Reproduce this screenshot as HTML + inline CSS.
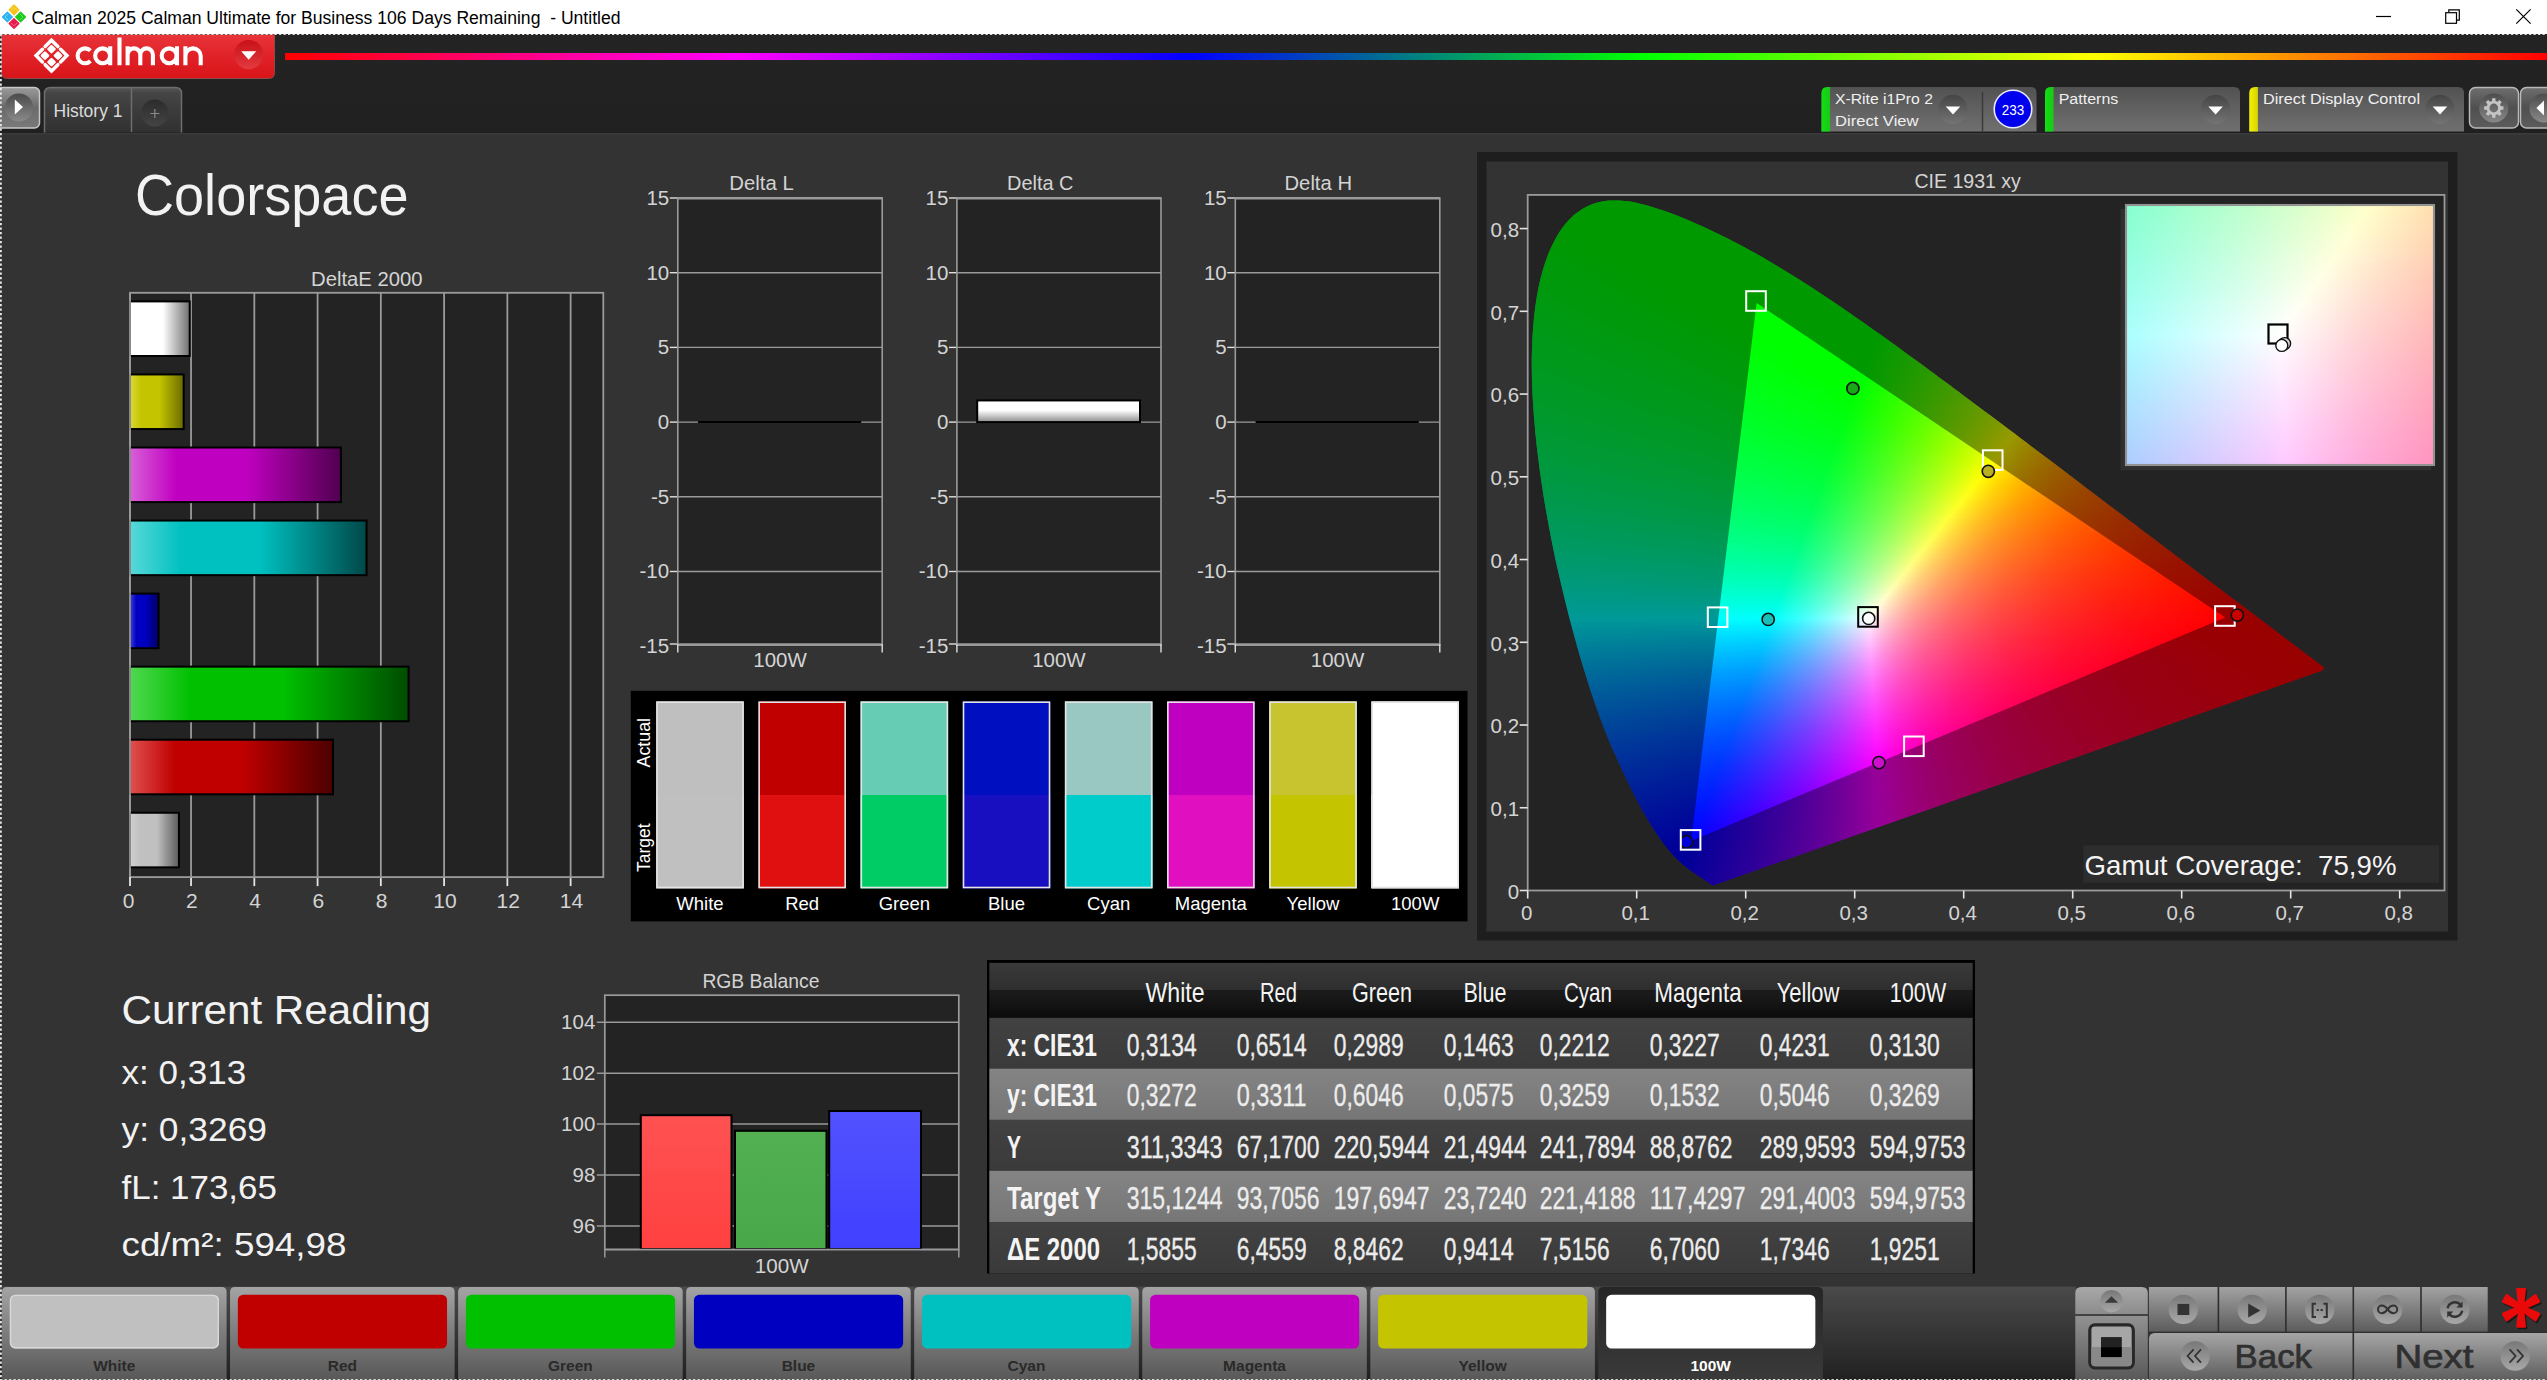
<!DOCTYPE html>
<html><head><meta charset="utf-8"><title>Calman</title>
<style>
html,body{margin:0;padding:0;background:#333333;}
body{width:2547px;height:1380px;overflow:hidden;position:relative;font-family:"Liberation Sans", sans-serif;}
svg{position:absolute;left:0;top:0;}
svg text{font-family:"Liberation Sans", sans-serif;}
#cie,#ins{position:absolute;}
#cie i,#ins i{position:absolute;display:block;}

</style></head><body>
<svg width="2547" height="1380" viewBox="0 0 2547 1380">
<rect x="1477" y="152" width="980.5" height="788.5" fill="#1e1e1e"/>
<rect x="1486.5" y="161.5" width="961.5" height="770" fill="#333333"/>
</svg>
<div style="position:absolute;left:1527.7px;top:194.9px;width:916.8px;height:695.6px;background:#232323"></div><div id="cie" style="left:1528px;top:195px;width:917px;height:696px;clip-path:polygon(184.9px 690.5px,184.8px 690.4px,184.6px 690.3px,184.4px 690.2px,184.2px 690.1px,184.0px 689.9px,183.8px 689.8px,183.6px 689.6px,183.3px 689.5px,183.1px 689.3px,182.8px 689.2px,182.5px 689.0px,182.2px 688.8px,181.9px 688.6px,181.6px 688.4px,181.3px 688.2px,181.0px 688.0px,180.7px 687.7px,180.3px 687.5px,180.0px 687.2px,179.6px 687.0px,179.3px 686.7px,178.9px 686.5px,178.5px 686.2px,178.1px 685.9px,177.7px 685.7px,177.2px 685.4px,176.8px 685.1px,176.3px 684.8px,175.8px 684.4px,175.3px 684.1px,174.8px 683.7px,174.2px 683.4px,173.6px 683.0px,173.0px 682.6px,172.4px 682.2px,171.7px 681.7px,171.1px 681.3px,170.4px 680.9px,169.7px 680.4px,169.0px 679.9px,168.3px 679.4px,167.5px 678.9px,166.7px 678.4px,166.0px 677.9px,165.1px 677.3px,164.3px 676.7px,163.4px 676.1px,162.5px 675.4px,161.6px 674.8px,160.7px 674.0px,159.7px 673.3px,158.7px 672.5px,157.7px 671.7px,156.7px 670.9px,155.6px 670.1px,154.5px 669.2px,153.5px 668.2px,152.3px 667.3px,151.2px 666.2px,150.0px 665.0px,148.7px 663.8px,147.4px 662.5px,146.0px 661.0px,144.6px 659.5px,143.1px 657.8px,141.6px 656.0px,140.0px 654.1px,138.4px 652.1px,136.7px 650.0px,135.0px 647.7px,133.2px 645.3px,131.3px 642.7px,129.5px 640.0px,127.5px 637.1px,125.5px 634.0px,123.5px 630.8px,121.3px 627.3px,119.2px 623.7px,116.9px 619.8px,114.6px 615.7px,112.3px 611.3px,109.8px 606.7px,107.3px 601.9px,104.7px 596.8px,102.0px 591.4px,99.2px 585.7px,96.3px 579.8px,93.4px 573.5px,90.4px 567.0px,87.3px 560.1px,84.1px 553.0px,81.0px 545.5px,77.8px 537.6px,74.6px 529.4px,71.4px 520.9px,68.2px 512.0px,65.0px 502.8px,61.8px 493.2px,58.7px 483.3px,55.5px 473.0px,52.3px 462.4px,49.2px 451.4px,46.0px 440.1px,42.9px 428.5px,39.8px 416.6px,36.8px 404.5px,33.8px 392.1px,30.9px 379.6px,28.0px 366.9px,25.3px 354.0px,22.7px 341.1px,20.3px 328.0px,17.9px 315.0px,15.7px 301.9px,13.7px 288.8px,11.8px 275.8px,10.2px 262.9px,8.6px 250.0px,7.3px 237.3px,6.2px 224.8px,5.3px 212.4px,4.5px 200.3px,4.0px 188.3px,3.8px 176.5px,3.7px 165.0px,4.0px 153.7px,4.4px 142.7px,5.1px 132.0px,6.1px 121.5px,7.3px 111.4px,8.8px 101.7px,10.5px 92.3px,12.6px 83.3px,14.9px 74.8px,17.4px 66.7px,20.2px 59.0px,23.3px 51.9px,26.7px 45.2px,30.2px 39.0px,34.0px 33.3px,37.9px 28.2px,42.1px 23.7px,46.4px 19.6px,51.0px 16.2px,55.6px 13.2px,60.4px 10.8px,65.3px 8.8px,70.4px 7.3px,75.5px 6.3px,80.7px 5.6px,86.0px 5.4px,91.3px 5.5px,96.7px 5.9px,102.1px 6.6px,107.6px 7.6px,113.1px 8.9px,118.6px 10.3px,124.2px 11.9px,129.7px 13.7px,135.3px 15.5px,140.9px 17.5px,146.4px 19.6px,152.0px 21.8px,157.5px 24.0px,162.9px 26.3px,168.3px 28.7px,173.7px 31.1px,179.0px 33.5px,184.2px 36.0px,189.5px 38.5px,194.6px 41.0px,199.8px 43.6px,204.9px 46.2px,210.0px 48.8px,215.0px 51.5px,220.1px 54.2px,225.1px 57.0px,230.1px 59.8px,235.1px 62.6px,240.0px 65.5px,245.0px 68.4px,250.0px 71.4px,254.9px 74.4px,259.9px 77.4px,264.8px 80.5px,269.7px 83.6px,274.7px 86.7px,279.6px 89.8px,284.5px 93.0px,289.4px 96.2px,294.3px 99.4px,299.2px 102.7px,304.1px 106.0px,309.0px 109.3px,313.8px 112.6px,318.7px 115.9px,323.6px 119.3px,328.4px 122.7px,333.3px 126.1px,338.2px 129.5px,343.0px 132.9px,347.9px 136.4px,352.8px 139.8px,357.6px 143.3px,362.5px 146.8px,367.4px 150.3px,372.2px 153.8px,377.1px 157.4px,382.0px 160.9px,386.9px 164.5px,391.8px 168.0px,396.6px 171.6px,401.5px 175.2px,406.4px 178.8px,411.2px 182.4px,416.1px 186.0px,421.0px 189.6px,425.8px 193.2px,430.7px 196.8px,435.5px 200.4px,440.3px 204.0px,445.2px 207.7px,450.0px 211.3px,454.9px 214.9px,459.7px 218.5px,464.5px 222.1px,469.4px 225.7px,474.2px 229.3px,479.0px 232.9px,483.8px 236.5px,488.5px 240.1px,493.3px 243.7px,498.1px 247.3px,502.8px 250.9px,507.5px 254.4px,512.2px 258.0px,516.9px 261.6px,521.6px 265.1px,526.3px 268.6px,530.9px 272.1px,535.5px 275.6px,540.1px 279.1px,544.7px 282.6px,549.3px 286.0px,553.8px 289.5px,558.3px 292.9px,562.8px 296.3px,567.3px 299.7px,571.7px 303.0px,576.2px 306.4px,580.5px 309.7px,584.9px 313.0px,589.2px 316.3px,593.5px 319.5px,597.8px 322.7px,602.0px 325.9px,606.2px 329.1px,610.4px 332.2px,614.5px 335.4px,618.6px 338.4px,622.7px 341.5px,626.7px 344.5px,630.6px 347.5px,634.5px 350.5px,638.4px 353.4px,642.2px 356.3px,646.0px 359.2px,649.7px 362.0px,653.3px 364.7px,656.9px 367.4px,660.4px 370.1px,663.8px 372.7px,667.1px 375.2px,670.4px 377.7px,673.7px 380.2px,676.9px 382.6px,680.0px 384.9px,683.1px 387.3px,686.2px 389.6px,689.2px 391.9px,692.2px 394.1px,695.1px 396.4px,698.0px 398.5px,700.8px 400.7px,703.6px 402.7px,706.2px 404.8px,708.9px 406.7px,711.4px 408.6px,713.9px 410.5px,716.3px 412.3px,718.7px 414.1px,721.0px 415.8px,723.2px 417.5px,725.4px 419.1px,727.6px 420.8px,729.6px 422.3px,731.7px 423.9px,733.6px 425.4px,735.6px 426.8px,737.4px 428.3px,739.2px 429.6px,741.0px 431.0px,742.7px 432.3px,744.4px 433.6px,746.0px 434.8px,747.6px 436.0px,749.1px 437.1px,750.6px 438.3px,752.0px 439.4px,753.4px 440.4px,754.8px 441.4px,756.1px 442.4px,757.4px 443.4px,758.7px 444.3px,759.9px 445.3px,761.1px 446.2px,762.2px 447.0px,763.4px 447.9px,764.4px 448.7px,765.5px 449.5px,766.5px 450.3px,767.5px 451.0px,768.5px 451.8px,769.5px 452.5px,770.4px 453.2px,771.3px 453.9px,772.2px 454.6px,773.1px 455.2px,773.9px 455.9px,774.8px 456.5px,775.6px 457.2px,776.4px 457.8px,777.2px 458.4px,778.0px 458.9px,778.7px 459.5px,779.4px 460.1px,780.1px 460.6px,780.8px 461.1px,781.5px 461.6px,782.2px 462.1px,782.8px 462.6px,783.4px 463.1px,784.0px 463.5px,784.6px 464.0px,785.2px 464.4px,785.7px 464.8px,786.3px 465.2px,786.8px 465.6px,787.3px 466.0px,787.8px 466.3px,788.2px 466.7px,788.7px 467.0px,789.1px 467.3px,789.5px 467.6px,789.9px 467.9px,790.3px 468.2px,790.7px 468.5px,791.0px 468.8px,791.4px 469.1px,791.7px 469.3px,792.1px 469.6px,792.4px 469.8px,792.7px 470.0px,793.0px 470.3px,793.3px 470.5px,793.5px 470.7px,793.8px 470.9px,794.1px 471.1px,794.3px 471.3px,794.6px 471.5px,794.8px 471.6px,795.0px 471.8px,795.2px 472.0px,795.4px 472.1px,795.6px 472.2px,795.6px 472.3px,795.6px 475.0px)"><i style="left:76px;top:4px;width:23px;height:2px;background:linear-gradient(90deg,#0f0 0px,#0f0 23px)"></i><i style="left:66px;top:6px;width:45px;height:2px;background:linear-gradient(90deg,#0f0 0px,#0f0 45px)"></i><i style="left:60px;top:8px;width:59px;height:2px;background:linear-gradient(90deg,#0f0 0px,#0f0 59px)"></i><i style="left:56px;top:10px;width:70px;height:2px;background:linear-gradient(90deg,#0f0 0px,#0f0 70px)"></i><i style="left:52px;top:12px;width:81px;height:2px;background:linear-gradient(90deg,#0f0 0px,#0f0 81px)"></i><i style="left:49px;top:14px;width:90px;height:2px;background:linear-gradient(90deg,#0f0 0px,#0f0 90px)"></i><i style="left:47px;top:16px;width:97px;height:2px;background:linear-gradient(90deg,#0f0 0px,#0f0 97px)"></i><i style="left:44px;top:18px;width:105px;height:2px;background:linear-gradient(90deg,#0f0 0px,#0f0 105px)"></i><i style="left:42px;top:20px;width:112px;height:2px;background:linear-gradient(90deg,#0f0 0px,#0f0 112px)"></i><i style="left:40px;top:22px;width:119px;height:2px;background:linear-gradient(90deg,#0f0 0px,#0f0 119px)"></i><i style="left:38px;top:24px;width:126px;height:2px;background:linear-gradient(90deg,#0f0 0px,#0f0 126px)"></i><i style="left:36px;top:26px;width:133px;height:2px;background:linear-gradient(90deg,#00ff01 0px,#0f0 133px)"></i><i style="left:35px;top:28px;width:138px;height:2px;background:linear-gradient(90deg,#00ff02 0px,#0f0 138px)"></i><i style="left:33px;top:30px;width:145px;height:2px;background:linear-gradient(90deg,#00ff02 0px,#0f0 15px,#0f0 145px)"></i><i style="left:32px;top:32px;width:150px;height:2px;background:linear-gradient(90deg,#00ff03 0px,#0f0 20px,#0f0 150px)"></i><i style="left:30px;top:34px;width:156px;height:2px;background:linear-gradient(90deg,#00ff04 0px,#0f0 25px,#0f0 156px)"></i><i style="left:29px;top:36px;width:162px;height:2px;background:linear-gradient(90deg,#00ff05 0px,#0f0 29px,#0f0 162px)"></i><i style="left:28px;top:38px;width:167px;height:2px;background:linear-gradient(90deg,#00ff05 0px,#0f0 33px,#0f0 167px)"></i><i style="left:26px;top:40px;width:173px;height:2px;background:linear-gradient(90deg,#00ff06 0px,#0f0 39px,#0f0 173px)"></i><i style="left:25px;top:42px;width:178px;height:2px;background:linear-gradient(90deg,#00ff07 0px,#0f0 43px,#0f0 178px)"></i><i style="left:24px;top:44px;width:183px;height:2px;background:linear-gradient(90deg,#00ff08 0px,#0f0 47px,#0f0 183px)"></i><i style="left:23px;top:46px;width:187px;height:2px;background:linear-gradient(90deg,#00ff08 0px,#0f0 52px,#0f0 187px)"></i><i style="left:22px;top:48px;width:192px;height:2px;background:linear-gradient(90deg,#00ff09 0px,#0f0 56px,#0f0 192px)"></i><i style="left:21px;top:50px;width:197px;height:2px;background:linear-gradient(90deg,#00ff0a 0px,#0f0 60px,#0f0 197px)"></i><i style="left:20px;top:52px;width:202px;height:2px;background:linear-gradient(90deg,#00ff0a 0px,#0f0 65px,#0f0 202px)"></i><i style="left:20px;top:54px;width:205px;height:2px;background:linear-gradient(90deg,#00ff0b 0px,#0f0 68px,#0f0 205px)"></i><i style="left:19px;top:56px;width:210px;height:2px;background:linear-gradient(90deg,#00ff0c 0px,#0f0 72px,#0f0 210px)"></i><i style="left:18px;top:58px;width:214px;height:2px;background:linear-gradient(90deg,#00ff0c 0px,#0f0 77px,#0f0 214px)"></i><i style="left:17px;top:60px;width:219px;height:2px;background:linear-gradient(90deg,#00ff0d 0px,#0f0 81px,#0f0 219px)"></i><i style="left:16px;top:62px;width:223px;height:2px;background:linear-gradient(90deg,#00ff0e 0px,#0f0 85px,#0f0 223px)"></i><i style="left:16px;top:64px;width:227px;height:2px;background:linear-gradient(90deg,#00ff0f 0px,#0f0 88px,#0f0 227px)"></i><i style="left:15px;top:66px;width:231px;height:2px;background:linear-gradient(90deg,#00ff0f 0px,#0f0 93px,#0f0 231px)"></i><i style="left:14px;top:68px;width:236px;height:2px;background:linear-gradient(90deg,#00ff10 0px,#0f0 97px,#0f0 236px)"></i><i style="left:14px;top:70px;width:239px;height:2px;background:linear-gradient(90deg,#0f1 0px,#0f0 100px,#0f0 239px)"></i><i style="left:13px;top:72px;width:243px;height:2px;background:linear-gradient(90deg,#0f1 0px,#0f0 105px,#0f0 243px)"></i><i style="left:13px;top:74px;width:247px;height:2px;background:linear-gradient(90deg,#00ff12 0px,#0f0 108px,#0f0 247px)"></i><i style="left:12px;top:76px;width:251px;height:2px;background:linear-gradient(90deg,#00ff13 0px,#0f0 112px,#0f0 251px)"></i><i style="left:11px;top:78px;width:255px;height:2px;background:linear-gradient(90deg,#00ff14 0px,#0f0 117px,#0f0 255px)"></i><i style="left:11px;top:80px;width:258px;height:2px;background:linear-gradient(90deg,#00ff14 0px,#0f0 120px,#0f0 258px)"></i><i style="left:10px;top:82px;width:262px;height:2px;background:linear-gradient(90deg,#00ff15 0px,#0f0 124px,#0f0 262px)"></i><i style="left:10px;top:84px;width:266px;height:2px;background:linear-gradient(90deg,#00ff16 0px,#0f0 128px,#0f0 266px)"></i><i style="left:10px;top:86px;width:269px;height:2px;background:linear-gradient(90deg,#00ff16 0px,#0f0 131px,#0f0 269px)"></i><i style="left:9px;top:88px;width:273px;height:2px;background:linear-gradient(90deg,#00ff17 0px,#0f0 135px,#0f0 273px)"></i><i style="left:9px;top:90px;width:276px;height:2px;background:linear-gradient(90deg,#00ff18 0px,#0f0 138px,#0f0 276px)"></i><i style="left:8px;top:92px;width:280px;height:2px;background:linear-gradient(90deg,#00ff18 0px,#0f0 143px,#0f0 280px)"></i><i style="left:8px;top:94px;width:283px;height:2px;background:linear-gradient(90deg,#00ff19 0px,#0f0 146px,#0f0 283px)"></i><i style="left:7px;top:96px;width:287px;height:2px;background:linear-gradient(90deg,#00ff1a 0px,#0f0 150px,#0f0 287px)"></i><i style="left:7px;top:98px;width:290px;height:2px;background:linear-gradient(90deg,#00ff1b 0px,#0f0 154px,#0f0 290px)"></i><i style="left:7px;top:100px;width:293px;height:2px;background:linear-gradient(90deg,#00ff1b 0px,#0f0 157px,#0f0 293px)"></i><i style="left:6px;top:102px;width:297px;height:2px;background:linear-gradient(90deg,#00ff1c 0px,#0f0 161px,#0f0 297px)"></i><i style="left:6px;top:104px;width:300px;height:2px;background:linear-gradient(90deg,#00ff1d 0px,#0f0 165px,#0f0 300px)"></i><i style="left:6px;top:106px;width:303px;height:2px;background:linear-gradient(90deg,#00ff1d 0px,#0f0 168px,#0f0 303px)"></i><i style="left:6px;top:108px;width:306px;height:2px;background:linear-gradient(90deg,#00ff1e 0px,#0f0 171px,#0f0 306px)"></i><i style="left:5px;top:110px;width:310px;height:2px;background:linear-gradient(90deg,#00ff1f 0px,#0f0 176px,#0f0 310px)"></i><i style="left:5px;top:112px;width:313px;height:2px;background:linear-gradient(90deg,#00ff20 0px,#0f0 179px,#0f0 313px)"></i><i style="left:5px;top:114px;width:316px;height:2px;background:linear-gradient(90deg,#00ff20 0px,#0f0 182px,#0f0 316px)"></i><i style="left:5px;top:116px;width:319px;height:2px;background:linear-gradient(90deg,#00ff21 0px,#0f0 186px,#0f0 319px)"></i><i style="left:4px;top:118px;width:323px;height:2px;background:linear-gradient(90deg,#0f2 0px,#0f0 190px,#0f0 323px)"></i><i style="left:4px;top:120px;width:325px;height:2px;background:linear-gradient(90deg,#00ff23 0px,#0f0 193px,#0f0 325px)"></i><i style="left:4px;top:122px;width:328px;height:2px;background:linear-gradient(90deg,#00ff23 0px,#0f0 197px,#0f0 328px)"></i><i style="left:4px;top:124px;width:331px;height:2px;background:linear-gradient(90deg,#00ff24 0px,#0f0 200px,#0f0 331px)"></i><i style="left:3px;top:126px;width:335px;height:2px;background:linear-gradient(90deg,#00ff25 0px,#0f0 204px,#0f0 335px)"></i><i style="left:3px;top:128px;width:338px;height:2px;background:linear-gradient(90deg,#00ff26 0px,#0f0 207px,#0f0 338px)"></i><i style="left:3px;top:130px;width:341px;height:2px;background:linear-gradient(90deg,#00ff26 0px,#0f0 211px,#0f0 341px)"></i><i style="left:3px;top:132px;width:344px;height:2px;background:linear-gradient(90deg,#00ff27 0px,#0f0 214px,#0f0 344px)"></i><i style="left:3px;top:134px;width:346px;height:2px;background:linear-gradient(90deg,#00ff28 0px,#0f0 217px,#0f0 346px)"></i><i style="left:3px;top:136px;width:349px;height:2px;background:linear-gradient(90deg,#00ff29 0px,#0f0 221px,#0f0 346px,#02ff00 349px)"></i><i style="left:3px;top:138px;width:352px;height:2px;background:linear-gradient(90deg,#00ff29 0px,#0f0 224px,#0f0 345px,#06ff00 352px)"></i><i style="left:2px;top:140px;width:356px;height:2px;background:linear-gradient(90deg,#00ff2a 0px,#0f0 228px,#0f0 346px,#09ff00 356px)"></i><i style="left:2px;top:142px;width:359px;height:2px;background:linear-gradient(90deg,#00ff2b 0px,#0f0 232px,#0f0 345px,#0dff00 359px)"></i><i style="left:2px;top:144px;width:361px;height:2px;background:linear-gradient(90deg,#00ff2c 0px,#00ff17 123px,#0f0 235px,#0f0 344px,#10ff00 361px)"></i><i style="left:2px;top:146px;width:364px;height:2px;background:linear-gradient(90deg,#00ff2c 0px,#00ff17 125px,#0f0 238px,#0f0 343px,#13ff00 364px)"></i><i style="left:2px;top:148px;width:367px;height:2px;background:linear-gradient(90deg,#00ff2d 0px,#00ff18 126px,#0f0 242px,#0f0 343px,#17ff00 367px)"></i><i style="left:2px;top:150px;width:370px;height:2px;background:linear-gradient(90deg,#00ff2e 0px,#00ff18 129px,#0f0 245px,#0f0 342px,#1bff00 370px)"></i><i style="left:2px;top:152px;width:372px;height:2px;background:linear-gradient(90deg,#00ff2f 0px,#00ff19 130px,#0f0 248px,#0f0 341px,#1eff00 372px)"></i><i style="left:2px;top:154px;width:375px;height:2px;background:linear-gradient(90deg,#00ff30 0px,#00ff19 131px,#0f0 252px,#0f0 340px,#2f0 375px)"></i><i style="left:2px;top:156px;width:378px;height:2px;background:linear-gradient(90deg,#00ff30 0px,#00ff1a 134px,#0f0 255px,#0f0 340px,#26ff00 378px)"></i><i style="left:2px;top:158px;width:381px;height:2px;background:linear-gradient(90deg,#00ff31 0px,#00ff1a 136px,#0f0 258px,#0f0 339px,#2aff00 381px)"></i><i style="left:2px;top:160px;width:383px;height:2px;background:linear-gradient(90deg,#00ff32 0px,#00ff1a 138px,#0f0 261px,#0f0 338px,#2dff00 383px)"></i><i style="left:2px;top:162px;width:386px;height:2px;background:linear-gradient(90deg,#0f3 0px,#00ff1b 140px,#0f0 265px,#0f0 338px,#31ff00 386px)"></i><i style="left:2px;top:164px;width:389px;height:2px;background:linear-gradient(90deg,#00ff34 0px,#00ff1b 142px,#0f0 268px,#0f0 337px,#35ff00 389px)"></i><i style="left:2px;top:166px;width:392px;height:2px;background:linear-gradient(90deg,#00ff35 0px,#00ff1c 143px,#0f0 271px,#0f0 336px,#39ff00 392px)"></i><i style="left:2px;top:168px;width:394px;height:2px;background:linear-gradient(90deg,#00ff35 0px,#00ff1c 145px,#0f0 275px,#0f0 335px,#3dff00 394px)"></i><i style="left:2px;top:170px;width:397px;height:2px;background:linear-gradient(90deg,#00ff36 0px,#00ff1d 147px,#0f0 278px,#0f0 335px,#41ff00 397px)"></i><i style="left:2px;top:172px;width:400px;height:2px;background:linear-gradient(90deg,#00ff37 0px,#00ff1d 149px,#0f0 281px,#0f0 334px,#46ff00 400px)"></i><i style="left:2px;top:174px;width:403px;height:2px;background:linear-gradient(90deg,#00ff38 0px,#00ff1e 151px,#0f0 285px,#0f0 333px,#4aff00 403px)"></i><i style="left:2px;top:176px;width:405px;height:2px;background:linear-gradient(90deg,#00ff39 0px,#00ff1e 153px,#0f0 288px,#0f0 332px,#4eff00 405px)"></i><i style="left:2px;top:178px;width:408px;height:2px;background:linear-gradient(90deg,#00ff3a 0px,#00ff1f 155px,#0f0 291px,#0f0 332px,#52ff00 408px)"></i><i style="left:2px;top:180px;width:411px;height:2px;background:linear-gradient(90deg,#00ff3b 0px,#00ff1f 157px,#0f0 295px,#0f0 331px,#28ff00 370px,#57ff00 411px)"></i><i style="left:2px;top:182px;width:413px;height:2px;background:linear-gradient(90deg,#00ff3b 0px,#00ff20 159px,#0f0 298px,#0f0 330px,#29ff00 370px,#5bff00 413px)"></i><i style="left:2px;top:184px;width:416px;height:2px;background:linear-gradient(90deg,#00ff3c 0px,#00ff20 161px,#0f0 301px,#0f0 330px,#2fff00 374px,#60ff00 416px)"></i><i style="left:2px;top:186px;width:419px;height:2px;background:linear-gradient(90deg,#00ff3d 0px,#00ff21 162px,#0f0 304px,#0f0 329px,#31ff00 375px,#65ff00 419px)"></i><i style="left:2px;top:188px;width:422px;height:2px;background:linear-gradient(90deg,#00ff3e 0px,#00ff21 165px,#0f0 308px,#0f0 328px,#32ff00 375px,#6aff00 422px)"></i><i style="left:2px;top:190px;width:424px;height:2px;background:linear-gradient(90deg,#00ff3f 0px,#00ff27 140px,#0f0 311px,#0f0 327px,#32ff00 374px,#6eff00 424px)"></i><i style="left:2px;top:192px;width:427px;height:2px;background:linear-gradient(90deg,#00ff40 0px,#00ff26 148px,#0f0 314px,#0f0 327px,#38ff00 378px,#74ff00 427px)"></i><i style="left:2px;top:194px;width:430px;height:2px;background:linear-gradient(90deg,#00ff41 0px,#00ff26 157px,#0f0 326px,#3aff00 379px,#79ff00 430px)"></i><i style="left:2px;top:196px;width:432px;height:2px;background:linear-gradient(90deg,#00ff42 0px,#00ff25 167px,#0f0 325px,#3bff00 379px,#7dff00 432px)"></i><i style="left:2px;top:198px;width:435px;height:2px;background:linear-gradient(90deg,#00ff43 0px,#00ff24 174px,#0f0 325px,#40ff00 382px,#83ff00 435px)"></i><i style="left:3px;top:200px;width:437px;height:2px;background:linear-gradient(90deg,#00ff43 0px,#00ff25 174px,#00ff01 323px,#42ff00 382px,#89ff00 437px)"></i><i style="left:3px;top:202px;width:439px;height:2px;background:linear-gradient(90deg,#0f4 0px,#00ff26 173px,#00ff02 322px,#43ff00 382px,#8dff00 439px)"></i><i style="left:3px;top:204px;width:442px;height:2px;background:linear-gradient(90deg,#00ff45 0px,#00ff27 173px,#00ff04 321px,#0dff00 334px,#45ff00 382px,#93ff00 442px)"></i><i style="left:3px;top:206px;width:445px;height:2px;background:linear-gradient(90deg,#00ff46 0px,#00ff28 173px,#00ff05 321px,#12ff00 337px,#49ff00 385px,#9f0 445px)"></i><i style="left:3px;top:208px;width:447px;height:2px;background:linear-gradient(90deg,#00ff47 0px,#00ff29 172px,#00ff06 320px,#16ff00 340px,#4cff00 386px,#9eff00 447px)"></i><i style="left:3px;top:210px;width:450px;height:2px;background:linear-gradient(90deg,#00ff48 0px,#00ff2a 172px,#00ff07 319px,#1bff00 344px,#4dff00 386px,#a4ff00 450px)"></i><i style="left:3px;top:212px;width:453px;height:2px;background:linear-gradient(90deg,#00ff49 0px,#00ff2b 171px,#00ff08 318px,#20ff00 347px,#50ff00 387px,#abff00 453px)"></i><i style="left:3px;top:214px;width:455px;height:2px;background:linear-gradient(90deg,#00ff4a 0px,#00ff2c 171px,#00ff09 318px,#24ff00 350px,#54ff00 389px,#b0ff00 455px)"></i><i style="left:4px;top:216px;width:457px;height:2px;background:linear-gradient(90deg,#00ff4b 0px,#00ff2d 170px,#00ff0b 316px,#29ff00 352px,#56ff00 389px,#86ff00 424px,#b7ff00 457px)"></i><i style="left:4px;top:218px;width:460px;height:2px;background:linear-gradient(90deg,#00ff4c 0px,#00ff2e 170px,#00ff0c 315px,#2eff00 356px,#59ff00 390px,#8aff00 426px,#beff00 460px)"></i><i style="left:4px;top:220px;width:462px;height:2px;background:linear-gradient(90deg,#00ff4d 0px,#00ff30 170px,#00ff0d 315px,#3f0 359px,#5dff00 392px,#8fff00 428px,#c3ff00 462px)"></i><i style="left:4px;top:222px;width:465px;height:2px;background:linear-gradient(90deg,#00ff4e 0px,#00ff31 169px,#00ff0e 314px,#38ff00 362px,#60ff00 393px,#94ff00 430px,#caff00 465px)"></i><i style="left:4px;top:224px;width:468px;height:2px;background:linear-gradient(90deg,#00ff4f 0px,#00ff32 169px,#00ff10 313px,#3eff00 366px,#63ff00 394px,#9f0 432px,#d1ff00 468px)"></i><i style="left:4px;top:226px;width:470px;height:2px;background:linear-gradient(90deg,#00ff50 0px,#0f3 168px,#0f1 312px,#43ff00 369px,#64ff00 394px,#9cff00 433px,#d7ff00 470px)"></i><i style="left:4px;top:228px;width:473px;height:2px;background:linear-gradient(90deg,#00ff51 0px,#00ff34 168px,#00ff12 312px,#49ff00 372px,#6aff00 397px,#a3ff00 436px,#dfff00 473px)"></i><i style="left:5px;top:230px;width:475px;height:2px;background:linear-gradient(90deg,#00ff52 0px,#00ff35 167px,#00ff13 310px,#4eff00 374px,#6dff00 397px,#a8ff00 437px,#e7ff00 475px)"></i><i style="left:5px;top:232px;width:477px;height:2px;background:linear-gradient(90deg,#00ff53 0px,#00ff36 167px,#00ff15 309px,#54ff00 378px,#6fff00 397px,#acff00 438px,#edff00 477px)"></i><i style="left:5px;top:234px;width:480px;height:2px;background:linear-gradient(90deg,#00ff54 0px,#00ff38 166px,#00ff16 308px,#29ff0c 343px,#5aff00 381px,#72ff00 398px,#b1ff00 440px,#f5ff00 480px)"></i><i style="left:5px;top:236px;width:483px;height:2px;background:linear-gradient(90deg,#00ff56 0px,#00ff39 166px,#00ff17 308px,#2fff0c 347px,#60ff00 384px,#78ff00 401px,#b8ff00 443px,#fdff00 483px)"></i><i style="left:5px;top:238px;width:485px;height:2px;background:linear-gradient(90deg,#00ff57 0px,#00ff3a 166px,#00ff19 307px,#31ff0d 348px,#67ff00 388px,#b1ff00 437px,#feff00 482px,#fffa00 485px)"></i><i style="left:6px;top:240px;width:487px;height:2px;background:linear-gradient(90deg,#00ff58 0px,#00ff3b 165px,#00ff1a 305px,#32ff0e 347px,#6dff00 390px,#b3ff00 436px,#feff00 479px,#fff200 487px)"></i><i style="left:6px;top:242px;width:490px;height:2px;background:linear-gradient(90deg,#00ff59 0px,#00ff3c 165px,#00ff1b 305px,#3aff0e 352px,#78ff00 397px,#baff00 439px,#ff0 478px,#ffea00 490px)"></i><i style="left:6px;top:244px;width:492px;height:2px;background:linear-gradient(90deg,#00ff5a 0px,#00ff3e 164px,#00ff1d 304px,#3aff0f 351px,#77ff01 395px,#b9ff00 437px,#feff00 476px,#ffe400 492px)"></i><i style="left:6px;top:246px;width:495px;height:2px;background:linear-gradient(90deg,#00ff5b 0px,#00ff3f 164px,#00ff1e 303px,#39ff11 349px,#78ff02 394px,#baff00 436px,#ff0 475px,#fd0 495px)"></i><i style="left:6px;top:248px;width:498px;height:2px;background:linear-gradient(90deg,#00ff5c 0px,#00ff40 163px,#00ff20 302px,#37ff13 347px,#76ff04 392px,#89ff00 404px,#b9ff00 434px,#feff00 473px,#ffd600 498px)"></i><i style="left:7px;top:250px;width:499px;height:2px;background:linear-gradient(90deg,#00ff5d 0px,#00ff41 163px,#00ff21 301px,#3aff14 347px,#78ff05 391px,#8fff00 406px,#c5ff00 439px,#fdff00 470px,#ffd100 499px)"></i><i style="left:7px;top:252px;width:502px;height:2px;background:linear-gradient(90deg,#00ff5e 0px,#00ff43 162px,#00ff23 300px,#3aff15 346px,#78ff07 390px,#96ff00 409px,#caff00 440px,#ff0 469px,#ffe200 486px,#ffca00 502px)"></i><i style="left:7px;top:254px;width:505px;height:2px;background:linear-gradient(90deg,#00ff60 0px,#0f4 161px,#00ff24 299px,#39ff17 344px,#77ff09 388px,#9eff00 413px,#feff00 467px,#ffde00 487px,#ffc400 505px)"></i><i style="left:7px;top:256px;width:507px;height:2px;background:linear-gradient(90deg,#00ff61 0px,#00ff46 161px,#00ff26 298px,#36ff19 341px,#76ff0b 386px,#a5ff00 416px,#ff0 466px,#ffde00 485px,#ffbf00 507px)"></i><i style="left:8px;top:258px;width:509px;height:2px;background:linear-gradient(90deg,#00ff62 0px,#00ff47 160px,#00ff27 297px,#3aff1a 342px,#78ff0c 385px,#adff00 418px,#feff00 463px,#ffd800 486px,#ffb900 509px)"></i><i style="left:8px;top:260px;width:512px;height:2px;background:linear-gradient(90deg,#00ff63 0px,#00ff48 160px,#00ff29 296px,#3aff1c 341px,#78ff0e 384px,#b4ff00 421px,#ff0 462px,#ffd700 485px,#ffb400 512px)"></i><i style="left:8px;top:262px;width:514px;height:2px;background:linear-gradient(90deg,#00ff64 0px,#00ff4a 159px,#00ff2a 295px,#38ff1e 339px,#77ff10 382px,#beff00 425px,#feff00 460px,#ffd300 486px,#ffaf00 514px)"></i><i style="left:8px;top:264px;width:517px;height:2px;background:linear-gradient(90deg,#00ff65 0px,#00ff4b 159px,#00ff2c 294px,#36ff20 336px,#76ff12 380px,#c5ff00 428px,#fffe00 459px,#ffd100 486px,#fa0 517px)"></i><i style="left:9px;top:266px;width:518px;height:2px;background:linear-gradient(90deg,#00ff67 0px,#00ff4c 158px,#00ff2d 293px,#3aff21 337px,#77ff13 379px,#cdff00 430px,#ff0 456px,#ffce00 485px,#ffa600 518px)"></i><i style="left:9px;top:268px;width:521px;height:2px;background:linear-gradient(90deg,#00ff68 0px,#00ff4e 158px,#00ff2f 292px,#3aff22 336px,#78ff15 378px,#a7ff0a 407px,#d7ff00 434px,#feff00 454px,#ffca00 486px,#ffa100 521px)"></i><i style="left:9px;top:270px;width:524px;height:2px;background:linear-gradient(90deg,#00ff69 0px,#00ff4f 157px,#00ff31 291px,#37ff25 333px,#76ff17 376px,#aaff0c 407px,#e0ff00 437px,#ff0 453px,#ffe300 468px,#ffc900 485px,#ffb100 504px,#ff9c00 524px)"></i><i style="left:9px;top:272px;width:526px;height:2px;background:linear-gradient(90deg,#00ff6a 0px,#00ff51 157px,#00ff32 291px,#3bff25 335px,#78ff18 376px,#baff0a 415px,#e9ff00 440px,#feff00 451px,#ffe000 468px,#ffc700 485px,#ffae00 505px,#ff9800 526px)"></i><i style="left:10px;top:274px;width:528px;height:2px;background:linear-gradient(90deg,#00ff6c 0px,#00ff52 156px,#00ff34 289px,#39ff27 332px,#77ff1a 373px,#b7ff0d 411px,#f2ff00 442px,#fffe00 449px,#ffdf00 466px,#ffc300 485px,#ffab00 505px,#ff9400 528px)"></i><i style="left:10px;top:276px;width:531px;height:2px;background:linear-gradient(90deg,#00ff6d 0px,#00ff53 156px,#00ff35 288px,#39ff29 331px,#77ff1c 372px,#baff0e 411px,#ff0 447px,#ffde00 465px,#ffc100 485px,#ffa600 507px,#ff8f00 531px)"></i><i style="left:10px;top:278px;width:533px;height:2px;background:linear-gradient(90deg,#00ff6e 0px,#0f5 155px,#00ff37 287px,#35ff2c 327px,#74ff1f 369px,#b3ff12 406px,#fffe01 446px,#fd0 464px,#ffbe00 485px,#ffa300 508px,#ff8c00 533px)"></i><i style="left:10px;top:280px;width:536px;height:2px;background:linear-gradient(90deg,#00ff6f 0px,#00ff56 155px,#00ff39 287px,#3bff2d 330px,#78ff20 370px,#b9ff12 408px,#ffff04 444px,#ffdc00 463px,#ffbc00 485px,#ffa000 509px,#ff8700 536px)"></i><i style="left:11px;top:282px;width:538px;height:2px;background:linear-gradient(90deg,#00ff71 0px,#00ff58 154px,#00ff3a 285px,#3bff2e 328px,#78ff22 368px,#baff14 406px,#feff06 441px,#ffe500 455px,#ffba00 484px,#ff9d00 509px,#ff8300 538px)"></i><i style="left:11px;top:284px;width:540px;height:2px;background:linear-gradient(90deg,#00ff72 0px,#00ff59 154px,#00ff3c 284px,#38ff31 325px,#77ff24 366px,#b7ff17 403px,#fffe08 440px,#fd0 458px,#ffb700 484px,#ff9a00 510px,#ff8000 540px)"></i><i style="left:11px;top:286px;width:543px;height:2px;background:linear-gradient(90deg,#00ff73 0px,#00ff5b 153px,#00ff3e 283px,#36ff33 323px,#76ff26 364px,#b8ff19 402px,#ffff0a 438px,#ffd500 461px,#ffb500 484px,#ff9600 512px,#ff7c00 543px)"></i><i style="left:12px;top:288px;width:545px;height:2px;background:linear-gradient(90deg,#00ff75 0px,#00ff5c 153px,#00ff40 282px,#39ff34 323px,#76ff28 362px,#b5ff1b 398px,#fffe0c 436px,#ffd602 458px,#ffb300 483px,#ff9300 512px,#ff7800 545px)"></i><i style="left:12px;top:290px;width:547px;height:2px;background:linear-gradient(90deg,#00ff76 0px,#00ff5e 152px,#00ff41 281px,#3aff36 323px,#78ff2a 362px,#b9ff1d 399px,#ffff0f 434px,#ffd504 457px,#ffc500 467px,#ffb000 483px,#ff9100 513px,#ff7500 547px)"></i><i style="left:12px;top:292px;width:550px;height:2px;background:linear-gradient(90deg,#0f7 0px,#00ff5f 152px,#00ff43 280px,#37ff38 320px,#76ff2c 360px,#b8ff1f 397px,#feff11 432px,#ffd306 456px,#ffbf00 470px,#ffae00 483px,#ff8e00 514px,#ff7200 550px)"></i><i style="left:13px;top:294px;width:551px;height:2px;background:linear-gradient(90deg,#00ff79 0px,#00ff61 150px,#00ff45 278px,#34ff3b 316px,#75ff2e 357px,#b7ff21 394px,#fffe13 430px,#ffd207 454px,#ffb700 473px,#ffac00 482px,#ff8b00 514px,#ff6f00 551px)"></i><i style="left:13px;top:296px;width:554px;height:2px;background:linear-gradient(90deg,#00ff7a 0px,#00ff63 151px,#00ff47 278px,#3aff3c 319px,#77ff30 357px,#baff23 394px,#ffff16 428px,#ffd109 453px,#fa0 482px,#f80 515px,#ff6b00 554px)"></i><i style="left:13px;top:298px;width:557px;height:2px;background:linear-gradient(90deg,#00ff7c 0px,#00ff64 150px,#00ff49 277px,#39ff3e 317px,#76ff32 355px,#b5ff26 390px,#fffe18 427px,#ffd00b 452px,#ffa700 482px,#ff8500 517px,#ff6800 557px)"></i><i style="left:13px;top:300px;width:559px;height:2px;background:linear-gradient(90deg,#00ff7d 0px,#0f6 149px,#00ff4b 276px,#37ff40 315px,#76ff34 354px,#b7ff28 390px,#ffff1b 425px,#ffcf0c 451px,#ffa601 481px,#ff8300 517px,#ff6500 559px)"></i><i style="left:14px;top:302px;width:561px;height:2px;background:linear-gradient(90deg,#00ff7e 0px,#00ff68 148px,#00ff4d 274px,#34ff43 311px,#75ff37 351px,#b8ff2a 388px,#feff1d 422px,#ffcc0e 450px,#ffa301 481px,#ff8000 518px,#ff6200 561px)"></i><i style="left:14px;top:304px;width:564px;height:2px;background:linear-gradient(90deg,#00ff80 0px,#00ff69 148px,#00ff4e 274px,#3aff44 314px,#77ff39 351px,#b7ff2d 386px,#ffff1f 421px,#ffe417 434px,#ffcc10 448px,#ffa203 480px,#ff9800 489px,#ff7e00 518px,#ff5f00 564px)"></i><i style="left:14px;top:306px;width:566px;height:2px;background:linear-gradient(90deg,#00ff81 0px,#00ff6b 148px,#00ff51 273px,#39ff46 312px,#77ff3b 350px,#baff2f 386px,#ff2 419px,#ffe319 433px,#ffcb12 447px,#ffa004 480px,#ff9300 492px,#ff7b00 519px,#ff5d00 566px)"></i><i style="left:15px;top:308px;width:568px;height:2px;background:linear-gradient(90deg,#00ff83 0px,#00ff6d 147px,#00ff53 271px,#35ff49 308px,#75ff3d 347px,#b4ff32 381px,#fffe24 417px,#ffe41c 430px,#ffca13 445px,#ff9e05 479px,#ff8e00 494px,#ff7800 520px,#ff5a00 568px)"></i><i style="left:15px;top:310px;width:571px;height:2px;background:linear-gradient(90deg,#00ff84 0px,#00ff6e 147px,#00ff54 271px,#3aff4a 310px,#78ff3f 347px,#b9ff33 382px,#ffff27 415px,#ffe21e 429px,#ffc915 444px,#ffb10d 461px,#ff9b06 479px,#ff8a00 497px,#ff7600 521px,#ff5700 571px)"></i><i style="left:15px;top:312px;width:573px;height:2px;background:linear-gradient(90deg,#00ff86 0px,#00ff70 146px,#00ff56 270px,#3aff4c 309px,#78ff41 346px,#b8ff36 380px,#feff2a 413px,#ffdf1f 429px,#ffc616 444px,#ffae0e 461px,#ff9907 479px,#ff8400 501px,#ff7300 522px,#ff5400 573px)"></i><i style="left:16px;top:314px;width:575px;height:2px;background:linear-gradient(90deg,#00ff87 0px,#00ff72 145px,#00ff59 268px,#38ff4f 306px,#76ff44 343px,#b7ff39 377px,#fdff2c 410px,#ffdc20 428px,#ffc518 442px,#ffad10 459px,#ff9708 478px,#ff8000 503px,#ff7100 522px,#ff5200 575px)"></i><i style="left:16px;top:316px;width:578px;height:2px;background:linear-gradient(90deg,#00ff89 0px,#00ff74 145px,#00ff5b 267px,#35ff51 303px,#75ff47 341px,#b8ff3b 376px,#feff2f 409px,#ffe024 424px,#ffc51a 440px,#ffac11 458px,#ff960a 477px,#ff7c00 506px,#ff6f00 523px,#ff4f00 578px)"></i><i style="left:16px;top:318px;width:580px;height:2px;background:linear-gradient(90deg,#00ff8b 0px,#00ff76 145px,#00ff5d 267px,#3aff53 305px,#77ff49 341px,#b8ff3d 375px,#feff32 407px,#ffdb25 425px,#ffc21b 440px,#ffaa12 458px,#ff940b 477px,#f70 510px,#ff6000 543px,#ff4d00 580px)"></i><i style="left:17px;top:320px;width:582px;height:2px;background:linear-gradient(90deg,#00ff8c 0px,#0f7 144px,#00ff5f 265px,#3aff55 303px,#77ff4b 339px,#b9ff40 373px,#ffff34 405px,#ffe029 420px,#ffc31e 437px,#ffa914 456px,#ff920c 476px,#ff7300 512px,#ff5d00 545px,#ff4a00 582px)"></i><i style="left:17px;top:322px;width:584px;height:2px;background:linear-gradient(90deg,#00ff8e 0px,#00ff79 143px,#00ff61 264px,#36ff58 300px,#76ff4e 337px,#b8ff43 371px,#feff37 403px,#ffdd2a 420px,#ffc220 436px,#ffa716 455px,#ff910d 475px,#ff6f00 515px,#ff5a00 547px,#ff4800 584px)"></i><i style="left:18px;top:324px;width:586px;height:2px;background:linear-gradient(90deg,#00ff8f 0px,#00ff7b 143px,#01ff63 263px,#3bff5a 301px,#78ff50 336px,#b9ff45 369px,#fdff3a 400px,#ffd92b 419px,#ffbf21 435px,#ffa517 454px,#ff8e0e 475px,#ff6a00 518px,#ff5700 550px,#ff4600 586px)"></i><i style="left:18px;top:326px;width:589px;height:2px;background:linear-gradient(90deg,#00ff91 0px,#00ff7d 142px,#00ff65 262px,#3bff5c 300px,#78ff52 335px,#baff48 368px,#feff3d 399px,#ffdc2e 416px,#ffbf23 433px,#ffa519 452px,#ff8d0f 474px,#ff6700 521px,#ff5400 553px,#ff4300 589px)"></i><i style="left:18px;top:328px;width:591px;height:2px;background:linear-gradient(90deg,#00ff93 0px,#00ff7f 142px,#00ff68 261px,#39ff5f 298px,#7f5 333px,#b8ff4a 366px,#fdff40 397px,#ffdb30 415px,#ffbe25 432px,#ffa31a 452px,#ff8b10 474px,#ff7608 498px,#ff6300 524px,#ff4100 591px)"></i><i style="left:19px;top:330px;width:593px;height:2px;background:linear-gradient(90deg,#00ff94 0px,#00ff81 141px,#00ff6a 259px,#36ff61 294px,#75ff58 330px,#b7ff4d 363px,#ffff42 395px,#ffdd34 411px,#ffbe27 429px,#ffa31c 449px,#ff8a12 472px,#ff7308 498px,#ff5f00 527px,#ff3f00 593px)"></i><i style="left:19px;top:332px;width:596px;height:2px;background:linear-gradient(90deg,#00ff96 0px,#00ff83 141px,#00ff6c 259px,#3bff63 296px,#78ff5a 330px,#b8ff50 362px,#feff45 393px,#ffda35 411px,#ffbb28 429px,#ffa11d 449px,#ff8813 472px,#ff7109 499px,#ff5c00 530px,#ff3d00 596px)"></i><i style="left:19px;top:334px;width:598px;height:2px;background:linear-gradient(90deg,#00ff98 0px,#00ff85 140px,#00ff6e 258px,#3bff66 295px,#78ff5c 329px,#b9ff53 361px,#ffff48 392px,#ffdc39 408px,#ffbc2b 427px,#ff9f1f 448px,#ff8714 471px,#ff6e09 500px,#ff5900 533px,#ff3b00 598px)"></i><i style="left:20px;top:336px;width:600px;height:2px;background:linear-gradient(90deg,#0f9 0px,#00ff87 139px,#00ff71 256px,#38ff69 291px,#76ff5f 326px,#b7ff56 358px,#feff4b 389px,#ffd93a 407px,#ffba2d 425px,#ff9e20 446px,#ff8515 470px,#ff6c0a 500px,#ff5600 535px,#ff3800 600px)"></i><i style="left:20px;top:338px;width:603px;height:2px;background:linear-gradient(90deg,#00ff9b 0px,#00ff89 138px,#00ff73 255px,#36ff6b 289px,#75ff62 324px,#b6ff59 356px,#fdff4e 387px,#ffd63b 407px,#ffb82e 425px,#ff9c21 446px,#ff8316 470px,#ff690a 502px,#ff5200 539px,#ff3600 603px)"></i><i style="left:21px;top:340px;width:604px;height:2px;background:linear-gradient(90deg,#00ff9d 0px,#00ff8b 138px,#00ff76 254px,#3bff6d 290px,#77ff65 323px,#b9ff5b 355px,#ffff51 385px,#ffd83f 403px,#ffb830 422px,#ff9b23 444px,#ff8217 468px,#ff660b 502px,#ff4f00 541px,#ff3500 604px)"></i><i style="left:21px;top:342px;width:607px;height:2px;background:linear-gradient(90deg,#00ff9f 0px,#00ff8d 137px,#00ff78 253px,#39ff70 288px,#78ff67 322px,#b8ff5e 353px,#feff54 383px,#ffd741 402px,#ffb732 421px,#ff9a24 443px,#ff8018 468px,#ff640b 503px,#ff4c00 544px,#ff3200 607px)"></i><i style="left:21px;top:344px;width:610px;height:2px;background:linear-gradient(90deg,#00ffa1 0px,#00ff8f 137px,#00ff7b 252px,#37ff73 286px,#76ff6a 320px,#b9ff61 352px,#ffff57 382px,#ffd744 400px,#ffb534 420px,#ff9826 442px,#ff7e19 468px,#ff610c 505px,#ff4900 548px,#ff3000 610px)"></i><i style="left:22px;top:346px;width:611px;height:2px;background:linear-gradient(90deg,#00ffa2 0px,#00ff91 136px,#00ff7d 250px,#34ff76 282px,#74ff6d 317px,#b7ff64 349px,#feff5b 379px,#ffd646 398px,#ffb637 417px,#ff9728 440px,#ff7d1b 466px,#ff5f0c 505px,#ff4600 550px,#ff2f00 611px)"></i><i style="left:22px;top:348px;width:614px;height:2px;background:linear-gradient(90deg,#00ffa4 0px,#00ff93 136px,#00ff80 250px,#39ff78 284px,#77ff70 317px,#b8ff67 348px,#fdff5e 377px,#ffd549 397px,#ffb338 417px,#ff9529 440px,#ff7b1c 466px,#ff5d0d 506px,#f40 553px,#ff2d00 614px)"></i><i style="left:23px;top:350px;width:616px;height:2px;background:linear-gradient(90deg,#00ffa6 0px,#00ff96 135px,#00ff82 248px,#39ff7b 282px,#77ff73 315px,#b9ff6a 346px,#ffff61 375px,#ffd54c 394px,#ffb33a 414px,#ff952b 437px,#ff7a1d 464px,#ff5b0d 506px,#ff4100 555px,#ff2b00 616px)"></i><i style="left:23px;top:352px;width:618px;height:2px;background:linear-gradient(90deg,#00ffa8 0px,#00ff98 134px,#00ff85 247px,#37ff7e 280px,#75ff76 313px,#b8ff6d 344px,#feff65 373px,#ffd44e 393px,#ffb23c 413px,#ff932c 437px,#ff781e 464px,#ff580e 507px,#ff3e00 559px,#ff2900 618px)"></i><i style="left:23px;top:354px;width:621px;height:2px;background:linear-gradient(90deg,#0fa 0px,#00ff9a 134px,#01ff87 247px,#3aff80 281px,#78ff79 313px,#b9ff71 343px,#ffff68 372px,#ffd652 390px,#ffb23f 411px,#ff932e 435px,#ff771f 463px,#ff560e 508px,#ff3c00 562px,#ff2800 621px)"></i><i style="left:24px;top:356px;width:622px;height:2px;background:linear-gradient(90deg,#00ffac 0px,#00ff9d 133px,#00ff8a 245px,#3aff83 279px,#78ff7c 311px,#b9ff74 341px,#feff6b 369px,#ffd353 389px,#ffaf40 410px,#ff902f 434px,#ff7520 462px,#ff540f 508px,#ff3900 564px,#ff2600 622px)"></i><i style="left:24px;top:358px;width:625px;height:2px;background:linear-gradient(90deg,#00ffae 0px,#00ff9f 133px,#00ff8d 244px,#39ff86 277px,#77ff7f 309px,#b8ff77 339px,#fdff6f 367px,#ffd155 388px,#ffae42 409px,#ff8f31 433px,#ff7422 461px,#ff520f 509px,#ff3700 568px,#ff2400 625px)"></i><i style="left:25px;top:360px;width:627px;height:2px;background:linear-gradient(90deg,#00ffb0 0px,#00ffa1 132px,#00ff90 242px,#35ff8a 273px,#75ff82 306px,#b7ff7b 336px,#ffff72 365px,#ffd45a 384px,#ffae45 406px,#ff8e32 431px,#ff7223 460px,#ff5010 509px,#ff3400 570px,#f20 627px)"></i><i style="left:25px;top:362px;width:629px;height:2px;background:linear-gradient(90deg,#00ffb2 0px,#00ffa3 132px,#00ff92 242px,#3aff8c 275px,#77ff85 306px,#b8ff7e 335px,#fdff76 363px,#ffd15b 384px,#ffad47 405px,#ff8d34 430px,#ff7124 459px,#ff4f11 508px,#ff3401 569px,#ff2100 629px)"></i><i style="left:25px;top:364px;width:632px;height:2px;background:linear-gradient(90deg,#00ffb4 0px,#00ffa6 131px,#00ff95 241px,#3aff8f 274px,#78ff88 305px,#b8ff81 334px,#ffff79 362px,#ffd360 381px,#ffad49 403px,#ff8c36 429px,#ff6f25 459px,#ff4e12 508px,#ff3302 569px,#ff1f00 632px)"></i><i style="left:26px;top:366px;width:634px;height:2px;background:linear-gradient(90deg,#00ffb6 0px,#00ffa8 130px,#00ff98 239px,#38ff92 271px,#76ff8c 302px,#b7ff85 331px,#feff7d 359px,#ffd262 379px,#ffac4b 401px,#ff8a37 427px,#ff6e26 457px,#ff4d13 506px,#ff3203 567px,#ff2d00 580px,#ff1e00 634px)"></i><i style="left:26px;top:368px;width:636px;height:2px;background:linear-gradient(90deg,#00ffb8 0px,#00ffab 129px,#00ff9b 238px,#34ff96 268px,#74ff8f 300px,#b6ff88 329px,#fdff81 357px,#fffe80 358px,#ffce63 379px,#ffa94c 401px,#ff8838 427px,#ff6c27 457px,#ff4c14 506px,#ff3103 566px,#ff2b00 583px,#ff1c00 636px)"></i><i style="left:27px;top:370px;width:638px;height:2px;background:linear-gradient(90deg,#00ffba 0px,#00ffad 129px,#00ff9e 237px,#3aff98 269px,#79ff92 300px,#b9ff8b 328px,#feff85 355px,#ffd168 375px,#ffa94f 398px,#ff883b 424px,#ff6b29 455px,#ff5219 491px,#ff3d0c 533px,#ff2900 585px,#ff1b00 638px)"></i><i style="left:27px;top:372px;width:641px;height:2px;background:linear-gradient(90deg,#00ffbc 0px,#00ffb0 128px,#00ffa1 236px,#3aff9b 268px,#77ff95 298px,#b7ff8f 326px,#fdff88 353px,#ffcd69 375px,#ffa851 397px,#ff873c 423px,#ff6a2a 454px,#ff511a 490px,#ff3b0d 533px,#ff2700 588px,#ff1900 641px)"></i><i style="left:28px;top:374px;width:642px;height:2px;background:linear-gradient(90deg,#00ffbf 0px,#00ffb3 127px,#00ffa4 234px,#36ff9f 264px,#75ff99 295px,#b8ff93 324px,#ffff8c 351px,#ffd06e 371px,#ffa854 394px,#ff863e 421px,#ff692b 452px,#ff501b 489px,#ff3a0d 532px,#ff2500 590px,#ff1800 642px)"></i><i style="left:28px;top:376px;width:645px;height:2px;background:linear-gradient(90deg,#00ffc1 0px,#00ffb5 127px,#01ffa7 234px,#3affa2 265px,#78ff9c 295px,#b9ff96 323px,#feff90 349px,#ffce70 370px,#ffa656 393px,#ff8440 420px,#ff672c 452px,#ff4e1c 489px,#ff380e 533px,#ff2300 594px,#ff1600 645px)"></i><i style="left:28px;top:378px;width:647px;height:2px;background:linear-gradient(90deg,#00ffc3 0px,#00ffb8 127px,#0fa 233px,#3affa5 264px,#76ffa0 293px,#b8ff9a 321px,#fdff94 347px,#ffff94 348px,#ffe583 358px,#ffcd72 369px,#ffa558 392px,#ff8341 419px,#ff662e 451px,#ff4c1d 489px,#ff370f 533px,#ff2100 597px,#ff1500 647px)"></i><i style="left:29px;top:380px;width:649px;height:2px;background:linear-gradient(90deg,#00ffc5 0px,#00ffba 126px,#00ffae 231px,#38ffa9 261px,#77ffa4 291px,#b9ff9e 319px,#feff98 345px,#ffcd76 366px,#ffa55b 389px,#ff8243 417px,#ff642f 450px,#ff4a1d 489px,#ff350f 534px,#ff2000 599px,#ff1400 649px)"></i><i style="left:29px;top:382px;width:652px;height:2px;background:linear-gradient(90deg,#00ffc8 0px,#00ffbd 125px,#00ffb1 230px,#36ffac 259px,#75ffa7 289px,#b7ffa2 317px,#fdff9c 343px,#ffcc79 365px,#ffa45d 388px,#ff8145 416px,#ff6330 449px,#ff491e 488px,#ff340f 534px,#ff1e00 603px,#ff1200 652px)"></i><i style="left:30px;top:384px;width:653px;height:2px;background:linear-gradient(90deg,#00ffca 0px,#01ffb4 229px,#39ffb0 259px,#77ffab 288px,#b8ffa6 315px,#ffffa0 341px,#ffce7e 361px,#ffa460 385px,#ff8147 413px,#ff6231 447px,#ff4920 486px,#ff3310 533px,#ff1c00 605px,#f10 653px)"></i><i style="left:30px;top:386px;width:656px;height:2px;background:linear-gradient(90deg,#0fc 0px,#00ffb7 228px,#39ffb3 258px,#78ffaf 287px,#b9ffaa 314px,#feffa5 339px,#ffcb7f 361px,#ffa161 385px,#ff7e48 413px,#ff6032 447px,#ff4720 487px,#ff3111 534px,#ff1a00 608px,#ff0f00 656px)"></i><i style="left:31px;top:388px;width:658px;height:2px;background:linear-gradient(90deg,#00ffcf 0px,#0fb 226px,#37ffb7 255px,#76ffb3 284px,#b8ffae 311px,#ffffa9 337px,#ffe495 347px,#ffcb83 358px,#ffa164 382px,#ff7d4a 411px,#ff5f34 445px,#ff4521 486px,#ff3011 534px,#ff1800 611px,#ff0e00 658px)"></i><i style="left:31px;top:390px;width:660px;height:2px;background:linear-gradient(90deg,#00ffd1 0px,#00ffbe 225px,#3fb 252px,#72ffb7 281px,#aeffb3 306px,#feffad 335px,#fffdac 336px,#ffe298 346px,#ffc985 357px,#ffa066 381px,#ff7c4c 410px,#ff5d35 445px,#f42 486px,#ff2e12 534px,#ff1700 614px,#ff0d00 660px)"></i><i style="left:32px;top:392px;width:662px;height:2px;background:linear-gradient(90deg,#00ffd4 0px,#00ffc2 224px,#39ffbe 253px,#77ffba 281px,#b5ffb6 306px,#fffeb1 333px,#ffe39d 343px,#ffca8a 354px,#ff9e68 379px,#ff7b4d 408px,#ff5c36 443px,#ff4222 485px,#ff2d12 534px,#ff1500 616px,#ff0c00 662px)"></i><i style="left:32px;top:394px;width:665px;height:2px;background:linear-gradient(90deg,#00ffd6 0px,#00ffc5 223px,#39ffc2 252px,#77ffbe 280px,#b8ffbb 306px,#ffffb6 331px,#ffe4a1 341px,#ffca8e 352px,#ff9e6c 377px,#ff794f 407px,#ff5b37 442px,#ff3d20 492px,#ff250e 553px,#ff1300 620px,#ff0a00 665px)"></i><i style="left:33px;top:396px;width:666px;height:2px;background:linear-gradient(90deg,#00ffd9 0px,#00ffc9 221px,#35ffc6 248px,#73ffc3 276px,#b1ffbf 301px,#fffdba 329px,#ffe2a4 339px,#ffc990 350px,#ff9d6e 375px,#ff7851 405px,#ff5a39 440px,#ff3c22 490px,#ff240f 551px,#ff1200 622px,#ff0900 666px)"></i><i style="left:33px;top:398px;width:669px;height:2px;background:linear-gradient(90deg,#00ffdb 0px,#00ffcd 220px,#35ffca 247px,#76ffc7 276px,#b8ffc3 302px,#ffffbf 327px,#ffe3a9 337px,#ffc995 348px,#ff9d71 373px,#ff7853 403px,#ff593a 439px,#ff3b23 489px,#ff230f 551px,#ff1000 625px,#ff0800 669px)"></i><i style="left:34px;top:400px;width:671px;height:2px;background:linear-gradient(90deg,#00ffde 0px,#00ffd0 219px,#39ffce 247px,#74ffcb 273px,#b1ffc8 297px,#feffc4 324px,#fffdc3 325px,#ffe1ac 335px,#ffc897 346px,#ff9c73 371px,#f75 401px,#ff573b 438px,#ff3a23 489px,#ff2210 551px,#ff0f00 627px,#ff0700 671px)"></i><i style="left:34px;top:402px;width:673px;height:2px;background:linear-gradient(90deg,#00ffe1 0px,#00ffd4 218px,#39ffd2 246px,#77ffcf 273px,#b4ffcc 297px,#fffec8 323px,#ffe2b1 333px,#ffc89c 344px,#ffb188 356px,#ff9a75 370px,#ff7557 400px,#ff563d 437px,#ff3924 488px,#ff2111 550px,#ff0d00 631px,#ff0600 673px)"></i><i style="left:35px;top:404px;width:675px;height:2px;background:linear-gradient(90deg,#00ffe3 0px,#00ffd8 216px,#37ffd6 243px,#77ffd3 271px,#b8ffd1 296px,#ffffce 320px,#ffe0b4 331px,#ffc79e 342px,#ffaf8b 354px,#ff9a79 367px,#ff7458 398px,#ff553e 435px,#ff3825 486px,#ff2011 549px,#ff0c00 633px,#ff0400 675px)"></i><i style="left:35px;top:406px;width:678px;height:2px;background:linear-gradient(90deg,#00ffe6 0px,#01ffdc 216px,#39ffda 243px,#75ffd8 269px,#b4ffd6 293px,#fffdd2 319px,#ffe1b9 329px,#ffc7a3 340px,#ffaf8f 352px,#ff997b 366px,#ff735a 397px,#ff543f 434px,#ff3726 485px,#ff1f12 548px,#ff0a00 636px,#ff0300 678px)"></i><i style="left:36px;top:408px;width:679px;height:2px;background:linear-gradient(90deg,#00ffe9 0px,#00ffe0 214px,#3bffde 242px,#78ffdc 268px,#b8ffda 292px,#ffffd8 316px,#ffe2bf 326px,#ffc8a7 337px,#ffb093 349px,#ff997e 363px,#ff735d 394px,#ff5341 432px,#ff3628 483px,#ff1e13 547px,#ff0900 639px,#ff0200 679px)"></i><i style="left:36px;top:410px;width:682px;height:2px;background:linear-gradient(90deg,#00ffec 0px,#00ffe4 213px,#36ffe3 239px,#73ffe1 265px,#b0ffdf 288px,#feffdd 314px,#fffddb 315px,#ffe0c2 325px,#ffc6aa 336px,#ffae95 348px,#ff9781 362px,#ff705e 394px,#ff5142 432px,#ff3528 483px,#ff1d13 547px,#ff0800 642px,#ff0100 682px)"></i><i style="left:37px;top:412px;width:684px;height:2px;background:linear-gradient(90deg,#0fe 0px,#00ffe8 211px,#34ffe7 236px,#74ffe6 263px,#b4ffe4 287px,#fffee2 312px,#ffe1c7 322px,#ffc4ad 334px,#ffad97 346px,#ff9683 360px,#ff6f60 392px,#ff5043 430px,#ff3329 482px,#ff1c14 546px,#ff0600 644px,#f00 684px)"></i><i style="left:37px;top:414px;width:686px;height:2px;background:linear-gradient(90deg,#00fff1 0px,#01ffec 211px,#38ffeb 237px,#74ffea 262px,#adffe9 283px,#ffffe8 310px,#fffce5 311px,#ffdfca 321px,#ffc2b0 333px,#ffab9a 345px,#ff9485 359px,#ff6e61 391px,#ff4e44 430px,#ff322a 482px,#ff1b15 546px,#ff0500 647px,#f00 686px)"></i><i style="left:38px;top:416px;width:688px;height:2px;background:linear-gradient(90deg,#00fff4 0px,#00fff1 209px,#38fff0 235px,#75ffef 260px,#b3ffee 283px,#fffeec 308px,#ffe0d0 318px,#ffc3b5 330px,#ffab9e 342px,#ff9489 356px,#ff6d64 388px,#ff4d45 428px,#ff312b 480px,#ff1a15 545px,#ff0300 650px,#f00 688px)"></i><i style="left:38px;top:418px;width:691px;height:2px;background:linear-gradient(90deg,#00fff7 0px,#00fff5 208px,#36fff4 233px,#75fff4 259px,#b7fff3 283px,#fffff3 306px,#ffe1d6 316px,#ffc3ba 328px,#ffaba2 340px,#ff948c 354px,#ff7f78 370px,#ff6c66 387px,#ff4c47 427px,#ff302c 480px,#ff1916 545px,#ff0200 653px,#f00 691px)"></i><i style="left:39px;top:420px;width:692px;height:2px;background:linear-gradient(90deg,#00fffa 0px,#00fff9 206px,#31fff9 229px,#71fff9 255px,#adfff9 277px,#fefff8 303px,#fffdf6 304px,#ffdfd9 314px,#ffc2bc 326px,#ffa8a3 339px,#ff918d 353px,#ff6a67 386px,#ff4a48 426px,#ff2e2c 479px,#ff1817 544px,#ff0100 654px,#f00 692px)"></i><i style="left:39px;top:422px;width:695px;height:2px;background:linear-gradient(90deg,#00fffd 0px,#01fffe 206px,#3afffe 232px,#76fffe 256px,#b7fffe 279px,#fffefd 302px,#ffe0df 312px,#ffc2c2 324px,#ffa8a8 337px,#ff9191 351px,#ff7c7c 367px,#ff6a69 384px,#ff4949 425px,#ff2d2d 478px,#ff1717 545px,#f00 657px,#f00 695px)"></i><i style="left:40px;top:424px;width:696px;height:2px;background:linear-gradient(90deg,#00fdff 0px,#00fcff 204px,#39fbff 230px,#75fbff 254px,#b5fbff 277px,#fff9fe 301px,#ffdbe0 311px,#ffbec2 323px,#ffa5a8 336px,#ff8e92 350px,#ff797d 366px,#ff6669 384px,#ff4749 425px,#ff2b2d 480px,#ff1517 548px,#ff0002 651px,#f00 696px)"></i><i style="left:40px;top:426px;width:699px;height:2px;background:linear-gradient(90deg,#00faff 0px,#00f7ff 203px,#36f7ff 228px,#76f6ff 254px,#b5f5ff 277px,#fff4fe 301px,#ffd7e0 311px,#ffbac3 323px,#ffa1a9 336px,#ff8b93 350px,#ff777d 366px,#ff646a 384px,#ff454a 425px,#ff292d 481px,#ff1316 552px,#ff0003 646px,#f00 699px)"></i><i style="left:41px;top:428px;width:701px;height:2px;background:linear-gradient(90deg,#00f7ff 0px,#00f3ff 201px,#32f2ff 225px,#74f1ff 252px,#b5f0ff 276px,#ffefff 300px,#ffd2e1 310px,#ffb6c4 322px,#ff9eaa 335px,#ff8792 350px,#ff737d 366px,#ff616a 384px,#ff434a 425px,#ff272d 483px,#ff1015 556px,#ff0004 640px,#f00 667px,#f00 701px)"></i><i style="left:41px;top:430px;width:703px;height:2px;background:linear-gradient(90deg,#00f4ff 0px,#0ef 201px,#3aedff 228px,#77ecff 253px,#b8ebff 277px,#ffe9ff 300px,#ffcbdf 311px,#ffb3c4 322px,#ff9bab 335px,#ff8493 350px,#ff717e 366px,#ff5f6b 384px,#ff404a 426px,#ff252d 485px,#ff0f15 560px,#ff0005 636px,#f00 670px,#f00 703px)"></i><i style="left:42px;top:432px;width:705px;height:2px;background:linear-gradient(90deg,#00f1ff 0px,#00eaff 199px,#37e9ff 225px,#73e7ff 250px,#ade6ff 272px,#ffe4ff 299px,#ffe1fc 300px,#ffc5dd 311px,#ffabc1 323px,#ff94a8 336px,#ff7f91 351px,#ff5b6a 385px,#ff3d4a 427px,#ff222c 488px,#ff0c14 566px,#ff0007 630px,#f00 673px,#f00 705px)"></i><i style="left:42px;top:434px;width:708px;height:2px;background:linear-gradient(90deg,#0ef 0px,#00e6ff 198px,#34e5ff 223px,#73e3ff 250px,#aee1ff 272px,#fedfff 299px,#ffddfd 300px,#ffc0dd 311px,#ffa7c1 323px,#ff91a9 336px,#ff7c91 351px,#ff697c 368px,#ff586a 386px,#ff3b4a 428px,#ff202b 491px,#ff0a13 571px,#ff0008 625px,#f00 676px,#f00 708px)"></i><i style="left:43px;top:436px;width:709px;height:2px;background:linear-gradient(90deg,#00ebff 0px,#01e2ff 197px,#39e0ff 224px,#74deff 249px,#b1dcff 272px,#ffd8fd 299px,#ffbcde 310px,#ffa4c2 322px,#ff8ea9 335px,#ff7992 350px,#ff667d 367px,#ff566a 385px,#ff3a4b 427px,#ff1e2b 491px,#ff0813 574px,#ff0009 620px,#f00 678px,#f00 709px)"></i><i style="left:43px;top:438px;width:712px;height:2px;background:linear-gradient(90deg,#00e8ff 0px,#00deff 196px,#38dcff 223px,#75daff 249px,#b4d7ff 273px,#ffd3fd 299px,#ffb8de 310px,#ffa0c3 322px,#ff89a9 336px,#ff7592 351px,#ff637c 368px,#ff536a 386px,#ff374b 428px,#ff1c2b 494px,#ff0612 580px,#ff000b 615px,#f00 681px,#f00 712px)"></i><i style="left:44px;top:440px;width:714px;height:2px;background:linear-gradient(90deg,#00e5ff 0px,#00daff 194px,#37d8ff 221px,#76d5ff 248px,#b4d3ff 272px,#ffcefe 298px,#ffb4df 309px,#ff9cc3 321px,#ff86a9 335px,#ff7392 350px,#ff516b 385px,#ff354b 428px,#ff273a 460px,#ff192a 497px,#ff0411 586px,#ff000c 609px,#f00 684px,#f00 714px)"></i><i style="left:45px;top:442px;width:715px;height:2px;background:linear-gradient(90deg,#00e2ff 0px,#00d6ff 192px,#34d4ff 218px,#74d1ff 246px,#b4ceff 271px,#ffcafe 297px,#ffb0e0 308px,#ff99c4 320px,#ff83aa 334px,#ff7093 349px,#ff4f6c 384px,#ff334b 428px,#ff2439 461px,#ff172a 499px,#ff0210 591px,#f00 686px,#f00 715px)"></i><i style="left:45px;top:444px;width:718px;height:2px;background:linear-gradient(90deg,#00dfff 0px,#01d2ff 192px,#39cfff 220px,#7cf 247px,#b7c9ff 272px,#ffc5ff 297px,#fface0 308px,#ff94c3 321px,#ff7fa9 335px,#ff6c93 350px,#ff5b7e 367px,#ff4b6b 386px,#ff314b 429px,#ff2239 463px,#ff1529 502px,#ff0010 597px,#f00 689px,#f00 718px)"></i><i style="left:46px;top:446px;width:720px;height:2px;background:linear-gradient(90deg,#00dcff 0px,#00ceff 190px,#3acbff 219px,#78c8ff 246px,#bac4ff 272px,#ffc1ff 296px,#ffa8e1 307px,#ff91c3 320px,#ff7caa 334px,#ff6a93 349px,#ff597e 366px,#ff496b 385px,#ff2f4b 429px,#ff213a 462px,#ff152a 500px,#f01 592px,#f00 692px,#f00 720px)"></i><i style="left:46px;top:448px;width:722px;height:2px;background:linear-gradient(90deg,#00daff 0px,#00cbff 189px,#35c8ff 216px,#74c4ff 244px,#adc1ff 267px,#ffbcff 296px,#ffbafc 297px,#ffa2df 308px,#ff8cc2 321px,#ff78a9 335px,#ff6693 350px,#ff476b 386px,#ff2d4b 430px,#ff203a 462px,#ff142b 499px,#ff0013 587px,#ff0001 690px,#f00 722px)"></i><i style="left:47px;top:450px;width:724px;height:2px;background:linear-gradient(90deg,#00d7ff 0px,#00c7ff 187px,#32c4ff 213px,#72c0ff 242px,#adbcff 266px,#feb8ff 295px,#ffb6fd 296px,#ff9fdf 307px,#ff88c3 320px,#ff75a9 334px,#ff6292 350px,#ff446b 386px,#ff2b4b 430px,#ff132c 497px,#ff0014 582px,#ff0002 685px,#f00 724px)"></i><i style="left:47px;top:452px;width:726px;height:2px;background:linear-gradient(90deg,#00d4ff 0px,#00c3ff 187px,#39c0ff 216px,#75bcff 243px,#b0b8ff 267px,#ffb1fd 296px,#ff9be0 307px,#ff85c3 320px,#ff72aa 334px,#ff6093 350px,#ff426c 386px,#ff294b 431px,#ff122e 495px,#ff0016 577px,#ff0003 678px,#f00 726px)"></i><i style="left:48px;top:454px;width:728px;height:2px;background:linear-gradient(90deg,#00d1ff 0px,#00c0ff 185px,#38bcff 214px,#76b8ff 242px,#b3b4ff 267px,#ffadfe 295px,#ff97e0 306px,#ff82c4 319px,#ff6fab 333px,#ff5e94 349px,#ff4d7e 367px,#ff406c 386px,#ff274c 431px,#ff122f 493px,#ff0017 571px,#ff0004 672px,#f00 728px)"></i><i style="left:49px;top:456px;width:730px;height:2px;background:linear-gradient(90deg,#00ceff 0px,#00bdff 183px,#35b9ff 211px,#74b4ff 240px,#b3afff 266px,#ffa9fe 294px,#ff92de 306px,#ff7dc3 319px,#ff6baa 333px,#ff5a93 349px,#ff3d6c 386px,#ff254c 431px,#ff1130 491px,#ff0019 566px,#ff0005 668px,#f00 705px,#f00 730px)"></i><i style="left:49px;top:458px;width:732px;height:2px;background:linear-gradient(90deg,#0cf 0px,#01b9ff 183px,#3ab5ff 213px,#77b0ff 241px,#b6abff 267px,#ffa5fe 294px,#ff8edf 306px,#ff7ac3 319px,#ff68ab 333px,#ff5894 349px,#ff3b6c 386px,#ff244c 431px,#ff1031 489px,#ff001b 561px,#ff0007 662px,#f00 709px,#f00 732px)"></i><i style="left:50px;top:460px;width:734px;height:2px;background:linear-gradient(90deg,#00c9ff 0px,#00b6ff 181px,#39b1ff 211px,#78acff 240px,#b9a7ff 267px,#ffa1ff 293px,#ff8bdf 305px,#ff77c4 318px,#ff66ab 332px,#ff5594 348px,#ff396d 385px,#ff224c 431px,#ff0f32 487px,#ff001d 555px,#ff0008 658px,#f00 711px,#f00 734px)"></i><i style="left:50px;top:462px;width:737px;height:2px;background:linear-gradient(90deg,#00c6ff 0px,#00b2ff 180px,#38aeff 210px,#78a8ff 240px,#b9a3ff 267px,#ff9dff 293px,#ff87e0 305px,#ff74c4 318px,#ff62aa 333px,#ff5294 349px,#ff376d 386px,#ff204d 432px,#ff0f33 485px,#ff001e 550px,#ff0009 654px,#f00 714px,#f00 737px)"></i><i style="left:51px;top:464px;width:738px;height:2px;background:linear-gradient(90deg,#00c4ff 0px,#00afff 178px,#35aaff 207px,#77a5ff 238px,#b99fff 266px,#f9f 292px,#ff84e0 304px,#ff71c5 317px,#ff5fab 332px,#ff5094 348px,#ff4280 366px,#ff356d 386px,#ff1f4d 432px,#ff0e34 483px,#ff0020 545px,#ff000a 649px,#f00 717px,#f00 738px)"></i><i style="left:51px;top:466px;width:741px;height:2px;background:linear-gradient(90deg,#00c1ff 0px,#01acff 178px,#38a7ff 208px,#75a1ff 237px,#af9cff 262px,#fe95ff 292px,#ff93fd 293px,#ff7fdf 305px,#ff6cc2 319px,#ff5ba9 334px,#ff4c93 350px,#ff326c 388px,#ff1c4c 434px,#ff0d35 482px,#f02 540px,#ff000b 646px,#f00 720px,#f00 741px)"></i><i style="left:52px;top:468px;width:743px;height:2px;background:linear-gradient(90deg,#00beff 0px,#00a9ff 176px,#39a3ff 207px,#769eff 236px,#b298ff 262px,#ff90fd 292px,#ff7cdf 304px,#ff69c2 318px,#ff58a9 333px,#ff4a93 349px,#ff306d 387px,#ff1b4c 434px,#ff0c36 480px,#ff0024 534px,#ff000c 642px,#f00 722px,#f00 743px)"></i><i style="left:53px;top:470px;width:744px;height:2px;background:linear-gradient(90deg,#00bcff 0px,#00a6ff 174px,#37a0ff 204px,#749aff 234px,#b294ff 261px,#ff8cfe 291px,#ff79e0 303px,#ff66c3 317px,#ff56aa 332px,#ff4794 348px,#ff2e6d 386px,#ff194d 433px,#ff0c38 477px,#ff0026 528px,#ff000d 637px,#f00 724px,#f00 744px)"></i><i style="left:53px;top:472px;width:745px;height:2px;background:linear-gradient(90deg,#00b9ff 0px,#00a3ff 173px,#369dff 203px,#7597ff 234px,#b590ff 262px,#ff88fe 291px,#ff75e0 303px,#ff63c4 317px,#ff53ab 332px,#ff4595 348px,#ff2c6d 387px,#ff184d 434px,#ff0b39 476px,#ff0028 524px,#ff000e 632px,#ff0001 720px,#f00 745px)"></i><i style="left:54px;top:474px;width:744px;height:2px;background:linear-gradient(90deg,#00b6ff 0px,#009fff 172px,#3a99ff 204px,#7793ff 234px,#b88cff 262px,#ff85fe 290px,#ff72e1 302px,#ff60c4 316px,#ff51ab 331px,#ff4294 348px,#ff2a6e 386px,#ff164e 433px,#ff0a3a 473px,#ff002a 518px,#ff0010 625px,#f00 744px)"></i><i style="left:54px;top:476px;width:741px;height:2px;background:linear-gradient(90deg,#00b4ff 0px,#009cff 171px,#3996ff 203px,#7890ff 234px,#b889ff 262px,#ff81ff 290px,#ff6fe1 302px,#ff5ec5 316px,#ff4eac 331px,#ff4196 347px,#ff296f 385px,#ff154f 432px,#ff0a3c 470px,#ff002c 513px,#ff0012 617px,#f00 741px)"></i><i style="left:55px;top:478px;width:734px;height:2px;background:linear-gradient(90deg,#00b1ff 0px,#09f 169px,#3793ff 200px,#778cff 232px,#b885ff 261px,#ff7eff 289px,#ff6ce2 301px,#ff5bc5 315px,#ff4cad 330px,#ff3f97 346px,#ff2870 384px,#ff1551 429px,#ff0a3f 465px,#ff002e 507px,#ff0021 552px,#ff000f 634px,#f00 734px)"></i><i style="left:56px;top:480px;width:727px;height:2px;background:linear-gradient(90deg,#00afff 0px,#0196ff 168px,#3b90ff 201px,#7989ff 232px,#ba82ff 261px,#ff7aff 288px,#ff67e0 301px,#ff58c6 314px,#ff4aaf 328px,#ff3d99 344px,#ff2671 382px,#ff1452 427px,#ff0940 462px,#ff0031 501px,#f02 549px,#ff0010 630px,#ff0001 727px)"></i><i style="left:56px;top:482px;width:722px;height:2px;background:linear-gradient(90deg,#00acff 0px,#0094ff 167px,#398dff 199px,#7686ff 230px,#b17fff 257px,#ff75fd 289px,#ff64e0 301px,#ff55c6 314px,#ff47ae 329px,#ff3b98 345px,#ff2572 382px,#ff1253 427px,#f03 496px,#ff0023 547px,#f01 626px,#ff0002 722px)"></i><i style="left:57px;top:484px;width:715px;height:2px;background:linear-gradient(90deg,#0af 0px,#0091ff 165px,#388aff 197px,#7483ff 228px,#b17cff 256px,#ff72fd 288px,#ff61e1 300px,#ff53c7 313px,#ff45ae 328px,#ff3999 344px,#ff2373 381px,#ff1154 425px,#ff0035 491px,#ff0024 543px,#ff0012 621px,#ff0004 715px)"></i><i style="left:58px;top:486px;width:708px;height:2px;background:linear-gradient(90deg,#00a7ff 0px,#008eff 163px,#3787ff 195px,#7580ff 227px,#b278ff 255px,#ff6efe 287px,#ff5ee1 299px,#ff50c7 312px,#ff43af 327px,#ff3699 343px,#ff2274 379px,#ff1055 423px,#ff0037 485px,#ff0026 539px,#ff0014 616px,#ff0005 708px)"></i><i style="left:58px;top:488px;width:703px;height:2px;background:linear-gradient(90deg,#00a5ff 0px,#018bff 163px,#3984ff 196px,#777cff 228px,#b475ff 256px,#ff6bfe 287px,#ff5ce2 299px,#ff4ec8 312px,#ff41b1 326px,#ff359b 342px,#ff2176 378px,#ff0f56 422px,#ff003a 480px,#ff0027 537px,#ff0015 612px,#ff0006 703px)"></i><i style="left:59px;top:490px;width:696px;height:2px;background:linear-gradient(90deg,#00a2ff 0px,#0089ff 161px,#3981ff 194px,#767aff 226px,#b771ff 256px,#ff68fe 286px,#ff59e2 298px,#ff4bc9 311px,#ff3fb2 325px,#ff339c 341px,#ff1f76 377px,#ff0e57 420px,#ff003d 474px,#ff0028 533px,#ff0016 607px,#ff0007 696px)"></i><i style="left:59px;top:492px;width:690px;height:2px;background:linear-gradient(90deg,#00a0ff 0px,#0086ff 160px,#387fff 193px,#7676ff 226px,#b76eff 256px,#ff65ff 286px,#ff56e3 298px,#ff48c9 311px,#ff329e 340px,#ff1e79 375px,#ff0e59 418px,#ff003f 470px,#ff002a 530px,#ff0017 603px,#ff0008 690px)"></i><i style="left:60px;top:494px;width:684px;height:2px;background:linear-gradient(90deg,#009eff 0px,#0083ff 158px,#377cff 191px,#7773ff 225px,#b96bff 256px,#ff61ff 285px,#ff53e3 297px,#ff46ca 310px,#ff309e 339px,#ff1d7a 374px,#ff0d5b 416px,#ff0042 464px,#ff002b 526px,#ff0019 598px,#ff000a 684px)"></i><i style="left:61px;top:496px;width:677px;height:2px;background:linear-gradient(90deg,#009bff 0px,#0181ff 157px,#3979ff 191px,#7870ff 224px,#b968ff 255px,#ff5eff 284px,#ff50e3 296px,#ff43ca 309px,#ff2e9f 338px,#ff1b7a 373px,#ff0c5c 414px,#f04 458px,#ff002c 523px,#ff001a 593px,#ff000b 677px)"></i><i style="left:61px;top:498px;width:671px;height:2px;background:linear-gradient(90deg,#09f 0px,#007eff 156px,#3976ff 190px,#746eff 222px,#b166ff 251px,#ff5afd 285px,#ff4de4 296px,#ff41cb 309px,#ff2c9f 338px,#ff197b 373px,#ff0a5c 414px,#ff0047 453px,#ff002d 521px,#ff001b 590px,#ff000c 671px)"></i><i style="left:62px;top:500px;width:665px;height:2px;background:linear-gradient(90deg,#0096ff 0px,#007cff 154px,#3874ff 188px,#756bff 221px,#b163ff 250px,#ff57fd 284px,#ff4be4 295px,#ff3fcb 308px,#ff2aa0 337px,#ff187c 371px,#ff095e 412px,#ff004a 448px,#ff002f 517px,#ff001d 585px,#ff000d 665px)"></i><i style="left:63px;top:502px;width:658px;height:2px;background:linear-gradient(90deg,#0094ff 0px,#0179ff 153px,#3971ff 187px,#7568ff 220px,#b35fff 250px,#ff54fe 283px,#ff48e5 294px,#ff3ccc 307px,#ff28a2 335px,#ff177e 369px,#ff0960 409px,#ff004d 442px,#ff0030 513px,#ff001e 579px,#ff000f 658px)"></i><i style="left:63px;top:504px;width:652px;height:2px;background:linear-gradient(90deg,#0092ff 0px,#0076ff 152px,#396eff 187px,#7665ff 220px,#b65cff 251px,#ff51fe 283px,#ff45e5 294px,#ff3acc 307px,#ff26a3 335px,#ff167f 368px,#ff0861 408px,#ff0050 437px,#ff0032 510px,#ff0020 575px,#ff0010 652px)"></i><i style="left:64px;top:506px;width:646px;height:2px;background:linear-gradient(90deg,#008fff 0px,#0074ff 150px,#396cff 185px,#7662ff 219px,#b659ff 250px,#ff4efe 282px,#ff43e5 293px,#ff37cd 306px,#ff24a3 334px,#ff1480 367px,#ff0762 406px,#ff0053 431px,#f03 506px,#ff0021 570px,#ff0012 646px)"></i><i style="left:65px;top:508px;width:639px;height:2px;background:linear-gradient(90deg,#008dff 0px,#0072ff 148px,#3869ff 183px,#7760ff 218px,#b856ff 250px,#ff4bff 281px,#ff36cf 304px,#ff23a5 332px,#ff1381 365px,#ff0664 403px,#ff0056 426px,#f04 462px,#ff0035 502px,#ff0023 565px,#ff0013 639px)"></i><i style="left:66px;top:510px;width:632px;height:2px;background:linear-gradient(90deg,#008bff 0px,#016fff 147px,#3a66ff 183px,#785dff 217px,#b853ff 249px,#ff48ff 280px,#ff33cf 303px,#ff21a6 331px,#ff1283 363px,#ff0565 401px,#ff0059 420px,#ff0047 457px,#ff0036 498px,#ff0024 560px,#ff0015 632px)"></i><i style="left:66px;top:512px;width:627px;height:2px;background:linear-gradient(90deg,#0089ff 0px,#006dff 146px,#3b64ff 183px,#785aff 217px,#b950ff 249px,#ff45ff 280px,#ff30ce 304px,#ff1fa6 331px,#ff1084 363px,#ff0466 400px,#ff005d 415px,#ff004d 444px,#ff0038 496px,#ff0026 556px,#ff0016 627px)"></i><i style="left:67px;top:514px;width:620px;height:2px;background:linear-gradient(90deg,#0086ff 0px,#006bff 144px,#3962ff 180px,#7558ff 214px,#b04fff 244px,#ff41fd 280px,#ff2ecf 303px,#ff1da7 330px,#ff0f85 361px,#ff0368 398px,#ff0061 409px,#ff004f 441px,#ff0039 492px,#ff0027 551px,#ff0018 620px)"></i><i style="left:68px;top:516px;width:613px;height:2px;background:linear-gradient(90deg,#0084ff 0px,#0068ff 142px,#3660ff 177px,#7456ff 212px,#b04cff 243px,#ff3ffd 279px,#ff2ccf 302px,#ff1ba7 329px,#ff0e86 360px,#ff0269 396px,#ff0050 438px,#ff003b 488px,#ff0029 546px,#ff0019 613px)"></i><i style="left:68px;top:518px;width:608px;height:2px;background:linear-gradient(90deg,#0082ff 0px,#0166ff 142px,#3a5dff 179px,#7653ff 213px,#b349ff 244px,#ff3cfe 279px,#ff29d0 302px,#ff1aa9 328px,#ff0d87 359px,#ff016a 395px,#ff0051 437px,#ff003d 485px,#ff002a 542px,#ff001b 608px)"></i><i style="left:69px;top:520px;width:601px;height:2px;background:linear-gradient(90deg,#0080ff 0px,#0064ff 140px,#395aff 177px,#7650ff 212px,#b546ff 244px,#ff39fe 278px,#ff28d2 300px,#ff19ab 326px,#ff0b89 357px,#ff006c 392px,#ff0054 433px,#ff003e 481px,#ff002c 536px,#ff001c 601px)"></i><i style="left:70px;top:522px;width:594px;height:2px;background:linear-gradient(90deg,#007dff 0px,#0062ff 138px,#3958ff 175px,#774eff 211px,#b743ff 244px,#ff37fe 277px,#ff26d2 299px,#ff17ab 325px,#ff0a8a 355px,#ff006e 390px,#f05 430px,#ff0040 477px,#ff002e 531px,#ff001e 594px)"></i><i style="left:71px;top:524px;width:588px;height:2px;background:linear-gradient(90deg,#007bff 0px,#015fff 137px,#3b55ff 175px,#774bff 210px,#b740ff 243px,#ff34ff 276px,#ff23d3 298px,#ff15ad 323px,#ff098c 353px,#ff0070 387px,#ff0057 427px,#ff0042 473px,#ff002f 526px,#ff0020 588px)"></i><i style="left:71px;top:526px;width:582px;height:2px;background:linear-gradient(90deg,#0079ff 0px,#005dff 136px,#3a53ff 174px,#7849ff 210px,#ba3dff 244px,#ff31ff 276px,#ff21d3 298px,#ff14ae 323px,#ff088d 352px,#ff0078 376px,#ff0071 386px,#ff0058 425px,#ff0043 470px,#ff0031 522px,#ff0021 582px)"></i><i style="left:72px;top:528px;width:575px;height:2px;background:linear-gradient(90deg,#07f 0px,#005bff 134px,#3b51ff 173px,#7846ff 209px,#ba3bff 243px,#ff2fff 275px,#ff1fd4 297px,#ff12b0 321px,#ff078f 350px,#ff007d 370px,#ff0073 383px,#ff005b 421px,#ff0046 465px,#f03 516px,#ff0023 575px)"></i><i style="left:73px;top:530px;width:569px;height:2px;background:linear-gradient(90deg,#0075ff 0px,#0059ff 132px,#394fff 170px,#74f 207px,#b839ff 241px,#ff2cff 274px,#ff1dd4 296px,#ff10b0 320px,#ff0898 341px,#ff0082 364px,#ff0074 381px,#ff005c 419px,#ff0047 462px,#ff0035 512px,#ff0025 569px)"></i><i style="left:74px;top:532px;width:562px;height:2px;background:linear-gradient(90deg,#0073ff 0px,#0157ff 131px,#394dff 169px,#7642ff 205px,#b237ff 237px,#ff29fd 274px,#ff1bd4 295px,#ff0fb1 319px,#ff079a 338px,#ff0086 359px,#ff0076 379px,#ff005d 416px,#ff0049 458px,#ff0037 506px,#ff0027 562px)"></i><i style="left:74px;top:534px;width:556px;height:2px;background:linear-gradient(90deg,#0071ff 0px,#05f 130px,#3a4aff 169px,#763fff 205px,#b434ff 238px,#ff26fe 274px,#ff19d5 295px,#ff0db1 319px,#ff008b 354px,#f07 378px,#ff005f 414px,#ff004b 455px,#ff0038 502px,#ff0029 556px)"></i><i style="left:75px;top:536px;width:550px;height:2px;background:linear-gradient(90deg,#006eff 0px,#0053ff 128px,#3a48ff 167px,#773dff 204px,#b432ff 237px,#ff24fe 273px,#ff17d5 294px,#ff0bb3 317px,#ff0090 348px,#ff0079 375px,#ff0061 410px,#ff004c 451px,#ff003a 497px,#ff002a 550px)"></i><i style="left:76px;top:538px;width:543px;height:2px;background:linear-gradient(90deg,#006cff 0px,#0051ff 126px,#3747ff 164px,#763bff 202px,#b72fff 237px,#ff21fe 272px,#ff15d6 293px,#ff0ab3 316px,#ff0095 343px,#ff007a 373px,#ff0063 408px,#ff004e 447px,#ff003c 492px,#ff002d 543px)"></i><i style="left:77px;top:540px;width:536px;height:2px;background:linear-gradient(90deg,#006aff 0px,#014fff 125px,#3b44ff 165px,#7838ff 202px,#b92cff 237px,#ff1fff 271px,#ff13d8 291px,#ff08b5 314px,#ff009a 337px,#ff007c 370px,#ff0065 404px,#ff0051 442px,#ff003f 486px,#ff002f 536px)"></i><i style="left:78px;top:542px;width:530px;height:2px;background:linear-gradient(90deg,#0068ff 0px,#004dff 123px,#3a42ff 163px,#7836ff 201px,#b92aff 236px,#ff1dff 270px,#ff11d8 290px,#ff07b6 313px,#ff00a0 331px,#ff007e 368px,#ff0067 401px,#ff0052 439px,#ff0040 482px,#ff0031 530px)"></i><i style="left:78px;top:544px;width:524px;height:2px;background:linear-gradient(90deg,#06f 0px,#004bff 122px,#3a40ff 162px,#7734ff 200px,#b928ff 236px,#ff1aff 270px,#ff0fd9 290px,#ff05b8 312px,#ff00a5 327px,#ff0080 366px,#ff0069 398px,#f05 435px,#ff0042 477px,#f03 524px)"></i><i style="left:79px;top:546px;width:517px;height:2px;background:linear-gradient(90deg,#0064ff 0px,#0149ff 121px,#3a3eff 161px,#7832ff 199px,#b925ff 235px,#ff18ff 269px,#ff0dd9 289px,#ff03b8 311px,#ff00ab 321px,#ff009c 335px,#ff0082 363px,#ff006b 395px,#ff0057 431px,#ff0045 471px,#ff0035 517px)"></i><i style="left:80px;top:548px;width:511px;height:2px;background:linear-gradient(90deg,#0062ff 0px,#0047ff 119px,#3a3cff 159px,#7630ff 197px,#b324ff 231px,#ff15fe 269px,#ff0bd9 288px,#ff02b9 310px,#ff009c 334px,#ff0083 362px,#ff006c 393px,#ff0058 428px,#ff0037 511px)"></i><i style="left:81px;top:550px;width:504px;height:2px;background:linear-gradient(90deg,#0060ff 0px,#0045ff 117px,#393aff 157px,#752eff 195px,#b422ff 230px,#ff13fe 268px,#ff09da 287px,#ff00ba 308px,#ff009e 332px,#ff0085 359px,#ff006f 389px,#ff005b 423px,#ff0039 504px)"></i><i style="left:82px;top:552px;width:497px;height:2px;background:linear-gradient(90deg,#005eff 0px,#04f 115px,#3838ff 155px,#762cff 194px,#b61fff 230px,#ff10fe 267px,#ff07dc 285px,#ff00bc 306px,#ff00a0 330px,#ff0087 356px,#ff0071 385px,#ff005d 418px,#ff003c 497px)"></i><i style="left:83px;top:554px;width:491px;height:2px;background:linear-gradient(90deg,#005cff 0px,#0142ff 114px,#3a36ff 155px,#782aff 194px,#b81dff 230px,#ff0efe 266px,#ff05dc 284px,#ff00bd 305px,#ff00a1 328px,#ff0089 353px,#ff0073 382px,#ff005f 414px,#ff003e 491px)"></i><i style="left:83px;top:556px;width:485px;height:2px;background:linear-gradient(90deg,#005aff 0px,#0040ff 113px,#3a34ff 154px,#7728ff 193px,#b81bff 230px,#ff0cff 266px,#ff03dd 284px,#ff00be 304px,#ff00a3 327px,#ff008b 352px,#ff0075 380px,#ff0062 411px,#ff0041 485px)"></i><i style="left:84px;top:558px;width:478px;height:2px;background:linear-gradient(90deg,#0058ff 0px,#003eff 111px,#3a32ff 153px,#7726ff 192px,#b818ff 229px,#ff0aff 265px,#ff00d6 287px,#ff00c0 302px,#ff00a5 324px,#ff008d 349px,#ff0078 376px,#ff0064 407px,#ff0043 478px)"></i><i style="left:85px;top:560px;width:472px;height:2px;background:linear-gradient(90deg,#0056ff 0px,#003cff 109px,#3831ff 150px,#7824ff 191px,#ba16ff 229px,#ff08ff 264px,#ff00df 281px,#ff00c1 301px,#ff00a7 322px,#ff008f 346px,#ff0079 373px,#ff0067 402px,#ff0046 472px)"></i><i style="left:86px;top:562px;width:465px;height:2px;background:linear-gradient(90deg,#0054ff 0px,#013aff 108px,#3a2eff 150px,#7822ff 190px,#ba14ff 228px,#ff05ff 263px,#ff00e8 275px,#ff00c1 300px,#ff00a7 321px,#ff0090 344px,#ff007b 370px,#ff0069 398px,#ff0048 465px)"></i><i style="left:87px;top:564px;width:458px;height:2px;background:linear-gradient(90deg,#0052ff 0px,#0039ff 106px,#3a2dff 148px,#7520ff 187px,#b313ff 223px,#ff03fe 263px,#ff00de 280px,#ff00c3 298px,#f0a 318px,#ff0093 341px,#ff007e 366px,#ff006b 394px,#ff004b 458px)"></i><i style="left:88px;top:566px;width:452px;height:2px;background:linear-gradient(90deg,#0050ff 0px,#0037ff 104px,#392bff 146px,#761eff 186px,#b311ff 222px,#ff01fe 262px,#ff00e0 278px,#ff00c5 296px,#ff00ac 316px,#ff0095 338px,#ff006e 389px,#ff004e 452px)"></i><i style="left:89px;top:568px;width:445px;height:2px;background:linear-gradient(90deg,#004eff 0px,#0135ff 103px,#3a29ff 145px,#761cff 185px,#b50fff 222px,#ff00fe 261px,#ff00e1 277px,#ff00c5 295px,#ff00ac 315px,#ff0097 336px,#ff0071 385px,#ff0051 445px)"></i><i style="left:90px;top:570px;width:438px;height:2px;background:linear-gradient(90deg,#004cff 0px,#0134ff 101px,#3a27ff 144px,#771aff 184px,#b70cff 222px,#f000ff 252px,#ff00fe 260px,#ff00e1 276px,#ff00c7 293px,#ff00af 312px,#f09 333px,#ff0073 381px,#ff0054 438px)"></i><i style="left:91px;top:572px;width:432px;height:2px;background:linear-gradient(90deg,#004aff 0px,#0032ff 99px,#3a26ff 142px,#7718ff 183px,#ad0dff 215px,#e600ff 246px,#f0f 259px,#ff00e3 274px,#ff00c9 291px,#ff00b1 310px,#ff009b 330px,#ff0076 376px,#ff0057 432px)"></i><i style="left:92px;top:574px;width:425px;height:2px;background:linear-gradient(90deg,#0048ff 0px,#0031ff 97px,#3924ff 140px,#7716ff 182px,#a90bff 212px,#dc00ff 240px,#f0f 258px,#ff00e3 273px,#ff00cb 289px,#ff00b3 307px,#ff009e 327px,#ff0079 372px,#ff005a 425px)"></i><i style="left:93px;top:576px;width:418px;height:2px;background:linear-gradient(90deg,#0046ff 0px,#012fff 96px,#3b22ff 140px,#7814ff 181px,#d400ff 235px,#f0f 257px,#ff00e4 272px,#ff00cb 288px,#ff00a0 324px,#ff007c 367px,#ff005e 418px)"></i><i style="left:94px;top:578px;width:412px;height:2px;background:linear-gradient(90deg,#04f 0px,#002dff 94px,#3a20ff 138px,#7812ff 180px,#cb00ff 229px,#f0f 256px,#ff00cd 286px,#ff00a3 321px,#ff007f 363px,#ff0061 412px)"></i><i style="left:94px;top:580px;width:406px;height:2px;background:linear-gradient(90deg,#0043ff 0px,#002cff 93px,#3a1fff 137px,#71f 179px,#c200ff 224px,#fe00ff 256px,#ff00cd 286px,#ff00a5 319px,#ff0082 359px,#ff0064 406px)"></i><i style="left:95px;top:582px;width:399px;height:2px;background:linear-gradient(90deg,#0041ff 0px,#012aff 92px,#3a1dff 136px,#780fff 178px,#ba00ff 218px,#fe00ff 255px,#ff00cf 284px,#ff00a8 316px,#ff0086 354px,#ff0068 399px)"></i><i style="left:96px;top:584px;width:393px;height:2px;background:linear-gradient(90deg,#003fff 0px,#0128ff 90px,#3b1bff 135px,#780dff 177px,#b300ff 213px,#fe00ff 254px,#ff00cf 283px,#ff00a9 314px,#f08 351px,#ff006c 393px)"></i><i style="left:97px;top:586px;width:386px;height:2px;background:linear-gradient(90deg,#003dff 0px,#0027ff 88px,#3a1aff 133px,#770cff 175px,#a0f 207px,#fe00ff 253px,#ff00d1 281px,#ff00ac 311px,#ff008b 346px,#ff0070 386px)"></i><i style="left:98px;top:588px;width:379px;height:2px;background:linear-gradient(90deg,#003bff 0px,#0026ff 86px,#3a18ff 131px,#770aff 174px,#a200ff 201px,#fe00ff 252px,#ff00d2 280px,#ff00af 308px,#ff008f 341px,#ff0074 379px)"></i><i style="left:99px;top:590px;width:373px;height:2px;background:linear-gradient(90deg,#0039ff 0px,#0124ff 85px,#3a16ff 130px,#7808ff 173px,#9c00ff 196px,#cb00ff 224px,#f0f 252px,#ff00d6 276px,#ff00b2 304px,#ff0093 336px,#f07 373px)"></i><i style="left:100px;top:592px;width:366px;height:2px;background:linear-gradient(90deg,#0037ff 0px,#0122ff 83px,#3b15ff 129px,#7806ff 172px,#9400ff 190px,#c800ff 221px,#f0f 251px,#ff00d8 274px,#ff00b5 301px,#ff0097 331px,#ff007c 366px)"></i><i style="left:101px;top:594px;width:359px;height:2px;background:linear-gradient(90deg,#0036ff 0px,#0021ff 81px,#3a13ff 127px,#7705ff 170px,#8d00ff 184px,#c500ff 218px,#f0f 250px,#ff00d9 273px,#ff00b8 298px,#ff009a 327px,#ff0080 359px)"></i><i style="left:102px;top:596px;width:353px;height:2px;background:linear-gradient(90deg,#0034ff 0px,#0020ff 79px,#3a12ff 125px,#7803ff 169px,#8500ff 178px,#b900ff 210px,#fe00ff 249px,#ff00da 271px,#f0b 295px,#ff009e 322px,#ff0085 353px)"></i><i style="left:103px;top:598px;width:346px;height:2px;background:linear-gradient(90deg,#0032ff 0px,#011eff 78px,#3a10ff 124px,#7802ff 168px,#b900ff 209px,#fe00ff 248px,#ff00db 270px,#ff00bd 292px,#ff00a2 317px,#ff008a 346px)"></i><i style="left:104px;top:600px;width:339px;height:2px;background:linear-gradient(90deg,#0030ff 0px,#001dff 76px,#3b0fff 123px,#7800ff 167px,#b900ff 208px,#fe00ff 247px,#f0d 268px,#ff00c0 289px,#ff00a6 313px,#ff008f 339px)"></i><i style="left:105px;top:602px;width:333px;height:2px;background:linear-gradient(90deg,#002eff 0px,#001bff 74px,#3a0dff 121px,#70f 165px,#b900ff 207px,#fe00ff 246px,#f0d 267px,#ff00c3 286px,#f0a 308px,#ff0093 333px)"></i><i style="left:106px;top:604px;width:326px;height:2px;background:linear-gradient(90deg,#002dff 0px,#011aff 73px,#3b0cff 120px,#6b00ff 155px,#7800ff 164px,#b900ff 206px,#fe00ff 245px,#ff00df 265px,#ff00c6 283px,#ff00ae 304px,#f09 326px)"></i><i style="left:107px;top:606px;width:319px;height:2px;background:linear-gradient(90deg,#002bff 0px,#0118ff 71px,#310cff 111px,#6400ff 149px,#7800ff 163px,#b900ff 205px,#f0f 245px,#ff00e4 261px,#ff00ca 279px,#ff009f 319px)"></i><i style="left:108px;top:608px;width:313px;height:2px;background:linear-gradient(90deg,#0029ff 0px,#0017ff 69px,#2e0cff 107px,#5e00ff 143px,#7900ff 162px,#b900ff 204px,#f0f 244px,#ff00e6 259px,#ff00cd 276px,#ff00a4 313px)"></i><i style="left:110px;top:610px;width:305px;height:2px;background:linear-gradient(90deg,#0027ff 0px,#0016ff 66px,#5700ff 136px,#7800ff 159px,#ba00ff 202px,#f0f 242px,#ff00d1 271px,#f0a 305px)"></i><i style="left:111px;top:612px;width:298px;height:2px;background:linear-gradient(90deg,#0025ff 0px,#0114ff 65px,#5200ff 131px,#7800ff 158px,#ba00ff 201px,#f0f 241px,#ff00d5 268px,#ff00b1 298px)"></i><i style="left:112px;top:614px;width:292px;height:2px;background:linear-gradient(90deg,#0024ff 0px,#0113ff 63px,#4c00ff 125px,#7800ff 157px,#ba00ff 200px,#fe00ff 240px,#ff00d8 265px,#ff00b6 292px)"></i><i style="left:113px;top:616px;width:285px;height:2px;background:linear-gradient(90deg,#02f 0px,#0012ff 61px,#4600ff 119px,#70f 155px,#b800ff 198px,#fe00ff 239px,#ff00db 262px,#ff00bd 285px)"></i><i style="left:114px;top:618px;width:278px;height:2px;background:linear-gradient(90deg,#0020ff 0px,#0010ff 59px,#4100ff 113px,#7800ff 154px,#b800ff 197px,#fe00ff 238px,#ff00de 259px,#ff00c5 278px)"></i><i style="left:115px;top:620px;width:272px;height:2px;background:linear-gradient(90deg,#001eff 0px,#010fff 58px,#3c00ff 108px,#7800ff 153px,#b900ff 196px,#fe00ff 237px,#ff00cb 272px)"></i><i style="left:116px;top:622px;width:265px;height:2px;background:linear-gradient(90deg,#001dff 0px,#000eff 56px,#3600ff 102px,#70f 151px,#b900ff 195px,#fd00ff 236px,#ff00d4 265px)"></i><i style="left:117px;top:624px;width:258px;height:2px;background:linear-gradient(90deg,#001bff 0px,#000dff 54px,#3100ff 96px,#7800ff 150px,#b900ff 194px,#f0f 236px,#ff00dc 258px)"></i><i style="left:119px;top:626px;width:251px;height:2px;background:linear-gradient(90deg,#0019ff 0px,#010bff 52px,#2c00ff 89px,#7800ff 148px,#b900ff 192px,#f0f 234px,#ff00e4 251px)"></i><i style="left:120px;top:628px;width:244px;height:2px;background:linear-gradient(90deg,#0017ff 0px,#010aff 50px,#2700ff 84px,#7800ff 147px,#b900ff 191px,#f0f 233px,#ff00ed 244px)"></i><i style="left:121px;top:630px;width:237px;height:2px;background:linear-gradient(90deg,#0016ff 0px,#0009ff 48px,#20f 78px,#6b00ff 136px,#b300ff 186px,#fe00ff 232px,#ff00f7 237px)"></i><i style="left:122px;top:632px;width:231px;height:2px;background:linear-gradient(90deg,#0014ff 0px,#0008ff 46px,#0706ff 52px,#1d00ff 72px,#4b00ff 110px,#7c00ff 147px,#b0f 190px,#fe00ff 231px)"></i><i style="left:123px;top:634px;width:224px;height:2px;background:linear-gradient(90deg,#0012ff 0px,#0006ff 44px,#0405ff 48px,#1800ff 66px,#4500ff 104px,#7500ff 141px,#b300ff 184px,#f400ff 224px)"></i><i style="left:125px;top:636px;width:216px;height:2px;background:linear-gradient(90deg,#0010ff 0px,#0005ff 41px,#0304ff 44px,#1400ff 60px,#4100ff 98px,#7000ff 135px,#ac00ff 177px,#e900ff 216px)"></i><i style="left:126px;top:638px;width:210px;height:2px;background:linear-gradient(90deg,#000fff 0px,#0104ff 41px,#1000ff 54px,#3d00ff 93px,#6b00ff 130px,#a500ff 171px,#e100ff 210px)"></i><i style="left:127px;top:640px;width:203px;height:2px;background:linear-gradient(90deg,#000dff 0px,#0003ff 38px,#0b00ff 48px,#3200ff 83px,#6700ff 125px,#9e00ff 165px,#d700ff 203px)"></i><i style="left:129px;top:642px;width:195px;height:2px;background:linear-gradient(90deg,#000bff 0px,#0101ff 36px,#3100ff 79px,#6200ff 119px,#9700ff 158px,#ce00ff 195px)"></i><i style="left:130px;top:644px;width:189px;height:2px;background:linear-gradient(90deg,#000aff 0px,#0100ff 34px,#2e00ff 75px,#5e00ff 115px,#9100ff 153px,#c600ff 189px)"></i><i style="left:132px;top:646px;width:181px;height:2px;background:linear-gradient(90deg,#0008ff 0px,#00f 31px,#2c00ff 71px,#5a00ff 109px,#8b00ff 146px,#bd00ff 181px)"></i><i style="left:133px;top:648px;width:174px;height:2px;background:linear-gradient(90deg,#0006ff 0px,#0100ff 30px,#5700ff 105px,#8400ff 140px,#b400ff 174px)"></i><i style="left:135px;top:650px;width:167px;height:2px;background:linear-gradient(90deg,#0004ff 0px,#0100ff 27px,#5300ff 100px,#ad00ff 167px)"></i><i style="left:136px;top:652px;width:160px;height:2px;background:linear-gradient(90deg,#0003ff 0px,#00f 25px,#4f00ff 95px,#a500ff 160px)"></i><i style="left:138px;top:654px;width:152px;height:2px;background:linear-gradient(90deg,#0001ff 0px,#00f 22px,#4b00ff 89px,#9c00ff 152px)"></i><i style="left:140px;top:656px;width:145px;height:2px;background:linear-gradient(90deg,#00f 0px,#0200ff 21px,#4900ff 85px,#9600ff 145px)"></i><i style="left:141px;top:658px;width:138px;height:2px;background:linear-gradient(90deg,#00f 0px,#0200ff 19px,#4600ff 81px,#8e00ff 138px)"></i><i style="left:143px;top:660px;width:130px;height:2px;background:linear-gradient(90deg,#00f 0px,#00f 14px,#0500ff 20px,#40f 77px,#8600ff 130px)"></i><i style="left:145px;top:662px;width:123px;height:2px;background:linear-gradient(90deg,#00f 0px,#00f 12px,#0b00ff 23px,#4300ff 74px,#8000ff 123px)"></i><i style="left:147px;top:664px;width:115px;height:2px;background:linear-gradient(90deg,#00f 0px,#00f 9px,#10f 26px,#40f 72px,#7800ff 115px)"></i><i style="left:149px;top:666px;width:107px;height:2px;background:linear-gradient(90deg,#00f 0px,#0100ff 7px,#1800ff 30px,#7100ff 107px)"></i><i style="left:151px;top:668px;width:100px;height:2px;background:linear-gradient(90deg,#00f 0px,#00f 4px,#2100ff 36px,#6b00ff 100px)"></i><i style="left:154px;top:670px;width:91px;height:2px;background:linear-gradient(90deg,#00f 0px,#3100ff 47px,#6400ff 91px)"></i><i style="left:156px;top:672px;width:83px;height:2px;background:linear-gradient(90deg,#0300ff 0px,#2f00ff 42px,#5d00ff 83px)"></i><i style="left:159px;top:674px;width:75px;height:2px;background:linear-gradient(90deg,#0600ff 0px,#5800ff 75px)"></i><i style="left:161px;top:676px;width:67px;height:2px;background:linear-gradient(90deg,#0900ff 0px,#5100ff 67px)"></i><i style="left:164px;top:678px;width:58px;height:2px;background:linear-gradient(90deg,#0d00ff 0px,#4b00ff 58px)"></i><i style="left:167px;top:680px;width:50px;height:2px;background:linear-gradient(90deg,#10f 0px,#4600ff 50px)"></i><i style="left:170px;top:682px;width:41px;height:2px;background:linear-gradient(90deg,#1400ff 0px,#4000ff 41px)"></i><i style="left:173px;top:684px;width:32px;height:2px;background:linear-gradient(90deg,#1800ff 0px,#3a00ff 32px)"></i><i style="left:176px;top:686px;width:24px;height:2px;background:linear-gradient(90deg,#1c00ff 0px,#3500ff 24px)"></i><i style="left:179px;top:688px;width:15px;height:2px;background:linear-gradient(90deg,#1f00ff 0px,#2f00ff 15px)"></i><i style="left:182px;top:690px;width:6px;height:2px;background:linear-gradient(90deg,#2300ff 0px,#2900ff 6px)"></i></div><div id="ins" style="left:2126px;top:205px;width:308px;height:260px"><i style="left:0px;top:0px;width:308px;height:3px;background:linear-gradient(90deg,#87ffcf 0px,#c1ffcc 125px,#ffffca 244px,#ffdfaf 308px)"></i><i style="left:0px;top:3px;width:308px;height:3px;background:linear-gradient(90deg,#87ffd0 0px,#c1ffcd 124px,#ffffcb 242px,#ffdeb0 308px)"></i><i style="left:0px;top:6px;width:308px;height:3px;background:linear-gradient(90deg,#88ffd1 0px,#c2ffcf 123px,#ffc 240px,#ffddb0 308px)"></i><i style="left:0px;top:9px;width:308px;height:3px;background:linear-gradient(90deg,#89ffd2 0px,#c2ffd0 122px,#ffffcd 238px,#ffdcb0 308px)"></i><i style="left:0px;top:12px;width:308px;height:3px;background:linear-gradient(90deg,#89ffd3 0px,#c2ffd1 120px,#ffffce 236px,#ffdbb0 308px)"></i><i style="left:0px;top:15px;width:308px;height:3px;background:linear-gradient(90deg,#8affd4 0px,#c2ffd2 118px,#ffffcf 234px,#ffdab0 308px)"></i><i style="left:0px;top:18px;width:308px;height:3px;background:linear-gradient(90deg,#8bffd5 0px,#c3ffd3 118px,#ffffd1 231px,#ffdab1 308px)"></i><i style="left:0px;top:21px;width:308px;height:3px;background:linear-gradient(90deg,#8cffd6 0px,#c4ffd4 117px,#ffffd2 229px,#ffd9b1 308px)"></i><i style="left:0px;top:24px;width:308px;height:3px;background:linear-gradient(90deg,#8cffd7 0px,#c4ffd5 116px,#ffffd3 227px,#ffd8b1 308px)"></i><i style="left:0px;top:27px;width:308px;height:3px;background:linear-gradient(90deg,#8dffd8 0px,#c4ffd6 115px,#ffffd4 225px,#ffd7b1 308px)"></i><i style="left:0px;top:30px;width:308px;height:3px;background:linear-gradient(90deg,#8effd9 0px,#c5ffd7 114px,#ffffd5 223px,#ffd6b1 308px)"></i><i style="left:0px;top:33px;width:308px;height:3px;background:linear-gradient(90deg,#8fffda 0px,#c5ffd8 113px,#ffffd7 221px,#ffd5b2 308px)"></i><i style="left:0px;top:36px;width:308px;height:3px;background:linear-gradient(90deg,#90ffdb 0px,#c6ffda 112px,#ffffd8 219px,#ffd4b2 308px)"></i><i style="left:0px;top:39px;width:308px;height:3px;background:linear-gradient(90deg,#90ffdc 0px,#c6ffdb 110px,#ffffd9 217px,#ffd3b2 308px)"></i><i style="left:0px;top:42px;width:308px;height:3px;background:linear-gradient(90deg,#91ffdd 0px,#c6ffdc 109px,#ffffda 215px,#ffd2b2 308px)"></i><i style="left:0px;top:45px;width:308px;height:3px;background:linear-gradient(90deg,#92ffde 0px,#c6ffdd 107px,#ffffdb 213px,#ffd1b2 308px)"></i><i style="left:0px;top:48px;width:308px;height:3px;background:linear-gradient(90deg,#93ffe0 0px,#c7ffde 107px,#ffd 210px,#ffd0b3 308px)"></i><i style="left:0px;top:51px;width:308px;height:3px;background:linear-gradient(90deg,#93ffe1 0px,#c8ffdf 106px,#ffffde 208px,#ffcfb3 308px)"></i><i style="left:0px;top:54px;width:308px;height:3px;background:linear-gradient(90deg,#94ffe2 0px,#c8ffe0 105px,#ffffdf 206px,#ffceb3 308px)"></i><i style="left:0px;top:57px;width:308px;height:3px;background:linear-gradient(90deg,#95ffe3 0px,#c9ffe2 104px,#ffffe0 204px,#ffe4c8 255px,#ffcdb3 308px)"></i><i style="left:0px;top:60px;width:308px;height:3px;background:linear-gradient(90deg,#96ffe4 0px,#c9ffe3 103px,#ffffe2 202px,#ffe4c9 253px,#ffccb3 308px)"></i><i style="left:0px;top:63px;width:308px;height:3px;background:linear-gradient(90deg,#97ffe5 0px,#c9ffe4 102px,#ffffe3 200px,#ffe4ca 252px,#ffcbb4 308px)"></i><i style="left:0px;top:66px;width:308px;height:3px;background:linear-gradient(90deg,#97ffe6 0px,#caffe5 101px,#ffffe4 198px,#ffe3cb 251px,#ffcab4 308px)"></i><i style="left:0px;top:69px;width:308px;height:3px;background:linear-gradient(90deg,#98ffe7 0px,#caffe6 99px,#ffffe5 196px,#ffe3cc 249px,#ffc9b4 308px)"></i><i style="left:0px;top:72px;width:308px;height:3px;background:linear-gradient(90deg,#99ffe8 0px,#caffe7 97px,#ffffe6 194px,#ffe3cc 248px,#ffc8b4 308px)"></i><i style="left:0px;top:75px;width:308px;height:3px;background:linear-gradient(90deg,#9affe9 0px,#cbffe9 98px,#ffffe8 191px,#ffe1cc 249px,#ffc7b4 308px)"></i><i style="left:0px;top:78px;width:308px;height:3px;background:linear-gradient(90deg,#9bffeb 0px,#ccffea 97px,#ffffe9 189px,#ffe1cd 247px,#ffc7b4 308px)"></i><i style="left:0px;top:81px;width:308px;height:3px;background:linear-gradient(90deg,#9cffec 0px,#ccffeb 96px,#ffffea 187px,#ffe0ce 246px,#ffc6b5 308px)"></i><i style="left:0px;top:84px;width:308px;height:3px;background:linear-gradient(90deg,#9cffed 0px,#ccffec 94px,#ffffec 185px,#ffe0cf 244px,#ffc5b5 308px)"></i><i style="left:0px;top:87px;width:308px;height:3px;background:linear-gradient(90deg,#9dffee 0px,#cdffed 93px,#ffffed 183px,#ffe0cf 243px,#ffc4b5 308px)"></i><i style="left:0px;top:90px;width:308px;height:3px;background:linear-gradient(90deg,#9effef 0px,#cdffef 92px,#ffe 181px,#ffdfd0 241px,#ffc3b5 308px)"></i><i style="left:0px;top:93px;width:308px;height:3px;background:linear-gradient(90deg,#9ffff0 0px,#ffffef 179px,#ffdfd1 240px,#ffc2b5 308px)"></i><i style="left:0px;top:96px;width:308px;height:3px;background:linear-gradient(90deg,#a0fff2 0px,#fffff1 177px,#ffded1 239px,#ffc1b6 308px)"></i><i style="left:0px;top:99px;width:308px;height:3px;background:linear-gradient(90deg,#a1fff3 0px,#fffff2 175px,#ffded2 238px,#ffc0b6 308px)"></i><i style="left:0px;top:102px;width:308px;height:3px;background:linear-gradient(90deg,#a2fff4 0px,#fffff3 173px,#ffddd3 237px,#ffbfb6 308px)"></i><i style="left:0px;top:105px;width:308px;height:3px;background:linear-gradient(90deg,#a2fff5 0px,#fffff5 170px,#ffdcd3 237px,#ffbeb6 308px)"></i><i style="left:0px;top:108px;width:308px;height:3px;background:linear-gradient(90deg,#a3fff6 0px,#fffff6 168px,#ffdcd4 235px,#ffbdb6 308px)"></i><i style="left:0px;top:111px;width:308px;height:3px;background:linear-gradient(90deg,#a4fff8 0px,#fffff7 166px,#ffdbd5 234px,#ffbdb6 308px)"></i><i style="left:0px;top:114px;width:308px;height:3px;background:linear-gradient(90deg,#a5fff9 0px,#fffff9 164px,#ffdbd6 232px,#ffbcb7 308px)"></i><i style="left:0px;top:117px;width:308px;height:3px;background:linear-gradient(90deg,#a6fffa 0px,#fffffa 162px,#ffdbd6 231px,#ffbbb7 308px)"></i><i style="left:0px;top:120px;width:308px;height:3px;background:linear-gradient(90deg,#a7fffb 0px,#fffffb 160px,#ffdad7 230px,#ffbab7 308px)"></i><i style="left:0px;top:123px;width:308px;height:3px;background:linear-gradient(90deg,#a8fffd 0px,#fffffc 158px,#ffdad8 228px,#ffb9b7 308px)"></i><i style="left:0px;top:126px;width:308px;height:3px;background:linear-gradient(90deg,#a9fffe 0px,#fffffe 156px,#ffd9d9 227px,#ffb8b7 308px)"></i><i style="left:0px;top:129px;width:308px;height:3px;background:linear-gradient(90deg,#aff 0px,#fff 154px,#ffd9d9 226px,#ffb7b7 308px)"></i><i style="left:0px;top:132px;width:308px;height:3px;background:linear-gradient(90deg,#aafeff 0px,#fffdff 154px,#ffd7d9 227px,#ffb6b8 308px)"></i><i style="left:0px;top:135px;width:308px;height:3px;background:linear-gradient(90deg,#aafcff 0px,#fffcff 154px,#ffd6d9 227px,#ffb5b8 308px)"></i><i style="left:0px;top:138px;width:308px;height:3px;background:linear-gradient(90deg,#aafbff 0px,#fffaff 155px,#ffd5d9 227px,#ffb5b8 308px)"></i><i style="left:0px;top:141px;width:308px;height:3px;background:linear-gradient(90deg,#aafaff 0px,#fff9ff 155px,#ffd4d9 227px,#ffb4b8 308px)"></i><i style="left:0px;top:144px;width:308px;height:3px;background:linear-gradient(90deg,#aaf9ff 0px,#fff8ff 155px,#ffd3d9 227px,#ffb3b8 308px)"></i><i style="left:0px;top:147px;width:308px;height:3px;background:linear-gradient(90deg,#aaf7ff 0px,#fff7ff 155px,#ffd2da 227px,#ffb2b9 308px)"></i><i style="left:0px;top:150px;width:308px;height:3px;background:linear-gradient(90deg,#aaf6ff 0px,#fff5ff 155px,#ffd1da 227px,#ffb1b9 308px)"></i><i style="left:0px;top:153px;width:308px;height:3px;background:linear-gradient(90deg,#aaf5ff 0px,#fff4ff 155px,#ffd0d9 228px,#ffb0b9 308px)"></i><i style="left:0px;top:156px;width:308px;height:3px;background:linear-gradient(90deg,#aaf4ff 0px,#fff3ff 156px,#ffcfda 227px,#ffafb9 308px)"></i><i style="left:0px;top:159px;width:308px;height:3px;background:linear-gradient(90deg,#aaf3ff 0px,#fff1ff 156px,#ffceda 227px,#ffaeb9 308px)"></i><i style="left:0px;top:162px;width:308px;height:3px;background:linear-gradient(90deg,#abf1ff 0px,#fff0ff 156px,#ffcdda 227px,#ffaeb9 308px)"></i><i style="left:0px;top:165px;width:308px;height:3px;background:linear-gradient(90deg,#abf0ff 0px,#ffefff 156px,#ffccda 227px,#ffadba 308px)"></i><i style="left:0px;top:168px;width:308px;height:3px;background:linear-gradient(90deg,#abefff 0px,#fef 156px,#ffcbda 228px,#ffacba 308px)"></i><i style="left:0px;top:171px;width:308px;height:3px;background:linear-gradient(90deg,#abeeff 0px,#ffecff 156px,#ffcada 228px,#ffabba 308px)"></i><i style="left:0px;top:174px;width:308px;height:3px;background:linear-gradient(90deg,#abedff 0px,#ffebff 157px,#ffc9da 228px,#ffaaba 308px)"></i><i style="left:0px;top:177px;width:308px;height:3px;background:linear-gradient(90deg,#abebff 0px,#ffeaff 157px,#ffc8da 228px,#ffa9ba 308px)"></i><i style="left:0px;top:180px;width:308px;height:3px;background:linear-gradient(90deg,#abeaff 0px,#ffe8ff 157px,#ffc7db 228px,#ffa9ba 308px)"></i><i style="left:0px;top:183px;width:308px;height:3px;background:linear-gradient(90deg,#abe9ff 0px,#ffe7ff 157px,#ffc6db 228px,#ffa8bb 308px)"></i><i style="left:0px;top:186px;width:308px;height:3px;background:linear-gradient(90deg,#abe8ff 0px,#ffe6ff 157px,#ffc5db 228px,#ffa7bb 308px)"></i><i style="left:0px;top:189px;width:308px;height:3px;background:linear-gradient(90deg,#abe7ff 0px,#ffe5ff 157px,#ffc3db 229px,#ffa6bb 308px)"></i><i style="left:0px;top:192px;width:308px;height:3px;background:linear-gradient(90deg,#abe6ff 0px,#ffe4ff 157px,#ffc2db 229px,#ffa5bb 308px)"></i><i style="left:0px;top:195px;width:308px;height:3px;background:linear-gradient(90deg,#abe4ff 0px,#ffe2ff 158px,#ffc1db 229px,#ffa4bb 308px)"></i><i style="left:0px;top:198px;width:308px;height:3px;background:linear-gradient(90deg,#abe3ff 0px,#ffe1ff 158px,#ffc0db 229px,#ffa4bb 308px)"></i><i style="left:0px;top:201px;width:308px;height:3px;background:linear-gradient(90deg,#ace2ff 0px,#ffe0ff 158px,#ffbfdb 229px,#ffa3bc 308px)"></i><i style="left:0px;top:204px;width:308px;height:3px;background:linear-gradient(90deg,#ace1ff 0px,#ffdfff 158px,#ffbedb 229px,#ffa2bc 308px)"></i><i style="left:0px;top:207px;width:308px;height:3px;background:linear-gradient(90deg,#ace0ff 0px,#fdf 158px,#ffbddb 229px,#ffa1bc 308px)"></i><i style="left:0px;top:210px;width:308px;height:3px;background:linear-gradient(90deg,#acdfff 0px,#ffdcff 158px,#ffbcdb 230px,#ffa0bc 308px)"></i><i style="left:0px;top:213px;width:308px;height:3px;background:linear-gradient(90deg,#acdeff 0px,#ffdbff 159px,#ffbbdc 229px,#ff9fbc 308px)"></i><i style="left:0px;top:216px;width:308px;height:3px;background:linear-gradient(90deg,#acdcff 0px,#ffdaff 159px,#ffbadc 229px,#ff9fbc 308px)"></i><i style="left:0px;top:219px;width:308px;height:3px;background:linear-gradient(90deg,#acdbff 0px,#ffd8ff 159px,#ffbadc 229px,#ff9ebd 308px)"></i><i style="left:0px;top:222px;width:308px;height:3px;background:linear-gradient(90deg,#acdaff 0px,#ffd7ff 159px,#ffb9dc 229px,#ff9dbd 308px)"></i><i style="left:0px;top:225px;width:308px;height:3px;background:linear-gradient(90deg,#acd9ff 0px,#ffd6ff 159px,#ffb7dc 230px,#ff9cbd 308px)"></i><i style="left:0px;top:228px;width:308px;height:3px;background:linear-gradient(90deg,#acd8ff 0px,#ffd5ff 159px,#ffb6dc 230px,#ff9bbd 308px)"></i><i style="left:0px;top:231px;width:308px;height:3px;background:linear-gradient(90deg,#acd7ff 0px,#ffd4ff 160px,#ffb5dc 230px,#ff9bbd 308px)"></i><i style="left:0px;top:234px;width:308px;height:3px;background:linear-gradient(90deg,#acd6ff 0px,#ffd2ff 160px,#ffb4dc 230px,#ff9abd 308px)"></i><i style="left:0px;top:237px;width:308px;height:3px;background:linear-gradient(90deg,#acd5ff 0px,#ffd1ff 160px,#ffb3dc 230px,#ff99bd 308px)"></i><i style="left:0px;top:240px;width:308px;height:3px;background:linear-gradient(90deg,#acd4ff 0px,#ffd0ff 160px,#ffb3dc 230px,#ff98be 308px)"></i><i style="left:0px;top:243px;width:308px;height:3px;background:linear-gradient(90deg,#add2ff 0px,#ffcfff 160px,#ffb2dd 230px,#ff97be 308px)"></i><i style="left:0px;top:246px;width:308px;height:3px;background:linear-gradient(90deg,#add1ff 0px,#ffceff 160px,#ffb0dc 231px,#ff97be 308px)"></i><i style="left:0px;top:249px;width:308px;height:3px;background:linear-gradient(90deg,#add0ff 0px,#ffcdff 161px,#ffb0dd 230px,#ff96be 308px)"></i><i style="left:0px;top:252px;width:308px;height:3px;background:linear-gradient(90deg,#adcfff 0px,#ffcbff 161px,#ffafdd 230px,#ff95be 308px)"></i><i style="left:0px;top:255px;width:308px;height:3px;background:linear-gradient(90deg,#adceff 0px,#ffcaff 161px,#ffaedd 230px,#ff94be 308px)"></i><i style="left:0px;top:258px;width:308px;height:2px;background:linear-gradient(90deg,#adcdff 0px,#ffc9ff 161px,#ffaddd 230px,#ff94bf 308px)"></i></div>
<svg width="2547" height="1380" viewBox="0 0 2547 1380">
<defs><linearGradient id="g1" x1="0" y1="0" x2="0" y2="1"><stop offset="0" stop-color="#242424"/><stop offset="1" stop-color="#202020"/></linearGradient><linearGradient id="g2" x1="0" y1="0" x2="0" y2="1"><stop offset="0" stop-color="#e8343a"/><stop offset="0.5" stop-color="#e02228"/><stop offset="1" stop-color="#d81418"/></linearGradient><radialGradient id="g3" cx="0.5" cy="0.3" r="0.7"><stop offset="0" stop-color="#d01820"/><stop offset="0.7" stop-color="#d42028"/><stop offset="1" stop-color="#dc3038"/></radialGradient><linearGradient id="g4" x1="0" y1="0" x2="0" y2="1"><stop offset="0" stop-color="#c81018"/><stop offset="1" stop-color="#e23a40"/></linearGradient><linearGradient id="g5" x1="0" y1="0" x2="1" y2="0"><stop offset="0" stop-color="#ff0000"/><stop offset="0.2" stop-color="#ff00ff"/><stop offset="0.4" stop-color="#0000ff"/><stop offset="0.6" stop-color="#00ff00"/><stop offset="0.8" stop-color="#ffff00"/><stop offset="1" stop-color="#ff0000"/></linearGradient><linearGradient id="g6" x1="0" y1="0" x2="0" y2="1"><stop offset="0" stop-color="#9a9a9a"/><stop offset="0.5" stop-color="#6a6a6a"/><stop offset="1" stop-color="#7a7a7a"/></linearGradient><linearGradient id="g7" x1="0" y1="0" x2="0" y2="1"><stop offset="0" stop-color="#4a4a4a"/><stop offset="1" stop-color="#8a8a8a"/></linearGradient><linearGradient id="g8" x1="0" y1="0" x2="0" y2="1"><stop offset="0" stop-color="#585858"/><stop offset="0.12" stop-color="#454545"/><stop offset="1" stop-color="#303030"/></linearGradient><linearGradient id="g9" x1="0" y1="0" x2="0" y2="1"><stop offset="0" stop-color="#2c2c2c"/><stop offset="1" stop-color="#444"/></linearGradient><linearGradient id="g10" x1="0" y1="0" x2="1" y2="0"><stop offset="0" stop-color="#10e010"/><stop offset="1" stop-color="#18c818"/></linearGradient><linearGradient id="g11" x1="0" y1="0" x2="0" y2="1"><stop offset="0" stop-color="#525252"/><stop offset="1" stop-color="#707070"/></linearGradient><linearGradient id="g12" x1="0" y1="0" x2="0" y2="1"><stop offset="0" stop-color="#454545"/><stop offset="1" stop-color="#747474"/></linearGradient><linearGradient id="g13" x1="0" y1="0" x2="1" y2="0"><stop offset="0" stop-color="#10e010"/><stop offset="1" stop-color="#18c818"/></linearGradient><linearGradient id="g14" x1="0" y1="0" x2="0" y2="1"><stop offset="0" stop-color="#525252"/><stop offset="1" stop-color="#707070"/></linearGradient><linearGradient id="g15" x1="0" y1="0" x2="0" y2="1"><stop offset="0" stop-color="#454545"/><stop offset="1" stop-color="#747474"/></linearGradient><linearGradient id="g16" x1="0" y1="0" x2="1" y2="0"><stop offset="0" stop-color="#f4f000"/><stop offset="1" stop-color="#d8d400"/></linearGradient><linearGradient id="g17" x1="0" y1="0" x2="0" y2="1"><stop offset="0" stop-color="#525252"/><stop offset="1" stop-color="#707070"/></linearGradient><linearGradient id="g18" x1="0" y1="0" x2="0" y2="1"><stop offset="0" stop-color="#454545"/><stop offset="1" stop-color="#747474"/></linearGradient><linearGradient id="g19" x1="0" y1="0" x2="0" y2="1"><stop offset="0" stop-color="#6e6e6e"/><stop offset="0.5" stop-color="#505050"/><stop offset="1" stop-color="#5c5c5c"/></linearGradient><linearGradient id="g20" x1="0" y1="0" x2="0" y2="1"><stop offset="0" stop-color="#4c4c4c"/><stop offset="1" stop-color="#888"/></linearGradient><linearGradient id="g21" x1="0" y1="0" x2="0" y2="1"><stop offset="0" stop-color="#4c4c4c"/><stop offset="1" stop-color="#888"/></linearGradient><linearGradient id="g22" x1="0" y1="0" x2="1" y2="0"><stop offset="0" stop-color="#ffffff"/><stop offset="0.22" stop-color="#ffffff"/><stop offset="0.55" stop-color="#ffffff"/><stop offset="1" stop-color="#707070"/></linearGradient><linearGradient id="g23" x1="0" y1="0" x2="1" y2="0"><stop offset="0" stop-color="#d8d838"/><stop offset="0.22" stop-color="#c4c400"/><stop offset="0.55" stop-color="#c4c400"/><stop offset="1" stop-color="#6a6a00"/></linearGradient><linearGradient id="g24" x1="0" y1="0" x2="1" y2="0"><stop offset="0" stop-color="#d860d8"/><stop offset="0.22" stop-color="#c000c0"/><stop offset="0.55" stop-color="#c000c0"/><stop offset="1" stop-color="#500050"/></linearGradient><linearGradient id="g25" x1="0" y1="0" x2="1" y2="0"><stop offset="0" stop-color="#58d8d8"/><stop offset="0.22" stop-color="#00c0c0"/><stop offset="0.55" stop-color="#00c0c0"/><stop offset="1" stop-color="#004848"/></linearGradient><linearGradient id="g26" x1="0" y1="0" x2="1" y2="0"><stop offset="0" stop-color="#4040e0"/><stop offset="0.22" stop-color="#0000c0"/><stop offset="0.55" stop-color="#0000c0"/><stop offset="1" stop-color="#000060"/></linearGradient><linearGradient id="g27" x1="0" y1="0" x2="1" y2="0"><stop offset="0" stop-color="#50d850"/><stop offset="0.22" stop-color="#00c000"/><stop offset="0.55" stop-color="#00c000"/><stop offset="1" stop-color="#004c00"/></linearGradient><linearGradient id="g28" x1="0" y1="0" x2="1" y2="0"><stop offset="0" stop-color="#e05050"/><stop offset="0.22" stop-color="#c00000"/><stop offset="0.55" stop-color="#c00000"/><stop offset="1" stop-color="#4c0000"/></linearGradient><linearGradient id="g29" x1="0" y1="0" x2="1" y2="0"><stop offset="0" stop-color="#d0d0d0"/><stop offset="0.22" stop-color="#c0c0c0"/><stop offset="0.55" stop-color="#c0c0c0"/><stop offset="1" stop-color="#5c5c5c"/></linearGradient><linearGradient id="g30" x1="0" y1="0" x2="0" y2="1"><stop offset="0" stop-color="#ffffff"/><stop offset="0.45" stop-color="#ffffff"/><stop offset="1" stop-color="#8c8c8c"/></linearGradient><linearGradient id="g31" x1="0" y1="0" x2="0" y2="1"><stop offset="0" stop-color="#ff5252"/><stop offset="1" stop-color="#ff4040"/></linearGradient><linearGradient id="g32" x1="0" y1="0" x2="0" y2="1"><stop offset="0" stop-color="#52b052"/><stop offset="1" stop-color="#48a848"/></linearGradient><linearGradient id="g33" x1="0" y1="0" x2="0" y2="1"><stop offset="0" stop-color="#5252ff"/><stop offset="1" stop-color="#4040ff"/></linearGradient><linearGradient id="g34" x1="0" y1="0" x2="0" y2="1"><stop offset="0" stop-color="#3a3a3a"/><stop offset="1" stop-color="#2e2e2e"/></linearGradient><linearGradient id="g35" x1="0" y1="0" x2="0" y2="1"><stop offset="0" stop-color="#1c1c1c"/><stop offset="1" stop-color="#0c0c0c"/></linearGradient><linearGradient id="g36" x1="0" y1="0" x2="0" y2="1"><stop offset="0" stop-color="#424242"/><stop offset="1" stop-color="#3a3a3a"/></linearGradient><linearGradient id="g37" x1="0" y1="0" x2="0" y2="1"><stop offset="0" stop-color="#848484"/><stop offset="1" stop-color="#767676"/></linearGradient><linearGradient id="g38" x1="0" y1="0" x2="0" y2="1"><stop offset="0" stop-color="#424242"/><stop offset="1" stop-color="#3a3a3a"/></linearGradient><linearGradient id="g39" x1="0" y1="0" x2="0" y2="1"><stop offset="0" stop-color="#848484"/><stop offset="1" stop-color="#767676"/></linearGradient><linearGradient id="g40" x1="0" y1="0" x2="0" y2="1"><stop offset="0" stop-color="#424242"/><stop offset="1" stop-color="#3a3a3a"/></linearGradient><linearGradient id="g41" x1="0" y1="0" x2="0" y2="1"><stop offset="0" stop-color="#4a4a4a"/><stop offset="1" stop-color="#212121"/></linearGradient><linearGradient id="g42" x1="0" y1="0" x2="0" y2="1"><stop offset="0" stop-color="#a4a4a4"/><stop offset="0.5" stop-color="#7c7c7c"/><stop offset="1" stop-color="#585858"/></linearGradient><linearGradient id="g43" x1="0" y1="0" x2="0" y2="1"><stop offset="0" stop-color="#a4a4a4"/><stop offset="0.5" stop-color="#7c7c7c"/><stop offset="1" stop-color="#585858"/></linearGradient><linearGradient id="g44" x1="0" y1="0" x2="0" y2="1"><stop offset="0" stop-color="#a4a4a4"/><stop offset="0.5" stop-color="#7c7c7c"/><stop offset="1" stop-color="#585858"/></linearGradient><linearGradient id="g45" x1="0" y1="0" x2="0" y2="1"><stop offset="0" stop-color="#a4a4a4"/><stop offset="0.5" stop-color="#7c7c7c"/><stop offset="1" stop-color="#585858"/></linearGradient><linearGradient id="g46" x1="0" y1="0" x2="0" y2="1"><stop offset="0" stop-color="#a4a4a4"/><stop offset="0.5" stop-color="#7c7c7c"/><stop offset="1" stop-color="#585858"/></linearGradient><linearGradient id="g47" x1="0" y1="0" x2="0" y2="1"><stop offset="0" stop-color="#a4a4a4"/><stop offset="0.5" stop-color="#7c7c7c"/><stop offset="1" stop-color="#585858"/></linearGradient><linearGradient id="g48" x1="0" y1="0" x2="0" y2="1"><stop offset="0" stop-color="#a4a4a4"/><stop offset="0.5" stop-color="#7c7c7c"/><stop offset="1" stop-color="#585858"/></linearGradient><linearGradient id="g49" x1="0" y1="0" x2="0" y2="1"><stop offset="0" stop-color="#262626"/><stop offset="1" stop-color="#3a3a3a"/></linearGradient><linearGradient id="g50" x1="0" y1="0" x2="0" y2="1"><stop offset="0" stop-color="#a8a8a8"/><stop offset="1" stop-color="#8c8c8c"/></linearGradient><linearGradient id="g51" x1="0" y1="0" x2="0" y2="1"><stop offset="0" stop-color="#929292"/><stop offset="1" stop-color="#585858"/></linearGradient><linearGradient id="g52" x1="0" y1="0" x2="0" y2="1"><stop offset="0" stop-color="#787878"/><stop offset="1" stop-color="#a8a8a8"/></linearGradient><linearGradient id="g53" x1="0" y1="0" x2="0" y2="1"><stop offset="0" stop-color="#a2a2a2"/><stop offset="1" stop-color="#5c5c5c"/></linearGradient><linearGradient id="g54" x1="0" y1="0" x2="0" y2="1"><stop offset="0" stop-color="#a6a6a6"/><stop offset="1" stop-color="#5e5e5e"/></linearGradient></defs>
<rect x="0" y="0" width="2547" height="34" fill="#ffffff"/>
<path d="M14 5L18.9 9.9L14 14.8L9.1 9.9Z" fill="#f4c41c" stroke="#f4c41c" stroke-width="1.2" stroke-linejoin="round"/>
<path d="M7.4 12.1L12.3 17L7.4 21.9L2.5 17Z" fill="#30b0f0" stroke="#30b0f0" stroke-width="1.2" stroke-linejoin="round"/>
<path d="M20.6 12.1L25.5 17L20.6 21.9L15.7 17Z" fill="#1cc81c" stroke="#1cc81c" stroke-width="1.2" stroke-linejoin="round"/>
<path d="M14 18.6L18.9 23.5L14 28.4L9.1 23.5Z" fill="#e81c4c" stroke="#e81c4c" stroke-width="1.2" stroke-linejoin="round"/>
<path d="M10.9 10.6L14 7.5L17.1 10.6" fill="none" stroke="#fbdc50" stroke-width="0.9"/>
<path d="M8.1 13.9L5 17L8.1 20.1" fill="none" stroke="#70e0ff" stroke-width="0.9"/>
<path d="M19.9 13.9L23 17L19.9 20.1" fill="none" stroke="#60f060" stroke-width="0.9"/>
<path d="M10.9 22.8L14 25.9L17.1 22.8" fill="none" stroke="#ff6a90" stroke-width="0.9"/>
<text x="31.5" y="24" font-size="18" fill="#000000" textLength="589" lengthAdjust="spacingAndGlyphs" xml:space="preserve">Calman 2025 Calman Ultimate for Business 106 Days Remaining  - Untitled</text>
<line x1="2376" y1="16.5" x2="2391" y2="16.5" stroke="#000" stroke-width="1.2"/>
<path d="M2448.8 12.2V9.8H2459.3V20.2H2456.5" fill="none" stroke="#000" stroke-width="1.2"/>
<rect x="2445.7" y="12.7" width="10.8" height="10.6" fill="none" stroke="#000" stroke-width="1.2"/>
<path d="M2516.3 9.4L2530.6 23.6M2530.6 9.4L2516.3 23.6" stroke="#000" stroke-width="1.2" fill="none"/>
<rect x="0" y="34" width="2547" height="99" fill="url(#g1)"/>
<rect x="0" y="133" width="2547" height="1.6" fill="#3a3a3a"/>
<path d="M1.5 34.5H274.5V72.5Q274.5 78.5 268.5 78.5H7.5Q1.5 78.5 1.5 72.5Z" fill="url(#g2)" stroke="#8c4a4a" stroke-width="1"/>
<g transform="translate(51.5 55.6) rotate(45)"><g fill="none" stroke="#fff" stroke-width="3.5" stroke-linecap="round"><path d="M-1.9 -10.9H-10.9V-1.9M1.9 -10.9H10.9V-1.9M-1.9 10.9H-10.9V1.9M1.9 10.9H10.9V1.9"/></g><g fill="#fff"><rect x="-8" y="-8" width="6.8" height="6.8" rx="1.2"/><rect x="-8" y="1.2" width="6.8" height="6.8" rx="1.2"/><rect x="1.2" y="-8" width="6.8" height="6.8" rx="1.2"/><rect x="1.2" y="1.2" width="6.8" height="6.8" rx="1.2"/></g></g>
<path d="M90.4 50.6A7.45 7.45 0 1 0 90.4 61M110.2 46.3V65.3M110.05 55.8A7.45 7.45 0 1 0 95.15 55.8A7.45 7.45 0 1 0 110.05 55.8M119.5 37.4V65.3M127.6 46.3V65.3M127.6 54.7A6.35 6.35 0 0 1 140.3 54.7V65.3M140.3 54.7A6.3 6.3 0 0 1 152.9 54.7V65.3M177 46.3V65.3M176.6 55.8A7.45 7.45 0 1 0 161.7 55.8A7.45 7.45 0 1 0 176.6 55.8M185.4 46.3V65.3M185.4 56A7.65 7.65 0 0 1 200.7 56V65.3" fill="none" stroke="#fff" stroke-width="4.1"/>
<circle cx="248.7" cy="54.6" r="14.6" fill="url(#g4)"/>
<path d="M241.2 51.2H256.2L248.7 59.8Z" fill="#fff"/>
<rect x="285" y="53" width="2262" height="7" fill="url(#g5)"/>
<rect x="-6" y="87.5" width="45.5" height="40.5" rx="5" fill="url(#g6)" stroke="#c8c8c8" stroke-width="1.5"/>
<circle cx="19" cy="107.5" r="14" fill="url(#g7)"/>
<path d="M14.8 99.5V114.5L23 107Z" fill="#fff"/>
<path d="M44.5 132.5V93.5Q44.5 87.5 50.5 87.5H175.5Q181.5 87.5 181.5 93.5V132.5" fill="url(#g8)" stroke="#6e6e6e" stroke-width="1.5"/>
<line x1="131.5" y1="88" x2="131.5" y2="132" stroke="#6e6e6e" stroke-width="1.5"/>
<text x="53.5" y="117" font-size="18.5" fill="#dcdcdc" textLength="69" lengthAdjust="spacingAndGlyphs">History 1</text>
<circle cx="154.8" cy="113" r="13.5" fill="url(#g9)"/>
<path d="M150.3 113.5H159.3M154.8 109V118" stroke="#8a8a8a" stroke-width="1.2"/>
<path d="M1821.5 131.5V93Q1821.5 87 1827.5 87H2030.5Q2036.5 87 2036.5 93V131.5Z" fill="url(#g11)"/>
<path d="M1821.5 131.5V93Q1821.5 87 1827.5 87H1830.1V131.5Z" fill="url(#g10)"/>
<text x="1835" y="104" font-size="15.5" fill="#f0f0f0" textLength="98" lengthAdjust="spacingAndGlyphs">X-Rite i1Pro 2</text>
<text x="1835" y="126" font-size="15.5" fill="#f0f0f0" textLength="83.5" lengthAdjust="spacingAndGlyphs">Direct View</text>
<circle cx="1953" cy="109.4" r="14.6" fill="url(#g12)"/>
<path d="M1945.7 106.4H1960.3L1953 114.60000000000001Z" fill="#fff"/>
<line x1="1982.5" y1="92" x2="1982.5" y2="131.5" stroke="#3a3a3a" stroke-width="1.5"/>
<circle cx="2013" cy="109" r="18.8" fill="#0000ee" stroke="#e8e8ff" stroke-width="1.6"/>
<text x="2013" y="114.5" font-size="14.5" fill="#ffffff" text-anchor="middle" textLength="22.5" lengthAdjust="spacingAndGlyphs">233</text>
<path d="M2045 131.5V93Q2045 87 2051 87H2234Q2240 87 2240 93V131.5Z" fill="url(#g14)"/>
<path d="M2045 131.5V93Q2045 87 2051 87H2053.6V131.5Z" fill="url(#g13)"/>
<text x="2058.7" y="104" font-size="15.5" fill="#f0f0f0" textLength="59.6" lengthAdjust="spacingAndGlyphs">Patterns</text>
<circle cx="2215.6" cy="109.4" r="14.6" fill="url(#g15)"/>
<path d="M2208.2999999999997 106.4H2222.9L2215.6 114.60000000000001Z" fill="#fff"/>
<path d="M2249.3 131.5V93Q2249.3 87 2255.3 87H2458Q2464 87 2464 93V131.5Z" fill="url(#g17)"/>
<path d="M2249.3 131.5V93Q2249.3 87 2255.3 87H2257.9V131.5Z" fill="url(#g16)"/>
<text x="2263" y="104" font-size="15.5" fill="#f0f0f0" textLength="157" lengthAdjust="spacingAndGlyphs">Direct Display Control</text>
<circle cx="2440" cy="109.4" r="14.6" fill="url(#g18)"/>
<path d="M2432.7 106.4H2447.3L2440 114.60000000000001Z" fill="#fff"/>
<rect x="2469.5" y="87.5" width="49" height="40.5" rx="6" fill="url(#g19)" stroke="#b8b8b8" stroke-width="1.5"/>
<circle cx="2493.8" cy="108" r="14.6" fill="url(#g20)"/>
<path d="M2503.45 106.32L2503.45 109.68L2500.90 109.70L2500.02 111.81L2501.82 113.64L2499.44 116.02L2497.61 114.22L2495.50 115.10L2495.48 117.65L2492.12 117.65L2492.10 115.10L2489.99 114.22L2488.16 116.02L2485.78 113.64L2487.58 111.81L2486.70 109.70L2484.15 109.68L2484.15 106.32L2486.70 106.30L2487.58 104.19L2485.78 102.36L2488.16 99.98L2489.99 101.78L2492.10 100.90L2492.12 98.35L2495.48 98.35L2495.50 100.90L2497.61 101.78L2499.44 99.98L2501.82 102.36L2500.02 104.19L2500.90 106.30ZM2498.20 108.00A4.4 4.4 0 1 0 2489.40 108.00A4.4 4.4 0 1 0 2498.20 108.00Z" fill="#c4c4c4" fill-rule="evenodd"/>
<rect x="2520.5" y="87.5" width="49" height="40.5" rx="6" fill="url(#g19)" stroke="#b8b8b8" stroke-width="1.5"/>
<circle cx="2544" cy="108" r="14.6" fill="url(#g21)"/>
<path d="M2544 100.5V115.5L2536.4 108Z" fill="#fff"/>
<text x="135" y="214.6" font-size="56.5" fill="#f2f2f2" textLength="273.5" lengthAdjust="spacingAndGlyphs">Colorspace</text>
<text x="311" y="285.5" font-size="20.5" fill="#d4d4d4" textLength="111.5" lengthAdjust="spacingAndGlyphs">DeltaE 2000</text>
<rect x="130" y="292.8" width="473.3" height="584.3" fill="#232323"/>
<line x1="191.06" y1="292.8" x2="191.06" y2="877.1" stroke="#9a9a9a" stroke-width="1.8"/>
<line x1="254.32" y1="292.8" x2="254.32" y2="877.1" stroke="#9a9a9a" stroke-width="1.8"/>
<line x1="317.58" y1="292.8" x2="317.58" y2="877.1" stroke="#9a9a9a" stroke-width="1.8"/>
<line x1="380.84" y1="292.8" x2="380.84" y2="877.1" stroke="#9a9a9a" stroke-width="1.8"/>
<line x1="444.1" y1="292.8" x2="444.1" y2="877.1" stroke="#9a9a9a" stroke-width="1.8"/>
<line x1="507.36" y1="292.8" x2="507.36" y2="877.1" stroke="#9a9a9a" stroke-width="1.8"/>
<line x1="570.62" y1="292.8" x2="570.62" y2="877.1" stroke="#9a9a9a" stroke-width="1.8"/>
<rect x="130.0" y="292.8" width="473.3" height="584.3" fill="none" stroke="#9a9a9a" stroke-width="1.8"/>
<line x1="130" y1="877.1" x2="130" y2="886.1" stroke="#e4e4e4" stroke-width="1.8"/>
<line x1="191.06" y1="878.1" x2="191.06" y2="886.1" stroke="#e4e4e4" stroke-width="1.8"/>
<line x1="254.32" y1="878.1" x2="254.32" y2="886.1" stroke="#e4e4e4" stroke-width="1.8"/>
<line x1="317.58" y1="878.1" x2="317.58" y2="886.1" stroke="#e4e4e4" stroke-width="1.8"/>
<line x1="380.84" y1="878.1" x2="380.84" y2="886.1" stroke="#e4e4e4" stroke-width="1.8"/>
<line x1="444.1" y1="878.1" x2="444.1" y2="886.1" stroke="#e4e4e4" stroke-width="1.8"/>
<line x1="507.36" y1="878.1" x2="507.36" y2="886.1" stroke="#e4e4e4" stroke-width="1.8"/>
<line x1="570.62" y1="878.1" x2="570.62" y2="886.1" stroke="#e4e4e4" stroke-width="1.8"/>
<text x="128.6" y="908" font-size="21" fill="#d4d4d4" text-anchor="middle">0</text>
<text x="191.86" y="908" font-size="21" fill="#d4d4d4" text-anchor="middle">2</text>
<text x="255.12" y="908" font-size="21" fill="#d4d4d4" text-anchor="middle">4</text>
<text x="318.38" y="908" font-size="21" fill="#d4d4d4" text-anchor="middle">6</text>
<text x="381.64" y="908" font-size="21" fill="#d4d4d4" text-anchor="middle">8</text>
<text x="444.9" y="908" font-size="21" fill="#d4d4d4" text-anchor="middle">10</text>
<text x="508.16" y="908" font-size="21" fill="#d4d4d4" text-anchor="middle">12</text>
<text x="571.42" y="908" font-size="21" fill="#d4d4d4" text-anchor="middle">14</text>
<rect x="130" y="301.4" width="59.6909" height="54.6" fill="url(#g22)" stroke="#000" stroke-width="2"/>
<rect x="130" y="374.45" width="53.6654" height="54.6" fill="url(#g23)" stroke="#000" stroke-width="2"/>
<rect x="130" y="447.5" width="210.911" height="54.6" fill="url(#g24)" stroke="#000" stroke-width="2"/>
<rect x="130" y="520.55" width="236.518" height="54.6" fill="url(#g25)" stroke="#000" stroke-width="2"/>
<rect x="130" y="593.6" width="28.5765" height="54.6" fill="url(#g26)" stroke="#000" stroke-width="2"/>
<rect x="130" y="666.65" width="278.605" height="54.6" fill="url(#g27)" stroke="#000" stroke-width="2"/>
<rect x="130" y="739.7" width="203" height="54.6" fill="url(#g28)" stroke="#000" stroke-width="2"/>
<rect x="130" y="812.75" width="48.9494" height="54.6" fill="url(#g29)" stroke="#000" stroke-width="2"/>
<line x1="130" y1="292.8" x2="130" y2="877.1" stroke="#9a9a9a" stroke-width="1.8"/>
<rect x="677.8" y="198" width="204.4" height="448.2" fill="#232323"/>
<line x1="677.8" y1="272.7" x2="882.2" y2="272.7" stroke="#9a9a9a" stroke-width="1.4"/>
<line x1="669.8" y1="272.7" x2="677.8" y2="272.7" stroke="#e0e0e0" stroke-width="1.4"/>
<line x1="677.8" y1="347.4" x2="882.2" y2="347.4" stroke="#9a9a9a" stroke-width="1.4"/>
<line x1="669.8" y1="347.4" x2="677.8" y2="347.4" stroke="#e0e0e0" stroke-width="1.4"/>
<line x1="677.8" y1="422.1" x2="882.2" y2="422.1" stroke="#9a9a9a" stroke-width="1.4"/>
<line x1="669.8" y1="422.1" x2="677.8" y2="422.1" stroke="#e0e0e0" stroke-width="1.4"/>
<line x1="677.8" y1="496.8" x2="882.2" y2="496.8" stroke="#9a9a9a" stroke-width="1.4"/>
<line x1="669.8" y1="496.8" x2="677.8" y2="496.8" stroke="#e0e0e0" stroke-width="1.4"/>
<line x1="677.8" y1="571.5" x2="882.2" y2="571.5" stroke="#9a9a9a" stroke-width="1.4"/>
<line x1="669.8" y1="571.5" x2="677.8" y2="571.5" stroke="#e0e0e0" stroke-width="1.4"/>
<line x1="669.8" y1="198" x2="677.8" y2="198" stroke="#e0e0e0" stroke-width="1.4"/>
<line x1="669.8" y1="644" x2="677.8" y2="644" stroke="#e0e0e0" stroke-width="1.4"/>
<rect x="677.8" y="198.0" width="204.4" height="447.2" fill="none" stroke="#9a9a9a" stroke-width="1.6"/>
<line x1="677.8" y1="198.3" x2="882.2" y2="198.3" stroke="#9a9a9a" stroke-width="2.6"/>
<line x1="677.8" y1="644.6" x2="882.2" y2="644.6" stroke="#9a9a9a" stroke-width="2.8"/>
<line x1="677.8" y1="644.2" x2="677.8" y2="652.6" stroke="#e0e0e0" stroke-width="1.4"/>
<line x1="882.2" y1="644.2" x2="882.2" y2="652.6" stroke="#e0e0e0" stroke-width="1.4"/>
<text x="669.2" y="204.8" font-size="20.5" fill="#d4d4d4" text-anchor="end">15</text>
<text x="669.2" y="279.5" font-size="20.5" fill="#d4d4d4" text-anchor="end">10</text>
<text x="669.2" y="354.2" font-size="20.5" fill="#d4d4d4" text-anchor="end">5</text>
<text x="669.2" y="428.9" font-size="20.5" fill="#d4d4d4" text-anchor="end">0</text>
<text x="669.2" y="503.6" font-size="20.5" fill="#d4d4d4" text-anchor="end">-5</text>
<text x="669.2" y="578.3" font-size="20.5" fill="#d4d4d4" text-anchor="end">-10</text>
<text x="669.2" y="653" font-size="20.5" fill="#d4d4d4" text-anchor="end">-15</text>
<text x="729.3" y="190" font-size="20.5" fill="#d4d4d4" textLength="64.4" lengthAdjust="spacingAndGlyphs">Delta L</text>
<text x="780" y="667" font-size="20.5" fill="#d4d4d4" text-anchor="middle" textLength="53.5" lengthAdjust="spacingAndGlyphs">100W</text>
<line x1="698.1" y1="422.1" x2="861.2" y2="422.1" stroke="#000" stroke-width="2"/>
<rect x="956.9" y="198" width="204.1" height="448.2" fill="#232323"/>
<line x1="956.9" y1="272.7" x2="1161" y2="272.7" stroke="#9a9a9a" stroke-width="1.4"/>
<line x1="948.9" y1="272.7" x2="956.9" y2="272.7" stroke="#e0e0e0" stroke-width="1.4"/>
<line x1="956.9" y1="347.4" x2="1161" y2="347.4" stroke="#9a9a9a" stroke-width="1.4"/>
<line x1="948.9" y1="347.4" x2="956.9" y2="347.4" stroke="#e0e0e0" stroke-width="1.4"/>
<line x1="956.9" y1="422.1" x2="1161" y2="422.1" stroke="#9a9a9a" stroke-width="1.4"/>
<line x1="948.9" y1="422.1" x2="956.9" y2="422.1" stroke="#e0e0e0" stroke-width="1.4"/>
<line x1="956.9" y1="496.8" x2="1161" y2="496.8" stroke="#9a9a9a" stroke-width="1.4"/>
<line x1="948.9" y1="496.8" x2="956.9" y2="496.8" stroke="#e0e0e0" stroke-width="1.4"/>
<line x1="956.9" y1="571.5" x2="1161" y2="571.5" stroke="#9a9a9a" stroke-width="1.4"/>
<line x1="948.9" y1="571.5" x2="956.9" y2="571.5" stroke="#e0e0e0" stroke-width="1.4"/>
<line x1="948.9" y1="198" x2="956.9" y2="198" stroke="#e0e0e0" stroke-width="1.4"/>
<line x1="948.9" y1="644" x2="956.9" y2="644" stroke="#e0e0e0" stroke-width="1.4"/>
<rect x="956.9" y="198.0" width="204.1" height="447.2" fill="none" stroke="#9a9a9a" stroke-width="1.6"/>
<line x1="956.9" y1="198.3" x2="1161" y2="198.3" stroke="#9a9a9a" stroke-width="2.6"/>
<line x1="956.9" y1="644.6" x2="1161" y2="644.6" stroke="#9a9a9a" stroke-width="2.8"/>
<line x1="956.9" y1="644.2" x2="956.9" y2="652.6" stroke="#e0e0e0" stroke-width="1.4"/>
<line x1="1161" y1="644.2" x2="1161" y2="652.6" stroke="#e0e0e0" stroke-width="1.4"/>
<text x="948.3" y="204.8" font-size="20.5" fill="#d4d4d4" text-anchor="end">15</text>
<text x="948.3" y="279.5" font-size="20.5" fill="#d4d4d4" text-anchor="end">10</text>
<text x="948.3" y="354.2" font-size="20.5" fill="#d4d4d4" text-anchor="end">5</text>
<text x="948.3" y="428.9" font-size="20.5" fill="#d4d4d4" text-anchor="end">0</text>
<text x="948.3" y="503.6" font-size="20.5" fill="#d4d4d4" text-anchor="end">-5</text>
<text x="948.3" y="578.3" font-size="20.5" fill="#d4d4d4" text-anchor="end">-10</text>
<text x="948.3" y="653" font-size="20.5" fill="#d4d4d4" text-anchor="end">-15</text>
<text x="1007" y="190" font-size="20.5" fill="#d4d4d4" textLength="66.4" lengthAdjust="spacingAndGlyphs">Delta C</text>
<text x="1058.95" y="667" font-size="20.5" fill="#d4d4d4" text-anchor="middle" textLength="53.5" lengthAdjust="spacingAndGlyphs">100W</text>
<rect x="977.2" y="400.437" width="162.8" height="21.663" fill="url(#g30)" stroke="#000" stroke-width="2"/>
<rect x="1235.3" y="198" width="204.5" height="448.2" fill="#232323"/>
<line x1="1235.3" y1="272.7" x2="1439.8" y2="272.7" stroke="#9a9a9a" stroke-width="1.4"/>
<line x1="1227.3" y1="272.7" x2="1235.3" y2="272.7" stroke="#e0e0e0" stroke-width="1.4"/>
<line x1="1235.3" y1="347.4" x2="1439.8" y2="347.4" stroke="#9a9a9a" stroke-width="1.4"/>
<line x1="1227.3" y1="347.4" x2="1235.3" y2="347.4" stroke="#e0e0e0" stroke-width="1.4"/>
<line x1="1235.3" y1="422.1" x2="1439.8" y2="422.1" stroke="#9a9a9a" stroke-width="1.4"/>
<line x1="1227.3" y1="422.1" x2="1235.3" y2="422.1" stroke="#e0e0e0" stroke-width="1.4"/>
<line x1="1235.3" y1="496.8" x2="1439.8" y2="496.8" stroke="#9a9a9a" stroke-width="1.4"/>
<line x1="1227.3" y1="496.8" x2="1235.3" y2="496.8" stroke="#e0e0e0" stroke-width="1.4"/>
<line x1="1235.3" y1="571.5" x2="1439.8" y2="571.5" stroke="#9a9a9a" stroke-width="1.4"/>
<line x1="1227.3" y1="571.5" x2="1235.3" y2="571.5" stroke="#e0e0e0" stroke-width="1.4"/>
<line x1="1227.3" y1="198" x2="1235.3" y2="198" stroke="#e0e0e0" stroke-width="1.4"/>
<line x1="1227.3" y1="644" x2="1235.3" y2="644" stroke="#e0e0e0" stroke-width="1.4"/>
<rect x="1235.3" y="198.0" width="204.5" height="447.2" fill="none" stroke="#9a9a9a" stroke-width="1.6"/>
<line x1="1235.3" y1="198.3" x2="1439.8" y2="198.3" stroke="#9a9a9a" stroke-width="2.6"/>
<line x1="1235.3" y1="644.6" x2="1439.8" y2="644.6" stroke="#9a9a9a" stroke-width="2.8"/>
<line x1="1235.3" y1="644.2" x2="1235.3" y2="652.6" stroke="#e0e0e0" stroke-width="1.4"/>
<line x1="1439.8" y1="644.2" x2="1439.8" y2="652.6" stroke="#e0e0e0" stroke-width="1.4"/>
<text x="1226.7" y="204.8" font-size="20.5" fill="#d4d4d4" text-anchor="end">15</text>
<text x="1226.7" y="279.5" font-size="20.5" fill="#d4d4d4" text-anchor="end">10</text>
<text x="1226.7" y="354.2" font-size="20.5" fill="#d4d4d4" text-anchor="end">5</text>
<text x="1226.7" y="428.9" font-size="20.5" fill="#d4d4d4" text-anchor="end">0</text>
<text x="1226.7" y="503.6" font-size="20.5" fill="#d4d4d4" text-anchor="end">-5</text>
<text x="1226.7" y="578.3" font-size="20.5" fill="#d4d4d4" text-anchor="end">-10</text>
<text x="1226.7" y="653" font-size="20.5" fill="#d4d4d4" text-anchor="end">-15</text>
<text x="1284.5" y="190" font-size="20.5" fill="#d4d4d4" textLength="67.5" lengthAdjust="spacingAndGlyphs">Delta H</text>
<text x="1337.55" y="667" font-size="20.5" fill="#d4d4d4" text-anchor="middle" textLength="53.5" lengthAdjust="spacingAndGlyphs">100W</text>
<line x1="1255.6" y1="422.1" x2="1418.8" y2="422.1" stroke="#000" stroke-width="2"/>
<rect x="630.8" y="690.8" width="836.7" height="230.6" fill="#000000"/>
<rect x="656.2" y="701.4" width="87.6" height="186.9" fill="#c0bfbf"/>
<rect x="656.2" y="795" width="87.6" height="93.3" fill="#c0c0c0"/>
<rect x="657" y="702.2" width="86" height="185.3" fill="none" stroke="#e4e4e4" stroke-width="1.6"/>
<text x="700" y="910.3" font-size="18.5" fill="#ffffff" text-anchor="middle">White</text>
<rect x="758.37" y="701.4" width="87.6" height="186.9" fill="#c00000"/>
<rect x="758.37" y="795" width="87.6" height="93.3" fill="#e01010"/>
<rect x="759.17" y="702.2" width="86" height="185.3" fill="none" stroke="#e4e4e4" stroke-width="1.6"/>
<text x="802.17" y="910.3" font-size="18.5" fill="#ffffff" text-anchor="middle">Red</text>
<rect x="860.54" y="701.4" width="87.6" height="186.9" fill="#66ccb3"/>
<rect x="860.54" y="795" width="87.6" height="93.3" fill="#00cc66"/>
<rect x="861.34" y="702.2" width="86" height="185.3" fill="none" stroke="#e4e4e4" stroke-width="1.6"/>
<text x="904.34" y="910.3" font-size="18.5" fill="#ffffff" text-anchor="middle">Green</text>
<rect x="962.71" y="701.4" width="87.6" height="186.9" fill="#0010c0"/>
<rect x="962.71" y="795" width="87.6" height="93.3" fill="#1810c0"/>
<rect x="963.51" y="702.2" width="86" height="185.3" fill="none" stroke="#e4e4e4" stroke-width="1.6"/>
<text x="1006.51" y="910.3" font-size="18.5" fill="#ffffff" text-anchor="middle">Blue</text>
<rect x="1064.88" y="701.4" width="87.6" height="186.9" fill="#99c8c3"/>
<rect x="1064.88" y="795" width="87.6" height="93.3" fill="#00cccc"/>
<rect x="1065.68" y="702.2" width="86" height="185.3" fill="none" stroke="#e4e4e4" stroke-width="1.6"/>
<text x="1108.68" y="910.3" font-size="18.5" fill="#ffffff" text-anchor="middle">Cyan</text>
<rect x="1167.05" y="701.4" width="87.6" height="186.9" fill="#c000c0"/>
<rect x="1167.05" y="795" width="87.6" height="93.3" fill="#e010c0"/>
<rect x="1167.85" y="702.2" width="86" height="185.3" fill="none" stroke="#e4e4e4" stroke-width="1.6"/>
<text x="1210.85" y="910.3" font-size="18.5" fill="#ffffff" text-anchor="middle">Magenta</text>
<rect x="1269.22" y="701.4" width="87.6" height="186.9" fill="#c8c430"/>
<rect x="1269.22" y="795" width="87.6" height="93.3" fill="#c4c400"/>
<rect x="1270.02" y="702.2" width="86" height="185.3" fill="none" stroke="#e4e4e4" stroke-width="1.6"/>
<text x="1313.02" y="910.3" font-size="18.5" fill="#ffffff" text-anchor="middle">Yellow</text>
<rect x="1371.39" y="701.4" width="87.6" height="186.9" fill="#ffffff"/>
<rect x="1371.39" y="795" width="87.6" height="93.3" fill="#ffffff"/>
<rect x="1372.19" y="702.2" width="86" height="185.3" fill="none" stroke="#e4e4e4" stroke-width="1.6"/>
<text x="1415.19" y="910.3" font-size="18.5" fill="#ffffff" text-anchor="middle">100W</text>
<text transform="translate(649.5 767.5) rotate(-90)" font-size="18.5" fill="#fff" textLength="49.5" lengthAdjust="spacingAndGlyphs">Actual</text>
<text transform="translate(649.5 872) rotate(-90)" font-size="18.5" fill="#fff" textLength="48.5" lengthAdjust="spacingAndGlyphs">Target</text>
<text x="1914.4" y="187.5" font-size="20.5" fill="#d4d4d4" textLength="106.5" lengthAdjust="spacingAndGlyphs">CIE 1931 xy</text>
<path d="M1712.9 885.5L1712.8 885.4L1712.6 885.3L1712.4 885.2L1712.2 885.1L1712.0 884.9L1711.8 884.8L1711.6 884.6L1711.3 884.5L1711.1 884.3L1710.8 884.2L1710.5 884.0L1710.2 883.8L1709.9 883.6L1709.6 883.4L1709.3 883.2L1709.0 883.0L1708.7 882.7L1708.3 882.5L1708.0 882.2L1707.6 882.0L1707.3 881.7L1706.9 881.5L1706.5 881.2L1706.1 880.9L1705.7 880.7L1705.2 880.4L1704.8 880.1L1704.3 879.8L1703.8 879.4L1703.3 879.1L1702.8 878.7L1702.2 878.4L1701.6 878.0L1701.0 877.6L1700.4 877.2L1699.7 876.7L1699.1 876.3L1698.4 875.9L1697.7 875.4L1697.0 874.9L1696.3 874.4L1695.5 873.9L1694.7 873.4L1694.0 872.9L1693.1 872.3L1692.3 871.7L1691.4 871.1L1690.5 870.4L1689.6 869.8L1688.7 869.0L1687.7 868.3L1686.7 867.5L1685.7 866.7L1684.7 865.9L1683.6 865.1L1682.5 864.2L1681.5 863.2L1680.3 862.3L1679.2 861.2L1678.0 860.0L1676.7 858.8L1675.4 857.5L1674.0 856.0L1672.6 854.5L1671.1 852.8L1669.6 851.0L1668.0 849.1L1666.4 847.1L1664.7 845.0L1663.0 842.7L1661.2 840.3L1659.3 837.7L1657.5 835.0L1655.5 832.1L1653.5 829.0L1651.5 825.8L1649.3 822.3L1647.2 818.7L1644.9 814.8L1642.6 810.7L1640.3 806.3L1637.8 801.7L1635.3 796.9L1632.7 791.8L1630.0 786.4L1627.2 780.7L1624.3 774.8L1621.4 768.5L1618.4 762.0L1615.3 755.1L1612.1 748.0L1609.0 740.5L1605.8 732.6L1602.6 724.4L1599.4 715.9L1596.2 707.0L1593.0 697.8L1589.8 688.2L1586.7 678.3L1583.5 668.0L1580.3 657.4L1577.2 646.4L1574.0 635.1L1570.9 623.5L1567.8 611.6L1564.8 599.5L1561.8 587.1L1558.9 574.6L1556.0 561.9L1553.3 549.0L1550.7 536.1L1548.3 523.0L1545.9 510.0L1543.7 496.9L1541.7 483.8L1539.8 470.8L1538.2 457.9L1536.6 445.0L1535.3 432.3L1534.2 419.8L1533.3 407.4L1532.5 395.3L1532.0 383.3L1531.8 371.5L1531.7 360.0L1532.0 348.7L1532.4 337.7L1533.1 327.0L1534.1 316.5L1535.3 306.4L1536.8 296.7L1538.5 287.3L1540.6 278.3L1542.9 269.8L1545.4 261.7L1548.2 254.0L1551.3 246.9L1554.7 240.2L1558.2 234.0L1562.0 228.3L1565.9 223.2L1570.1 218.7L1574.4 214.6L1579.0 211.2L1583.6 208.2L1588.4 205.8L1593.3 203.8L1598.4 202.3L1603.5 201.3L1608.7 200.6L1614.0 200.4L1619.3 200.5L1624.7 200.9L1630.1 201.6L1635.6 202.6L1641.1 203.9L1646.6 205.3L1652.2 206.9L1657.7 208.7L1663.3 210.5L1668.9 212.5L1674.4 214.6L1680.0 216.8L1685.5 219.0L1690.9 221.3L1696.3 223.7L1701.7 226.1L1707.0 228.5L1712.2 231.0L1717.5 233.5L1722.6 236.0L1727.8 238.6L1732.9 241.2L1738.0 243.8L1743.0 246.5L1748.1 249.2L1753.1 252.0L1758.1 254.8L1763.1 257.6L1768.0 260.5L1773.0 263.4L1778.0 266.4L1782.9 269.4L1787.9 272.4L1792.8 275.5L1797.7 278.6L1802.7 281.7L1807.6 284.8L1812.5 288.0L1817.4 291.2L1822.3 294.4L1827.2 297.7L1832.1 301.0L1837.0 304.3L1841.8 307.6L1846.7 310.9L1851.6 314.3L1856.4 317.7L1861.3 321.1L1866.2 324.5L1871.0 327.9L1875.9 331.4L1880.8 334.8L1885.6 338.3L1890.5 341.8L1895.4 345.3L1900.2 348.8L1905.1 352.4L1910.0 355.9L1914.9 359.5L1919.8 363.0L1924.6 366.6L1929.5 370.2L1934.4 373.8L1939.2 377.4L1944.1 381.0L1949.0 384.6L1953.8 388.2L1958.7 391.8L1963.5 395.4L1968.3 399.0L1973.2 402.7L1978.0 406.3L1982.9 409.9L1987.7 413.5L1992.5 417.1L1997.4 420.7L2002.2 424.3L2007.0 427.9L2011.8 431.5L2016.5 435.1L2021.3 438.7L2026.1 442.3L2030.8 445.9L2035.5 449.4L2040.2 453.0L2044.9 456.6L2049.6 460.1L2054.3 463.6L2058.9 467.1L2063.5 470.6L2068.1 474.1L2072.7 477.6L2077.3 481.0L2081.8 484.5L2086.3 487.9L2090.8 491.3L2095.3 494.7L2099.7 498.0L2104.2 501.4L2108.5 504.7L2112.9 508.0L2117.2 511.3L2121.5 514.5L2125.8 517.7L2130.0 520.9L2134.2 524.1L2138.4 527.2L2142.5 530.4L2146.6 533.4L2150.7 536.5L2154.7 539.5L2158.6 542.5L2162.5 545.5L2166.4 548.4L2170.2 551.3L2174.0 554.2L2177.7 557.0L2181.3 559.7L2184.9 562.4L2188.4 565.1L2191.8 567.7L2195.1 570.2L2198.4 572.7L2201.7 575.2L2204.9 577.6L2208.0 579.9L2211.1 582.3L2214.2 584.6L2217.2 586.9L2220.2 589.1L2223.1 591.4L2226.0 593.5L2228.8 595.7L2231.6 597.7L2234.2 599.8L2236.9 601.7L2239.4 603.6L2241.9 605.5L2244.3 607.3L2246.7 609.1L2249.0 610.8L2251.2 612.5L2253.4 614.1L2255.6 615.8L2257.6 617.3L2259.7 618.9L2261.6 620.4L2263.6 621.8L2265.4 623.3L2267.2 624.6L2269.0 626.0L2270.7 627.3L2272.4 628.6L2274.0 629.8L2275.6 631.0L2277.1 632.1L2278.6 633.3L2280.0 634.4L2281.4 635.4L2282.8 636.4L2284.1 637.4L2285.4 638.4L2286.7 639.3L2287.9 640.3L2289.1 641.2L2290.2 642.0L2291.4 642.9L2292.4 643.7L2293.5 644.5L2294.5 645.3L2295.5 646.0L2296.5 646.8L2297.5 647.5L2298.4 648.2L2299.3 648.9L2300.2 649.6L2301.1 650.2L2301.9 650.9L2302.8 651.5L2303.6 652.2L2304.4 652.8L2305.2 653.4L2306.0 653.9L2306.7 654.5L2307.4 655.1L2308.1 655.6L2308.8 656.1L2309.5 656.6L2310.2 657.1L2310.8 657.6L2311.4 658.1L2312.0 658.5L2312.6 659.0L2313.2 659.4L2313.7 659.8L2314.3 660.2L2314.8 660.6L2315.3 661.0L2315.8 661.3L2316.2 661.7L2316.7 662.0L2317.1 662.3L2317.5 662.6L2317.9 662.9L2318.3 663.2L2318.7 663.5L2319.0 663.8L2319.4 664.1L2319.7 664.3L2320.1 664.6L2320.4 664.8L2320.7 665.0L2321.0 665.3L2321.3 665.5L2321.5 665.7L2321.8 665.9L2322.1 666.1L2322.3 666.3L2322.6 666.5L2322.8 666.6L2323.0 666.8L2323.2 667.0L2323.4 667.1L2323.6 667.2L2323.6 667.3L2323.6 670.0ZM2225.3 617.5L1756.6 303.0L1691.2 840.9Z" fill="#000" fill-opacity="0.4" fill-rule="evenodd"/>
<rect x="1527.7" y="194.9" width="916.8" height="695.6" fill="none" stroke="#9a9a9a" stroke-width="1.8"/>
<line x1="1527.7" y1="890.5" x2="1527.7" y2="898.5" stroke="#e4e4e4" stroke-width="1.6"/>
<line x1="1519.7" y1="890.5" x2="1527.7" y2="890.5" stroke="#e4e4e4" stroke-width="1.6"/>
<text x="1526.7" y="920" font-size="20.5" fill="#d4d4d4" text-anchor="middle">0</text>
<text x="1519.1" y="898.9" font-size="20.5" fill="#d4d4d4" text-anchor="end">0</text>
<line x1="1636.7" y1="890.5" x2="1636.7" y2="898.5" stroke="#e4e4e4" stroke-width="1.6"/>
<line x1="1519.7" y1="807.76" x2="1527.7" y2="807.76" stroke="#e4e4e4" stroke-width="1.6"/>
<text x="1635.7" y="920" font-size="20.5" fill="#d4d4d4" text-anchor="middle">0,1</text>
<text x="1519.1" y="816.16" font-size="20.5" fill="#d4d4d4" text-anchor="end">0,1</text>
<line x1="1745.7" y1="890.5" x2="1745.7" y2="898.5" stroke="#e4e4e4" stroke-width="1.6"/>
<line x1="1519.7" y1="725.02" x2="1527.7" y2="725.02" stroke="#e4e4e4" stroke-width="1.6"/>
<text x="1744.7" y="920" font-size="20.5" fill="#d4d4d4" text-anchor="middle">0,2</text>
<text x="1519.1" y="733.42" font-size="20.5" fill="#d4d4d4" text-anchor="end">0,2</text>
<line x1="1854.7" y1="890.5" x2="1854.7" y2="898.5" stroke="#e4e4e4" stroke-width="1.6"/>
<line x1="1519.7" y1="642.28" x2="1527.7" y2="642.28" stroke="#e4e4e4" stroke-width="1.6"/>
<text x="1853.7" y="920" font-size="20.5" fill="#d4d4d4" text-anchor="middle">0,3</text>
<text x="1519.1" y="650.68" font-size="20.5" fill="#d4d4d4" text-anchor="end">0,3</text>
<line x1="1963.7" y1="890.5" x2="1963.7" y2="898.5" stroke="#e4e4e4" stroke-width="1.6"/>
<line x1="1519.7" y1="559.54" x2="1527.7" y2="559.54" stroke="#e4e4e4" stroke-width="1.6"/>
<text x="1962.7" y="920" font-size="20.5" fill="#d4d4d4" text-anchor="middle">0,4</text>
<text x="1519.1" y="567.94" font-size="20.5" fill="#d4d4d4" text-anchor="end">0,4</text>
<line x1="2072.7" y1="890.5" x2="2072.7" y2="898.5" stroke="#e4e4e4" stroke-width="1.6"/>
<line x1="1519.7" y1="476.8" x2="1527.7" y2="476.8" stroke="#e4e4e4" stroke-width="1.6"/>
<text x="2071.7" y="920" font-size="20.5" fill="#d4d4d4" text-anchor="middle">0,5</text>
<text x="1519.1" y="485.2" font-size="20.5" fill="#d4d4d4" text-anchor="end">0,5</text>
<line x1="2181.7" y1="890.5" x2="2181.7" y2="898.5" stroke="#e4e4e4" stroke-width="1.6"/>
<line x1="1519.7" y1="394.06" x2="1527.7" y2="394.06" stroke="#e4e4e4" stroke-width="1.6"/>
<text x="2180.7" y="920" font-size="20.5" fill="#d4d4d4" text-anchor="middle">0,6</text>
<text x="1519.1" y="402.46" font-size="20.5" fill="#d4d4d4" text-anchor="end">0,6</text>
<line x1="2290.7" y1="890.5" x2="2290.7" y2="898.5" stroke="#e4e4e4" stroke-width="1.6"/>
<line x1="1519.7" y1="311.32" x2="1527.7" y2="311.32" stroke="#e4e4e4" stroke-width="1.6"/>
<text x="2289.7" y="920" font-size="20.5" fill="#d4d4d4" text-anchor="middle">0,7</text>
<text x="1519.1" y="319.72" font-size="20.5" fill="#d4d4d4" text-anchor="end">0,7</text>
<line x1="2399.7" y1="890.5" x2="2399.7" y2="898.5" stroke="#e4e4e4" stroke-width="1.6"/>
<line x1="1519.7" y1="228.58" x2="1527.7" y2="228.58" stroke="#e4e4e4" stroke-width="1.6"/>
<text x="2398.7" y="920" font-size="20.5" fill="#d4d4d4" text-anchor="middle">0,8</text>
<text x="1519.1" y="236.98" font-size="20.5" fill="#d4d4d4" text-anchor="end">0,8</text>
<circle cx="1686.5" cy="841.9" r="6.1" fill="#0000d8" stroke="#111" stroke-width="1.6"/>
<rect x="2215.1" y="606.2" width="19.6" height="19.6" fill="none" stroke="#fff" stroke-width="2"/>
<rect x="1746.2" y="291.2" width="19.6" height="19.6" fill="none" stroke="#fff" stroke-width="2"/>
<rect x="1680.8" y="830.1" width="19.6" height="19.6" fill="none" stroke="#fff" stroke-width="2"/>
<rect x="1707.8" y="607.4" width="19.6" height="19.6" fill="none" stroke="#fff" stroke-width="2"/>
<rect x="1904.1" y="736.5" width="19.6" height="19.6" fill="none" stroke="#fff" stroke-width="2"/>
<rect x="1982.9" y="450.3" width="19.6" height="19.6" fill="none" stroke="#fff" stroke-width="2"/>
<rect x="1858.2" y="607.1" width="19.6" height="19.6" fill="none" stroke="#000" stroke-width="2"/>
<circle cx="2237.3" cy="615.1" r="6.1" fill="#c80000" stroke="#111" stroke-width="1.6"/>
<circle cx="1852.9" cy="388.4" r="6.1" fill="#18a818" stroke="#111" stroke-width="1.6"/>
<circle cx="1768.2" cy="619.4" r="6.1" fill="#18c0b8" stroke="#111" stroke-width="1.6"/>
<circle cx="1878.9" cy="762.6" r="6.1" fill="#cc10cc" stroke="#111" stroke-width="1.6"/>
<circle cx="1988.3" cy="471.3" r="6.1" fill="#b8b020" stroke="#111" stroke-width="1.6"/>
<circle cx="1868.7" cy="618.4" r="6.1" fill="#ffffff" stroke="#111" stroke-width="1.6"/>
<path d="M2120.5 209H2125V466.1H2431V470.3H2120.5Z" fill="#303030"/>
<rect x="2126" y="205" width="308" height="260" fill="none" stroke="#929292" stroke-width="2.1"/>
<rect x="2268.5" y="324.5" width="19" height="19" fill="none" stroke="#000" stroke-width="2.2"/>
<circle cx="2284.6" cy="343.6" r="6" fill="#d8d8d8" stroke="#111" stroke-width="1.4"/>
<circle cx="2281.8" cy="345.4" r="6" fill="#ffffff" stroke="#111" stroke-width="1.4"/>
<rect x="2083.3" y="845.4" width="355.7" height="37.3" fill="#2d2d2d"/>
<text x="2084.5" y="874.8" font-size="28.5" fill="#f4f4f4" textLength="312" lengthAdjust="spacingAndGlyphs" xml:space="preserve">Gamut Coverage:  75,9%</text>
<text x="121.5" y="1024" font-size="41.5" fill="#f2f2f2" textLength="309.5" lengthAdjust="spacingAndGlyphs">Current Reading</text>
<text x="121.5" y="1083.6" font-size="33" fill="#f2f2f2" textLength="124.7" lengthAdjust="spacingAndGlyphs">x: 0,313</text>
<text x="121.5" y="1141.4" font-size="33" fill="#f2f2f2" textLength="145.5" lengthAdjust="spacingAndGlyphs">y: 0,3269</text>
<text x="121.5" y="1198.5" font-size="33" fill="#f2f2f2" textLength="155.4" lengthAdjust="spacingAndGlyphs">fL: 173,65</text>
<text x="121.5" y="1256.3" font-size="33" fill="#f2f2f2" textLength="225" lengthAdjust="spacingAndGlyphs">cd/m²: 594,98</text>
<text x="702.4" y="988" font-size="20.5" fill="#d4d4d4" textLength="117" lengthAdjust="spacingAndGlyphs">RGB Balance</text>
<rect x="604.8" y="995.2" width="354" height="254.3" fill="#232323"/>
<line x1="596.8" y1="1225.9" x2="958.8" y2="1225.9" stroke="#9a9a9a" stroke-width="1.5"/>
<text x="595.3" y="1232.9" font-size="20.5" fill="#d4d4d4" text-anchor="end">96</text>
<line x1="596.8" y1="1175" x2="958.8" y2="1175" stroke="#9a9a9a" stroke-width="1.5"/>
<text x="595.3" y="1182" font-size="20.5" fill="#d4d4d4" text-anchor="end">98</text>
<line x1="596.8" y1="1124.1" x2="958.8" y2="1124.1" stroke="#9a9a9a" stroke-width="1.5"/>
<text x="595.3" y="1131.1" font-size="20.5" fill="#d4d4d4" text-anchor="end">100</text>
<line x1="596.8" y1="1073.2" x2="958.8" y2="1073.2" stroke="#9a9a9a" stroke-width="1.5"/>
<text x="595.3" y="1080.2" font-size="20.5" fill="#d4d4d4" text-anchor="end">102</text>
<line x1="596.8" y1="1022.3" x2="958.8" y2="1022.3" stroke="#9a9a9a" stroke-width="1.5"/>
<text x="595.3" y="1029.3" font-size="20.5" fill="#d4d4d4" text-anchor="end">104</text>
<rect x="604.8" y="995.2" width="354" height="254.3" fill="none" stroke="#9a9a9a" stroke-width="1.7"/>
<line x1="604.8" y1="1249.5" x2="604.8" y2="1257.5" stroke="#9a9a9a" stroke-width="1.5"/>
<line x1="958.8" y1="1249.5" x2="958.8" y2="1257.5" stroke="#9a9a9a" stroke-width="1.5"/>
<rect x="640.8" y="1115.2" width="90.7" height="133.9" fill="url(#g31)" stroke="#000" stroke-width="2"/>
<rect x="735" y="1130.8" width="91.5" height="118.3" fill="url(#g32)" stroke="#000" stroke-width="2"/>
<rect x="829.2" y="1111" width="91.8" height="138.1" fill="url(#g33)" stroke="#000" stroke-width="2"/>
<line x1="604.8" y1="1249.5" x2="958.8" y2="1249.5" stroke="#9a9a9a" stroke-width="1.7"/>
<text x="781.8" y="1272.6" font-size="20.5" fill="#d4d4d4" text-anchor="middle" textLength="54" lengthAdjust="spacingAndGlyphs">100W</text>
<rect x="987" y="960" width="988" height="313.5" fill="#000000"/>
<rect x="989.3" y="962.9" width="983.4" height="27.4" fill="url(#g34)"/>
<rect x="989.3" y="990.3" width="983.4" height="27.5" fill="url(#g35)"/>
<rect x="989.3" y="1017.8" width="983.4" height="50.7" fill="url(#g36)"/>
<rect x="989.3" y="1068.5" width="983.4" height="51.4" fill="url(#g37)"/>
<rect x="989.3" y="1119.9" width="983.4" height="50.8" fill="url(#g38)"/>
<rect x="989.3" y="1170.7" width="983.4" height="51.8" fill="url(#g39)"/>
<rect x="989.3" y="1222.5" width="983.4" height="51" fill="url(#g40)"/>
<text x="1175" y="1001.7" font-size="28.5" fill="#f4f4f4" text-anchor="middle" textLength="59.2" lengthAdjust="spacingAndGlyphs">White</text>
<text x="1278.5" y="1001.7" font-size="28.5" fill="#f4f4f4" text-anchor="middle" textLength="37" lengthAdjust="spacingAndGlyphs">Red</text>
<text x="1382" y="1001.7" font-size="28.5" fill="#f4f4f4" text-anchor="middle" textLength="60" lengthAdjust="spacingAndGlyphs">Green</text>
<text x="1485" y="1001.7" font-size="28.5" fill="#f4f4f4" text-anchor="middle" textLength="43.2" lengthAdjust="spacingAndGlyphs">Blue</text>
<text x="1588" y="1001.7" font-size="28.5" fill="#f4f4f4" text-anchor="middle" textLength="48" lengthAdjust="spacingAndGlyphs">Cyan</text>
<text x="1698" y="1001.7" font-size="28.5" fill="#f4f4f4" text-anchor="middle" textLength="87.4" lengthAdjust="spacingAndGlyphs">Magenta</text>
<text x="1808" y="1001.7" font-size="28.5" fill="#f4f4f4" text-anchor="middle" textLength="62.6" lengthAdjust="spacingAndGlyphs">Yellow</text>
<text x="1918" y="1001.7" font-size="28.5" fill="#f4f4f4" text-anchor="middle" textLength="56.7" lengthAdjust="spacingAndGlyphs">100W</text>
<text x="1007" y="1055.6" font-size="32" fill="#f4f4f4" font-weight="bold" textLength="90" lengthAdjust="spacingAndGlyphs">x: CIE31</text>
<text x="1126.7" y="1055.6" font-size="31.5" fill="#ececec" textLength="69.95" lengthAdjust="spacingAndGlyphs" stroke="#ececec" stroke-width="0.35">0,3134</text>
<text x="1236.7" y="1055.6" font-size="31.5" fill="#ececec" textLength="69.95" lengthAdjust="spacingAndGlyphs" stroke="#ececec" stroke-width="0.35">0,6514</text>
<text x="1333.7" y="1055.6" font-size="31.5" fill="#ececec" textLength="69.95" lengthAdjust="spacingAndGlyphs" stroke="#ececec" stroke-width="0.35">0,2989</text>
<text x="1443.7" y="1055.6" font-size="31.5" fill="#ececec" textLength="69.95" lengthAdjust="spacingAndGlyphs" stroke="#ececec" stroke-width="0.35">0,1463</text>
<text x="1539.7" y="1055.6" font-size="31.5" fill="#ececec" textLength="69.95" lengthAdjust="spacingAndGlyphs" stroke="#ececec" stroke-width="0.35">0,2212</text>
<text x="1649.7" y="1055.6" font-size="31.5" fill="#ececec" textLength="69.95" lengthAdjust="spacingAndGlyphs" stroke="#ececec" stroke-width="0.35">0,3227</text>
<text x="1759.7" y="1055.6" font-size="31.5" fill="#ececec" textLength="69.95" lengthAdjust="spacingAndGlyphs" stroke="#ececec" stroke-width="0.35">0,4231</text>
<text x="1869.7" y="1055.6" font-size="31.5" fill="#ececec" textLength="69.95" lengthAdjust="spacingAndGlyphs" stroke="#ececec" stroke-width="0.35">0,3130</text>
<text x="1007" y="1106.3" font-size="32" fill="#f4f4f4" font-weight="bold" textLength="90" lengthAdjust="spacingAndGlyphs">y: CIE31</text>
<text x="1126.7" y="1106.3" font-size="31.5" fill="#ececec" textLength="69.95" lengthAdjust="spacingAndGlyphs" stroke="#ececec" stroke-width="0.35">0,3272</text>
<text x="1236.7" y="1106.3" font-size="31.5" fill="#ececec" textLength="69.95" lengthAdjust="spacingAndGlyphs" stroke="#ececec" stroke-width="0.35">0,3311</text>
<text x="1333.7" y="1106.3" font-size="31.5" fill="#ececec" textLength="69.95" lengthAdjust="spacingAndGlyphs" stroke="#ececec" stroke-width="0.35">0,6046</text>
<text x="1443.7" y="1106.3" font-size="31.5" fill="#ececec" textLength="69.95" lengthAdjust="spacingAndGlyphs" stroke="#ececec" stroke-width="0.35">0,0575</text>
<text x="1539.7" y="1106.3" font-size="31.5" fill="#ececec" textLength="69.95" lengthAdjust="spacingAndGlyphs" stroke="#ececec" stroke-width="0.35">0,3259</text>
<text x="1649.7" y="1106.3" font-size="31.5" fill="#ececec" textLength="69.95" lengthAdjust="spacingAndGlyphs" stroke="#ececec" stroke-width="0.35">0,1532</text>
<text x="1759.7" y="1106.3" font-size="31.5" fill="#ececec" textLength="69.95" lengthAdjust="spacingAndGlyphs" stroke="#ececec" stroke-width="0.35">0,5046</text>
<text x="1869.7" y="1106.3" font-size="31.5" fill="#ececec" textLength="69.95" lengthAdjust="spacingAndGlyphs" stroke="#ececec" stroke-width="0.35">0,3269</text>
<text x="1007" y="1157.7" font-size="32" fill="#f4f4f4" font-weight="bold" textLength="14" lengthAdjust="spacingAndGlyphs">Y</text>
<text x="1126.7" y="1157.7" font-size="31.5" fill="#ececec" textLength="95.85" lengthAdjust="spacingAndGlyphs" stroke="#ececec" stroke-width="0.35">311,3343</text>
<text x="1236.7" y="1157.7" font-size="31.5" fill="#ececec" textLength="82.9" lengthAdjust="spacingAndGlyphs" stroke="#ececec" stroke-width="0.35">67,1700</text>
<text x="1333.7" y="1157.7" font-size="31.5" fill="#ececec" textLength="95.85" lengthAdjust="spacingAndGlyphs" stroke="#ececec" stroke-width="0.35">220,5944</text>
<text x="1443.7" y="1157.7" font-size="31.5" fill="#ececec" textLength="82.9" lengthAdjust="spacingAndGlyphs" stroke="#ececec" stroke-width="0.35">21,4944</text>
<text x="1539.7" y="1157.7" font-size="31.5" fill="#ececec" textLength="95.85" lengthAdjust="spacingAndGlyphs" stroke="#ececec" stroke-width="0.35">241,7894</text>
<text x="1649.7" y="1157.7" font-size="31.5" fill="#ececec" textLength="82.9" lengthAdjust="spacingAndGlyphs" stroke="#ececec" stroke-width="0.35">88,8762</text>
<text x="1759.7" y="1157.7" font-size="31.5" fill="#ececec" textLength="95.85" lengthAdjust="spacingAndGlyphs" stroke="#ececec" stroke-width="0.35">289,9593</text>
<text x="1869.7" y="1157.7" font-size="31.5" fill="#ececec" textLength="95.85" lengthAdjust="spacingAndGlyphs" stroke="#ececec" stroke-width="0.35">594,9753</text>
<text x="1007" y="1208.5" font-size="32" fill="#f4f4f4" font-weight="bold" textLength="94" lengthAdjust="spacingAndGlyphs">Target Y</text>
<text x="1126.7" y="1208.5" font-size="31.5" fill="#ececec" textLength="95.85" lengthAdjust="spacingAndGlyphs" stroke="#ececec" stroke-width="0.35">315,1244</text>
<text x="1236.7" y="1208.5" font-size="31.5" fill="#ececec" textLength="82.9" lengthAdjust="spacingAndGlyphs" stroke="#ececec" stroke-width="0.35">93,7056</text>
<text x="1333.7" y="1208.5" font-size="31.5" fill="#ececec" textLength="95.85" lengthAdjust="spacingAndGlyphs" stroke="#ececec" stroke-width="0.35">197,6947</text>
<text x="1443.7" y="1208.5" font-size="31.5" fill="#ececec" textLength="82.9" lengthAdjust="spacingAndGlyphs" stroke="#ececec" stroke-width="0.35">23,7240</text>
<text x="1539.7" y="1208.5" font-size="31.5" fill="#ececec" textLength="95.85" lengthAdjust="spacingAndGlyphs" stroke="#ececec" stroke-width="0.35">221,4188</text>
<text x="1649.7" y="1208.5" font-size="31.5" fill="#ececec" textLength="95.85" lengthAdjust="spacingAndGlyphs" stroke="#ececec" stroke-width="0.35">117,4297</text>
<text x="1759.7" y="1208.5" font-size="31.5" fill="#ececec" textLength="95.85" lengthAdjust="spacingAndGlyphs" stroke="#ececec" stroke-width="0.35">291,4003</text>
<text x="1869.7" y="1208.5" font-size="31.5" fill="#ececec" textLength="95.85" lengthAdjust="spacingAndGlyphs" stroke="#ececec" stroke-width="0.35">594,9753</text>
<text x="1007" y="1260.3" font-size="32" fill="#f4f4f4" font-weight="bold" textLength="93" lengthAdjust="spacingAndGlyphs">ΔE 2000</text>
<text x="1126.7" y="1260.3" font-size="31.5" fill="#ececec" textLength="69.95" lengthAdjust="spacingAndGlyphs" stroke="#ececec" stroke-width="0.35">1,5855</text>
<text x="1236.7" y="1260.3" font-size="31.5" fill="#ececec" textLength="69.95" lengthAdjust="spacingAndGlyphs" stroke="#ececec" stroke-width="0.35">6,4559</text>
<text x="1333.7" y="1260.3" font-size="31.5" fill="#ececec" textLength="69.95" lengthAdjust="spacingAndGlyphs" stroke="#ececec" stroke-width="0.35">8,8462</text>
<text x="1443.7" y="1260.3" font-size="31.5" fill="#ececec" textLength="69.95" lengthAdjust="spacingAndGlyphs" stroke="#ececec" stroke-width="0.35">0,9414</text>
<text x="1539.7" y="1260.3" font-size="31.5" fill="#ececec" textLength="69.95" lengthAdjust="spacingAndGlyphs" stroke="#ececec" stroke-width="0.35">7,5156</text>
<text x="1649.7" y="1260.3" font-size="31.5" fill="#ececec" textLength="69.95" lengthAdjust="spacingAndGlyphs" stroke="#ececec" stroke-width="0.35">6,7060</text>
<text x="1759.7" y="1260.3" font-size="31.5" fill="#ececec" textLength="69.95" lengthAdjust="spacingAndGlyphs" stroke="#ececec" stroke-width="0.35">1,7346</text>
<text x="1869.7" y="1260.3" font-size="31.5" fill="#ececec" textLength="69.95" lengthAdjust="spacingAndGlyphs" stroke="#ececec" stroke-width="0.35">1,9251</text>
<rect x="0" y="1286.6" width="2076" height="93.4" fill="url(#g41)"/>
<path d="M2 1380V1292Q2 1287 7 1287H221.6Q226.6 1287 226.6 1292V1380Z" fill="url(#g42)"/>
<rect x="9.8" y="1294.7" width="209.2" height="53.8" rx="5.5" fill="#c0c0c0"/>
<rect x="10.5" y="1295.4" width="207.8" height="52.4" rx="5" fill="none" stroke="#d8d8d8" stroke-width="1.4"/>
<text x="114.3" y="1371.3" font-size="15.5" fill="#2a2a2a" text-anchor="middle" font-weight="bold">White</text>
<path d="M230.05 1380V1292Q230.05 1287 235.05 1287H449.65Q454.65 1287 454.65 1292V1380Z" fill="url(#g43)"/>
<rect x="237.85" y="1294.7" width="209.2" height="53.8" rx="5.5" fill="#c00000"/>
<text x="342.35" y="1371.3" font-size="15.5" fill="#2a2a2a" text-anchor="middle" font-weight="bold">Red</text>
<path d="M458.1 1380V1292Q458.1 1287 463.1 1287H677.7Q682.7 1287 682.7 1292V1380Z" fill="url(#g44)"/>
<rect x="465.9" y="1294.7" width="209.2" height="53.8" rx="5.5" fill="#00c000"/>
<text x="570.4" y="1371.3" font-size="15.5" fill="#2a2a2a" text-anchor="middle" font-weight="bold">Green</text>
<path d="M686.15 1380V1292Q686.15 1287 691.15 1287H905.75Q910.75 1287 910.75 1292V1380Z" fill="url(#g45)"/>
<rect x="693.95" y="1294.7" width="209.2" height="53.8" rx="5.5" fill="#0000c0"/>
<text x="798.45" y="1371.3" font-size="15.5" fill="#2a2a2a" text-anchor="middle" font-weight="bold">Blue</text>
<path d="M914.2 1380V1292Q914.2 1287 919.2 1287H1133.8Q1138.8 1287 1138.8 1292V1380Z" fill="url(#g46)"/>
<rect x="922" y="1294.7" width="209.2" height="53.8" rx="5.5" fill="#00c0c0"/>
<text x="1026.5" y="1371.3" font-size="15.5" fill="#2a2a2a" text-anchor="middle" font-weight="bold">Cyan</text>
<path d="M1142.25 1380V1292Q1142.25 1287 1147.25 1287H1361.85Q1366.85 1287 1366.85 1292V1380Z" fill="url(#g47)"/>
<rect x="1150.05" y="1294.7" width="209.2" height="53.8" rx="5.5" fill="#c000c0"/>
<text x="1254.55" y="1371.3" font-size="15.5" fill="#2a2a2a" text-anchor="middle" font-weight="bold">Magenta</text>
<path d="M1370.3 1380V1292Q1370.3 1287 1375.3 1287H1589.9Q1594.9 1287 1594.9 1292V1380Z" fill="url(#g48)"/>
<rect x="1378.1" y="1294.7" width="209.2" height="53.8" rx="5.5" fill="#c4c400"/>
<text x="1482.6" y="1371.3" font-size="15.5" fill="#2a2a2a" text-anchor="middle" font-weight="bold">Yellow</text>
<path d="M1598.35 1380V1292Q1598.35 1287 1603.35 1287H1817.95Q1822.95 1287 1822.95 1292V1380Z" fill="url(#g49)"/>
<rect x="1606.15" y="1294.7" width="209.2" height="53.8" rx="5.5" fill="#ffffff"/>
<text x="1710.65" y="1371.3" font-size="15.5" fill="#ffffff" text-anchor="middle" font-weight="bold">100W</text>
<path d="M2075.3 1314.4V1293Q2075.3 1287 2081.3 1287H2141.8Q2147.8 1287 2147.8 1293V1314.4Z" fill="url(#g50)"/>
<rect x="2075.3" y="1315.6" width="72.5" height="64.4" fill="url(#g51)"/>
<line x1="2075.3" y1="1315" x2="2147.8" y2="1315" stroke="#3a3a3a" stroke-width="1.4"/>
<circle cx="2111.5" cy="1301.2" r="11.2" fill="url(#g52)"/>
<path d="M2111.5 1296.3L2118.2 1302.8H2104.8Z" fill="#3a3a3a"/>
<rect x="2089.8" y="1324.8" width="43.5" height="43" rx="5" fill="#a6a6a6" stroke="#282828" stroke-width="3.2"/>
<path d="M2091.4 1347.1H2131.7V1362.2Q2131.7 1366.2 2127.7 1366.2H2095.4Q2091.4 1366.2 2091.4 1362.2Z" fill="#888888"/>
<rect x="2101" y="1337.1" width="20.8" height="10" fill="#222222"/>
<rect x="2101" y="1347.1" width="20.8" height="10" fill="#000000"/>
<rect x="2148.9" y="1287" width="338.8" height="44.8" fill="url(#g53)"/>
<line x1="2218.4" y1="1287" x2="2218.4" y2="1331.8" stroke="#2e2e2e" stroke-width="1.6"/>
<line x1="2285.9" y1="1287" x2="2285.9" y2="1331.8" stroke="#2e2e2e" stroke-width="1.6"/>
<line x1="2353.3" y1="1287" x2="2353.3" y2="1331.8" stroke="#2e2e2e" stroke-width="1.6"/>
<line x1="2421" y1="1287" x2="2421" y2="1331.8" stroke="#2e2e2e" stroke-width="1.6"/>
<circle cx="2183.3" cy="1309.4" r="14.7" fill="url(#g52)"/>
<circle cx="2252.2" cy="1309.4" r="14.7" fill="url(#g52)"/>
<circle cx="2319.7" cy="1309.4" r="14.7" fill="url(#g52)"/>
<circle cx="2387.6" cy="1309.4" r="14.7" fill="url(#g52)"/>
<circle cx="2454.9" cy="1309.4" r="14.7" fill="url(#g52)"/>
<rect x="2177.5" y="1303.9" width="11.8" height="11.1" fill="#333333"/>
<path d="M2248.2 1303.4V1317.6L2260.4 1310.5Z" fill="#333"/>
<path d="M2316 1303.8H2312.6V1317H2316M2323.4 1303.8H2326.8V1317H2323.4" fill="none" stroke="#333" stroke-width="2"/>
<path d="M2316.6 1310H2318.8M2320.6 1310H2322.8" stroke="#333" stroke-width="2.2"/>
<path d="M2387.6 1309.4C2385.4 1306.4 2383.4 1305.6 2381.8 1305.6A3.8 3.8 0 0 0 2381.8 1313.2C2383.4 1313.2 2385.4 1312.4 2387.6 1309.4C2389.8 1306.4 2391.8 1305.6 2393.4 1305.6A3.8 3.8 0 0 1 2393.4 1313.2C2391.8 1313.2 2389.8 1312.4 2387.6 1309.4Z" fill="none" stroke="#333" stroke-width="2"/>
<path d="M2447.6 1308.2A7.4 7.4 0 0 1 2460.6 1305M2462.2 1310.8A7.4 7.4 0 0 1 2449.2 1314" fill="none" stroke="#333" stroke-width="2.4"/>
<path d="M2462.6 1301.4V1307.6H2456.4ZM2447.2 1317.6V1311.4H2453.4Z" fill="#333"/>
<g transform="translate(2522.4 1309.4)" fill="#000" fill-opacity="0.5"><path d="M-2.9 -1L-4.9 -18.6Q-4.9 -19.9 -3.6 -19.9H3.6Q4.9 -19.9 4.9 -18.6L2.9 -1Z" transform="rotate(0)"/><path d="M-2.9 -1L-4.9 -18.6Q-4.9 -19.9 -3.6 -19.9H3.6Q4.9 -19.9 4.9 -18.6L2.9 -1Z" transform="rotate(60)"/><path d="M-2.9 -1L-4.9 -18.6Q-4.9 -19.9 -3.6 -19.9H3.6Q4.9 -19.9 4.9 -18.6L2.9 -1Z" transform="rotate(120)"/><path d="M-2.9 -1L-4.9 -18.6Q-4.9 -19.9 -3.6 -19.9H3.6Q4.9 -19.9 4.9 -18.6L2.9 -1Z" transform="rotate(180)"/><path d="M-2.9 -1L-4.9 -18.6Q-4.9 -19.9 -3.6 -19.9H3.6Q4.9 -19.9 4.9 -18.6L2.9 -1Z" transform="rotate(240)"/><path d="M-2.9 -1L-4.9 -18.6Q-4.9 -19.9 -3.6 -19.9H3.6Q4.9 -19.9 4.9 -18.6L2.9 -1Z" transform="rotate(300)"/><circle r="4.4"/></g>
<g transform="translate(2521.1 1307.8)" fill="#ea0a0a"><path d="M-2.9 -1L-4.9 -18.6Q-4.9 -19.9 -3.6 -19.9H3.6Q4.9 -19.9 4.9 -18.6L2.9 -1Z" transform="rotate(0)"/><path d="M-2.9 -1L-4.9 -18.6Q-4.9 -19.9 -3.6 -19.9H3.6Q4.9 -19.9 4.9 -18.6L2.9 -1Z" transform="rotate(60)"/><path d="M-2.9 -1L-4.9 -18.6Q-4.9 -19.9 -3.6 -19.9H3.6Q4.9 -19.9 4.9 -18.6L2.9 -1Z" transform="rotate(120)"/><path d="M-2.9 -1L-4.9 -18.6Q-4.9 -19.9 -3.6 -19.9H3.6Q4.9 -19.9 4.9 -18.6L2.9 -1Z" transform="rotate(180)"/><path d="M-2.9 -1L-4.9 -18.6Q-4.9 -19.9 -3.6 -19.9H3.6Q4.9 -19.9 4.9 -18.6L2.9 -1Z" transform="rotate(240)"/><path d="M-2.9 -1L-4.9 -18.6Q-4.9 -19.9 -3.6 -19.9H3.6Q4.9 -19.9 4.9 -18.6L2.9 -1Z" transform="rotate(300)"/><circle r="4.4"/></g>
<path d="M2149 1380V1339Q2149 1333 2155 1333H2353.3V1380Z" fill="url(#g54)"/>
<rect x="2353.3" y="1333" width="194" height="47" fill="url(#g54)"/>
<line x1="2353.3" y1="1333" x2="2353.3" y2="1380" stroke="#2e2e2e" stroke-width="1.6"/>
<line x1="2149" y1="1332.4" x2="2547" y2="1332.4" stroke="#2e2e2e" stroke-width="1.2"/>
<circle cx="2195.1" cy="1356" r="14.7" fill="url(#g52)"/>
<circle cx="2515.2" cy="1356" r="14.7" fill="url(#g52)"/>
<path d="M2193.6 1349.4L2187.6 1356L2193.6 1362.6M2201 1349.4L2195 1356L2201 1362.6" fill="none" stroke="#333" stroke-width="1.8"/>
<path d="M2509.6 1349.4L2515.6 1356L2509.6 1362.6M2517 1349.4L2523 1356L2517 1362.6" fill="none" stroke="#333" stroke-width="1.8"/>
<text x="2234.5" y="1367.7" font-size="33.5" fill="#303030" textLength="77.5" lengthAdjust="spacingAndGlyphs" stroke="#303030" stroke-width="0.7">Back</text>
<text x="2394.5" y="1367.7" font-size="33.5" fill="#303030" textLength="79" lengthAdjust="spacingAndGlyphs" stroke="#303030" stroke-width="0.7">Next</text>
<line x1="0" y1="34.5" x2="2547" y2="34.5" stroke="#ddd" stroke-width="1" stroke-dasharray="2.25 2.25"/>
<line x1="0.9" y1="34" x2="0.9" y2="1380" stroke="#e8e8e8" stroke-width="1.8" stroke-dasharray="2.25 2.25"/>
<line x1="0" y1="1379.5" x2="2547" y2="1379.5" stroke="#ddd" stroke-width="1" stroke-dasharray="2.25 2.25"/>
</svg>
</body></html>
